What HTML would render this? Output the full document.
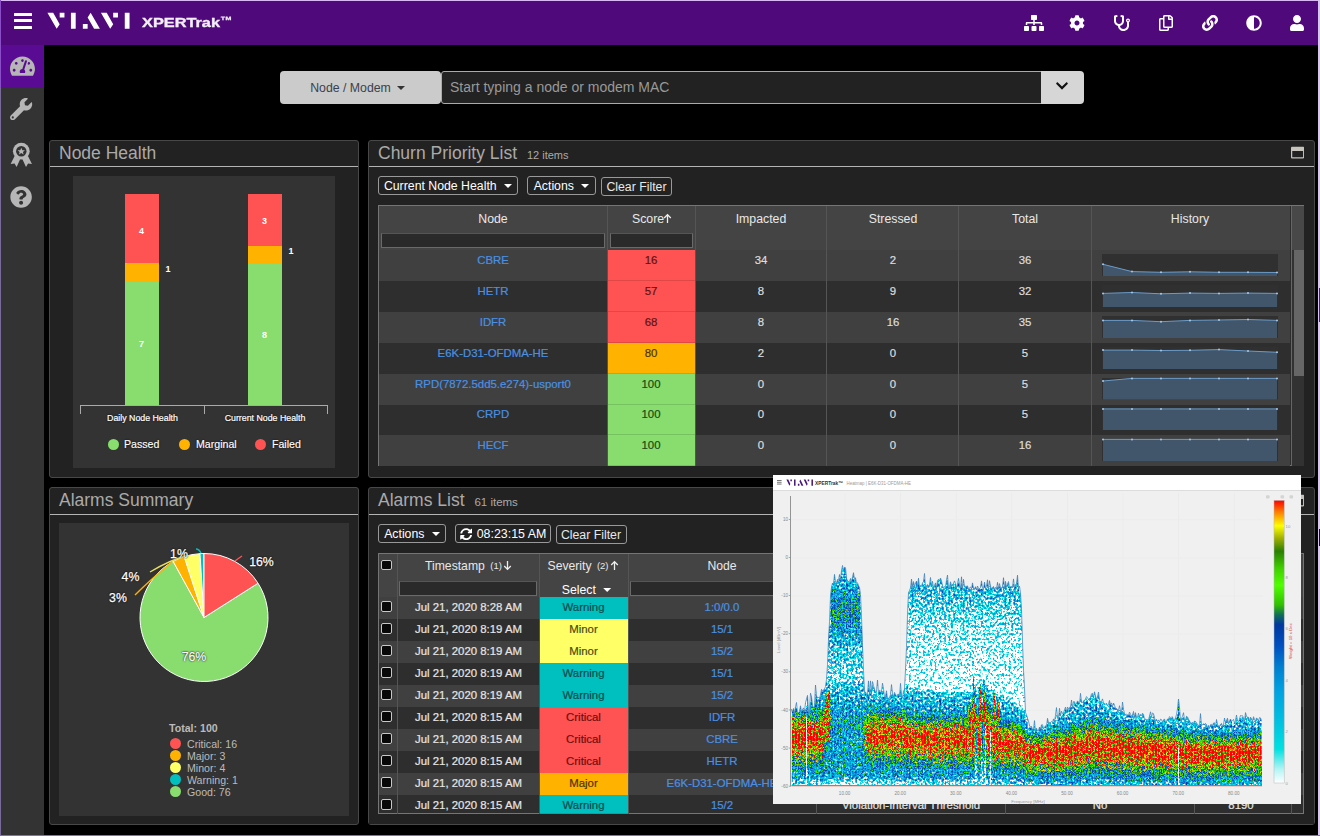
<!DOCTYPE html><html><head><meta charset="utf-8"><title>XPERTrak</title><style>
*{box-sizing:border-box;margin:0;padding:0}
html,body{width:1320px;height:836px;overflow:hidden;background:#000}
body{font-family:"Liberation Sans",sans-serif;position:relative;color:#ddd}
.abs{position:absolute}
#frame{position:absolute;left:0;top:0;width:1320px;height:836px;background:#000;overflow:hidden}
#hdr{position:absolute;left:0;top:0;width:1318px;height:45px;background:#50097b}
#side{position:absolute;left:0;top:45px;width:44px;height:791px;background:#333}
#sideact{position:absolute;left:0;top:45px;width:44px;height:43px;background:#5a0b94}
.panel{position:absolute;background:#222;border:1px solid #484848;border-radius:3px}
.ptitle{position:absolute;left:0;top:0;right:0;height:26.7px;border-bottom:1.2px solid #b4b4b4;color:#aaa;font-size:17.5px;line-height:25.2px;padding-left:9px;white-space:nowrap}
.ptitle small{font-size:12px;color:#aaa;margin-left:5px}
.btn{position:absolute;border:1px solid #999;border-radius:3px;color:#fff;font-size:12.5px;line-height:18.5px;text-align:center;white-space:nowrap;background:#222}
.caret{display:inline-block;width:0;height:0;border-left:4px solid transparent;border-right:4px solid transparent;border-top:4px solid #fff;vertical-align:middle;margin-left:4px;margin-top:-1px}
.t{position:absolute;white-space:nowrap}
.c{transform:translateX(-50%)}
</style></head><body><div id="frame">
<div id="hdr"></div><div id="side"></div><div id="sideact"></div>
<div class="abs" style="left:14px;top:13px;width:18px;height:3px;background:#fff;border-radius:.5px"></div>
<div class="abs" style="left:14px;top:19.3px;width:18px;height:3px;background:#fff;border-radius:.5px"></div>
<div class="abs" style="left:14px;top:25.6px;width:18px;height:3px;background:#fff;border-radius:.5px"></div>
<svg class="abs" style="left:44px;top:8px" width="90" height="26" viewBox="0 0 90 26"><path fill="#fff" d="M3.41 4.77 L9.20 4.77 L15.68 16.16 L12.68 20.79Z M15.68 4.77 L20.45 4.77 L20.45 9.54 L15.68 9.54Z M26.93 4.77 L31.70 4.77 L31.70 20.79 L26.93 20.79Z M55.90 20.79 L50.10 20.79 L43.63 9.41 L46.63 4.77Z M38.85 16.02 L43.63 16.02 L43.63 20.79 L38.85 20.79Z M56.92 4.77 L62.71 4.77 L69.19 16.16 L66.19 20.79Z M69.19 4.77 L73.96 4.77 L73.96 9.54 L69.19 9.54Z M80.78 4.77 L85.55 4.77 L85.55 20.79 L80.78 20.79Z"/></svg>
<div class="t" style="left:141.5px;top:11.1px;font-size:13.6px;font-weight:bold;color:#f3eff7;line-height:18px;-webkit-text-stroke:.35px #f3eff7;transform:scaleX(1.2);transform-origin:0 0">XPERTrak<span style="font-size:10.5px;vertical-align:2.6px;-webkit-text-stroke:.2px #f3eff7">&#8482;</span></div>
<svg class="abs" style="left:1023.5px;top:14.7px" width="20.00" height="16" viewBox="0 0 640 512"><path fill="#fff" d="M128 352H32c-17.67 0-32 14.33-32 32v96c0 17.67 14.33 32 32 32h96c17.67 0 32-14.33 32-32v-96c0-17.67-14.33-32-32-32zm-24-80h192v48h48v-48h192v48h48v-57.59c0-21.17-17.23-38.41-38.41-38.41H344v-64h40c17.67 0 32-14.33 32-32V32c0-17.67-14.33-32-32-32H256c-17.67 0-32 14.33-32 32v96c0 17.67 14.33 32 32 32h40v64H94.41C73.23 224 56 241.23 56 262.41V320h48v-48zm264 80h-96c-17.67 0-32 14.33-32 32v96c0 17.67 14.33 32 32 32h96c17.67 0 32-14.33 32-32v-96c0-17.67-14.33-32-32-32zm240 0h-96c-17.67 0-32 14.33-32 32v96c0 17.67 14.33 32 32 32h96c17.67 0 32-14.33 32-32v-96c0-17.67-14.33-32-32-32z"/></svg>
<svg class="abs" style="left:1069.4px;top:14.5px" width="16.00" height="16" viewBox="0 0 512 512"><path fill="#fff" d="M487.4 315.7l-42.6-24.6c4.3-23.2 4.3-47 0-70.200l42.600-24.600c4.900-2.800 7.100-8.600 5.500-14-11.100-35.600-30-67.800-54.700-94.600-3.800-4.100-10-5.100-14.800-2.300L380.800 110c-17.900-15.400-38.500-27.300-60.800-35.100V25.800c0-5.600-3.900-10.500-9.400-11.700-36.700-8.200-74.300-7.800-109.200 0-5.500 1.200-9.400 6.100-9.400 11.700V75c-22.200 7.900-42.800 19.800-60.800 35.100L88.700 85.500c-4.900-2.800-11-1.900-14.800 2.300-24.700 26.700-43.600 58.900-54.700 94.600-1.700 5.400.6 11.200 5.500 14L67.300 221c-4.300 23.200-4.300 47 0 70.200l-42.600 24.600c-4.900 2.800-7.100 8.600-5.500 14 11.100 35.600 30 67.800 54.700 94.600 3.800 4.100 10 5.100 14.800 2.300l42.600-24.600c17.900 15.400 38.500 27.300 60.800 35.100v49.200c0 5.600 3.900 10.500 9.400 11.700 36.700 8.200 74.300 7.800 109.200 0 5.500-1.200 9.400-6.100 9.400-11.700v-49.200c22.200-7.900 42.800-19.800 60.800-35.100l42.600 24.600c4.900 2.800 11 1.900 14.800-2.300 24.700-26.700 43.600-58.900 54.700-94.600 1.500-5.500-.7-11.300-5.600-14.100zM256 336c-44.100 0-80-35.900-80-80s35.900-80 80-80 80 35.900 80 80-35.900 80-80 80z"/></svg>
<svg class="abs" style="left:1113.6px;top:14.7px" width="16.00" height="16" viewBox="0 0 512 512"><path fill="#fff" d="M447.1 112c-34.2.5-62.3 28.400-63 62.600-.5 24.300 12.500 45.600 32 56.800V344c0 57.300-50.200 104-112 104-60 0-109.200-44.100-111.900-99.200C265 333.800 320 269.200 320 192V36.600c0-11.400-8.100-21.300-19.300-23.500L237.800.5c-13-2.600-25.600 5.800-28.200 18.800L206.400 35c-2.600 13 5.800 25.600 18.800 28.200l30.700 6.100v121.400c0 52.900-42.200 96.700-95.100 97.200-53.400.5-96.900-42.700-96.900-96V69.400l30.700-6.100c13-2.600 21.400-15.200 18.800-28.200l-3.100-15.700C107.700 6.400 95.100-2 82.100.6L19.300 13C8.100 15.300 0 25.100 0 36.600V192c0 77.300 55.100 142 128.100 156.800C130.700 439.200 208.600 512 304 512c97 0 176-75.400 176-168V231.400c19.100-11.100 32-31.700 32-55.400 0-35.700-29.200-64.500-64.900-64zm.9 88c-13.200 0-24-10.800-24-24s10.800-24 24-24 24 10.800 24 24-10.800 24-24 24z"/></svg>
<svg class="abs" style="left:1158.5px;top:14.7px" width="14.00" height="16" viewBox="0 0 448 512"><path fill="#fff" d="M433.941 65.941l-51.882-51.882A48 48 0 0 0 348.118 0H176c-26.510 0-48 21.490-48 48v48H48c-26.510 0-48 21.490-48 48v320c0 26.510 21.490 48 48 48h224c26.510 0 48-21.490 48-48v-48h80c26.510 0 48-21.490 48-48V99.882a48 48 0 0 0-14.059-33.941zM266 464H54a6 6 0 0 1-6-6V150a6 6 0 0 1 6-6h74v224c0 26.510 21.490 48 48 48h96v42a6 6 0 0 1-6 6zm128-96H182a6 6 0 0 1-6-6V54a6 6 0 0 1 6-6h106v88c0 13.255 10.745 24 24 24h88v202a6 6 0 0 1-6 6zm6-256h-64V48h9.632c1.591 0 3.117.632 4.243 1.757l48.368 48.368a6 6 0 0 1 1.757 4.243V112z"/></svg>
<svg class="abs" style="left:1201.5px;top:14.7px" width="16.00" height="16" viewBox="0 0 512 512"><path fill="#fff" d="M326.612 185.391c59.747 59.809 58.927 155.698.36 214.590-.11.12-.24.25-.36.37l-67.200 67.200c-59.270 59.270-155.699 59.262-214.960 0-59.270-59.260-59.270-155.700 0-214.960l37.106-37.106c9.840-9.840 26.786-3.300 27.294 10.606.648 17.722 3.826 35.527 9.690 52.721 1.986 5.822.567 12.262-3.783 16.612l-13.087 13.087c-28.026 28.026-28.905 73.660-1.155 101.960 28.024 28.579 74.086 28.749 102.325.510l67.200-67.190c28.191-28.191 28.073-73.757 0-101.830-3.701-3.694-7.429-6.564-10.341-8.569a16.037 16.037 0 0 1-6.947-12.606c-.396-10.567 3.348-21.456 11.698-29.806l21.054-21.055c5.521-5.521 14.182-6.199 20.584-1.731a152.482 152.482 0 0 1 20.522 17.197zM467.547 44.449c-59.261-59.262-155.690-59.270-214.960 0l-67.200 67.200c-.12.120-.25.250-.36.370-58.566 58.892-59.387 154.781.36 214.590a152.454 152.454 0 0 0 20.521 17.196c6.402 4.468 15.064 3.789 20.584-1.731l21.054-21.055c8.350-8.350 12.094-19.239 11.698-29.806a16.037 16.037 0 0 0-6.947-12.606c-2.912-2.005-6.640-4.875-10.341-8.569-28.073-28.073-28.191-73.639 0-101.830l67.200-67.190c28.239-28.239 74.300-28.069 102.325.510 27.750 28.300 26.872 73.934-1.155 101.960l-13.087 13.087c-4.350 4.350-5.769 10.790-3.783 16.612 5.864 17.194 9.042 34.999 9.690 52.721.509 13.906 17.454 20.446 27.294 10.606l37.106-37.106c59.271-59.259 59.271-155.699.001-214.959z"/></svg>
<svg class="abs" style="left:1245.5px;top:14.7px" width="16.00" height="16" viewBox="0 0 512 512"><path fill="#fff" d="M8 256c0 136.966 111.033 248 248 248s248-111.034 248-248S392.966 8 256 8 8 119.033 8 256zm248 184V72c101.705 0 184 82.311 184 184 0 101.705-82.311 184-184 184z"/></svg>
<svg class="abs" style="left:1290.2px;top:14.7px" width="14.00" height="16" viewBox="0 0 448 512"><path fill="#fff" d="M224 256c70.7 0 128-57.3 128-128S294.7 0 224 0 96 57.3 96 128s57.3 128 128 128zm89.6 32h-16.7c-22.2 10.2-46.9 16-72.900 16s-50.600-5.800-72.900-16h-16.700C60.200 288 0 348.200 0 422.400V464c0 26.500 21.500 48 48 48h352c26.500 0 48-21.500 48-48v-41.600c0-74.200-60.200-134.400-134.400-134.400z"/></svg>
<svg class="abs" style="left:9.8px;top:54.6px" width="24.97" height="22.2" viewBox="0 0 576 512"><path fill="#b6b6b6" d="M288 32C128.94 32 0 160.94 0 320c0 52.8 14.25 102.26 39.06 144.8 5.61 9.62 16.3 15.2 27.440 15.200h443c11.140 0 21.830-5.580 27.440-15.200C561.750 422.260 576 372.800 576 320c0-159.060-128.940-288-288-288zm0 64c14.710 0 26.580 10.130 30.320 23.650-1.110 2.260-2.640 4.230-3.450 6.670l-9.220 27.670c-5.130 3.490-10.970 6.010-17.640 6.010-17.670 0-32-14.330-32-32S270.330 96 288 96zM96 384c-17.670 0-32-14.330-32-32s14.330-32 32-32 32 14.330 32 32-14.330 32-32 32zm48-160c-17.670 0-32-14.330-32-32s14.330-32 32-32 32 14.330 32 32-14.330 32-32 32zm246.770-72.410l-61.330 184C343.130 347.330 352 364.540 352 384c0 11.720-3.380 22.550-8.880 32H232.880c-5.500-9.450-8.880-20.280-8.880-32 0-33.940 26.500-61.430 59.900-63.590l61.340-184.010c4.170-12.560 17.730-19.450 30.360-15.170 12.570 4.190 19.350 17.790 15.170 30.360zm14.660 57.200l15.520-46.550c3.470-1.290 7.130-2.230 11.050-2.230 17.670 0 32 14.330 32 32s-14.330 32-32 32c-11.380-.01-20.890-6.280-26.570-15.220zM480 384c-17.670 0-32-14.330-32-32s14.330-32 32-32 32 14.330 32 32-14.330 32-32 32z"/></svg>
<svg class="abs" style="left:10.4px;top:98.2px" width="22.20" height="22.2" viewBox="0 0 512 512"><path fill="#b6b6b6" d="M507.73 109.1c-2.24-9.03-13.54-12.09-20.120-5.510l-74.360 74.360-67.880-11.310-11.310-67.880 74.360-74.360c6.620-6.620 3.430-17.900-5.660-20.160-47.380-11.740-99.550.91-136.580 37.930-39.640 39.640-50.550 97.100-34.050 147.200L18.740 402.760c-24.990 24.990-24.990 65.510 0 90.500 24.990 24.990 65.510 24.990 90.500 0l213.210-213.210c50.120 16.710 107.470 5.680 147.370-34.220 37.070-37.070 49.700-89.320 37.910-136.730zM64 472c-13.250 0-24-10.750-24-24 0-13.260 10.750-24 24-24s24 10.740 24 24c0 13.250-10.750 24-24 24z"/></svg>
<svg class="abs" style="left:10.2px;top:185.9px" width="22.20" height="22.2" viewBox="0 0 512 512"><path fill="#b6b6b6" d="M504 256c0 136.997-111.043 248-248 248S8 392.997 8 256C8 119.083 119.043 8 256 8s248 111.083 248 248zM262.655 90c-54.497 0-89.255 22.957-116.549 63.758-3.536 5.286-2.353 12.415 2.715 16.258l34.699 26.310c5.205 3.947 12.621 3.008 16.665-2.122 17.864-22.658 30.113-35.797 57.303-35.797 20.429 0 45.698 13.148 45.698 32.958 0 14.976-12.363 22.667-32.534 33.976C247.128 238.528 216 254.941 216 296v4c0 6.627 5.373 12 12 12h56c6.627 0 12-5.373 12-12v-1.333c0-28.462 83.186-29.647 83.186-106.667 0-58.002-60.165-102-116.531-102zM256 338c-25.365 0-46 20.635-46 46 0 25.364 20.635 46 46 46s46-20.636 46-46c0-25.365-20.635-46-46-46z"/></svg>
<svg class="abs" style="left:9px;top:141.5px" width="24.6" height="25.6" viewBox="0 0 24 25"><path fill="#b6b6b6" d="M5.6 13.5 L1.6 21.6 L5.4 21 L7.4 24.4 L11 16.5Z M18.4 13.5 L22.4 21.6 L18.6 21 L16.6 24.4 L13 16.5Z"/><circle cx="12" cy="9" r="8.2" fill="#b6b6b6"/><circle cx="12" cy="9" r="5.1" fill="#333"/><path fill="#b6b6b6" d="M12 5.6 L13 8 L15.600 8.100 L13.600 9.700 L14.300 12.200 L12 10.800 L9.700 12.200 L10.400 9.700 L8.400 8.100 L11 8Z"/></svg>
<div class="abs" style="left:280px;top:71px;width:160.5px;height:33px;background:#cbcbcb;border-radius:4px;color:#3a4250;font-size:12.3px;line-height:34.5px;text-align:center;padding-right:5px">Node / Modem <span class="caret" style="border-top-color:#333;margin-left:3px"></span></div>
<div class="abs" style="left:441px;top:71px;width:601px;height:33px;background:#222;border:1px solid #aaa;border-radius:3px 0 0 3px;color:#999;font-size:14px;line-height:30px;padding-left:8px">Start typing a node or modem MAC</div>
<div class="abs" style="left:1041px;top:71px;width:43px;height:33px;background:#d6d6d6;border-radius:0 4px 4px 0"></div>
<svg class="abs" style="left:1056px;top:79.4px" width="11.99" height="13.7" viewBox="0 0 448 512"><path fill="#111" d="M207.029 381.476L12.686 187.132c-9.373-9.373-9.373-24.569 0-33.941l22.667-22.667c9.357-9.357 24.522-9.375 33.901-.04L224 284.505l154.745-154.021c9.379-9.335 24.544-9.317 33.901.04l22.667 22.667c9.373 9.373 9.373 24.569 0 33.941L240.971 381.476c-9.373 9.372-24.569 9.372-33.942 0z"/></svg>
<div class="panel" style="left:49px;top:139.6px;width:310px;height:338.4px"><div class="ptitle">Node Health</div></div>
<div class="abs" style="left:73px;top:176px;width:262px;height:292px;background:#333"></div>
<div class="abs" style="left:125px;top:193.5px;width:34px;height:69.5px;background:#ff5252"></div><div class="abs" style="left:125px;top:263px;width:34px;height:18.5px;background:#ffb300"></div><div class="abs" style="left:125px;top:281.5px;width:34px;height:123.0px;background:#88dd6e"></div>
<div class="abs" style="left:248px;top:193.5px;width:34px;height:52.5px;background:#ff5252"></div><div class="abs" style="left:248px;top:246px;width:34px;height:18px;background:#ffb300"></div><div class="abs" style="left:248px;top:264px;width:34px;height:140.5px;background:#88dd6e"></div>
<div class="abs" style="left:80px;top:405px;width:248px;height:9px;border:1px solid #aaa;border-bottom:none"></div><div class="abs" style="left:203.5px;top:405px;width:1px;height:9px;background:#aaa"></div>
<div class="t c" style="left:141.5px;top:225.5px;font-size:9px;line-height:11px;color:#fff;font-weight:bold;">4</div>
<div class="t c" style="left:168px;top:263.5px;font-size:9px;line-height:11px;color:#fff;font-weight:bold;">1</div>
<div class="t c" style="left:141.5px;top:339px;font-size:9px;line-height:11px;color:#fff;font-weight:bold;">7</div>
<div class="t c" style="left:264.5px;top:216px;font-size:9px;line-height:11px;color:#fff;font-weight:bold;">3</div>
<div class="t c" style="left:291px;top:246px;font-size:9px;line-height:11px;color:#fff;font-weight:bold;">1</div>
<div class="t c" style="left:264.5px;top:330px;font-size:9px;line-height:11px;color:#fff;font-weight:bold;">8</div>
<div class="t c" style="left:142.5px;top:413px;font-size:8.8px;line-height:10.8px;color:#fff;text-shadow:0 0 2px #000;-webkit-text-stroke:.2px #fff">Daily Node Health</div>
<div class="t c" style="left:265px;top:413px;font-size:8.8px;line-height:10.8px;color:#fff;text-shadow:0 0 2px #000;-webkit-text-stroke:.2px #fff">Current Node Health</div>
<div class="abs" style="left:107.5px;top:438.7px;width:11px;height:11px;border-radius:50%;background:#88dd6e"></div>
<div class="t" style="left:124px;top:437.3px;font-size:10.6px;line-height:14px;color:#fff;text-shadow:0 0 2px #000;-webkit-text-stroke:.15px #fff">Passed</div>
<div class="abs" style="left:178.5px;top:438.7px;width:11px;height:11px;border-radius:50%;background:#ffb300"></div>
<div class="t" style="left:196px;top:437.3px;font-size:10.6px;line-height:14px;color:#fff;text-shadow:0 0 2px #000;-webkit-text-stroke:.15px #fff">Marginal</div>
<div class="abs" style="left:255.0px;top:438.7px;width:11px;height:11px;border-radius:50%;background:#ff5252"></div>
<div class="t" style="left:272px;top:437.3px;font-size:10.6px;line-height:14px;color:#fff;text-shadow:0 0 2px #000;-webkit-text-stroke:.15px #fff">Failed</div>
<div class="panel" style="left:368px;top:139.6px;width:947px;height:338.4px"><div class="ptitle">Churn Priority List <small style="font-size:11px">12 items</small></div></div>
<svg class="abs" style="left:1291.1px;top:146px" width="13.30" height="13.3" viewBox="0 0 512 512"><path fill="#c6c2bc" d="M464 32H48C21.5 32 0 53.5 0 80v352c0 26.500 21.500 48 48 48h416c26.500 0 48-21.500 48-48V80c0-26.500-21.500-48-48-48zm0 394c0 3.300-2.700 6-6 6H54c-3.300 0-6-2.700-6-6V192h416v234z"/></svg>
<div class="btn" style="left:378px;top:176px;width:140px;height:19px;font-size:12.3px">Current Node Health <span class="caret"></span></div>
<div class="btn" style="left:527px;top:176px;width:69px;height:19px;font-size:12.3px">Actions <span class="caret"></span></div>
<div class="btn" style="left:601px;top:177px;width:71px;height:19px;font-size:12.3px;color:#e8e8e8">Clear Filter</div>
<div class="abs" style="left:378px;top:205px;width:926px;height:261px;background:#2d2d2d;border:1px solid #757575"></div>
<div class="abs" style="left:379px;top:206px;width:911px;height:44px;background:#444"></div>
<div class="abs" style="left:379px;top:250px;width:911px;height:31px;background:#404040"></div>
<div class="abs" style="left:608px;top:250px;width:87.5px;height:31px;background:#ff5252;border-bottom:1px solid rgba(0,0,0,.12)"></div>
<div class="abs" style="left:379px;top:281px;width:911px;height:31px;background:#2e2e2e"></div>
<div class="abs" style="left:608px;top:281px;width:87.5px;height:31px;background:#ff5252;border-bottom:1px solid rgba(0,0,0,.12)"></div>
<div class="abs" style="left:379px;top:312px;width:911px;height:31px;background:#404040"></div>
<div class="abs" style="left:608px;top:312px;width:87.5px;height:31px;background:#ff5252;border-bottom:1px solid rgba(0,0,0,.12)"></div>
<div class="abs" style="left:379px;top:343px;width:911px;height:31px;background:#2e2e2e"></div>
<div class="abs" style="left:608px;top:343px;width:87.5px;height:31px;background:#ffb300;border-bottom:1px solid rgba(0,0,0,.12)"></div>
<div class="abs" style="left:379px;top:374px;width:911px;height:30.5px;background:#404040"></div>
<div class="abs" style="left:608px;top:374px;width:87.5px;height:30.5px;background:#88dd6e;border-bottom:1px solid rgba(0,0,0,.12)"></div>
<div class="abs" style="left:379px;top:404.5px;width:911px;height:30.5px;background:#2e2e2e"></div>
<div class="abs" style="left:608px;top:404.5px;width:87.5px;height:30.5px;background:#88dd6e;border-bottom:1px solid rgba(0,0,0,.12)"></div>
<div class="abs" style="left:379px;top:435px;width:911px;height:31px;background:#404040"></div>
<div class="abs" style="left:608px;top:435px;width:87.5px;height:31px;background:#88dd6e;border-bottom:1px solid rgba(0,0,0,.12)"></div>
<div class="abs" style="left:607.0px;top:206px;width:1px;height:260px;background:#555"></div>
<div class="abs" style="left:695.0px;top:206px;width:1px;height:260px;background:#555"></div>
<div class="abs" style="left:826.0px;top:206px;width:1px;height:260px;background:#555"></div>
<div class="abs" style="left:958.0px;top:206px;width:1px;height:260px;background:#555"></div>
<div class="abs" style="left:1090.5px;top:206px;width:1px;height:260px;background:#555"></div>
<div class="t c" style="left:493px;top:212px;font-size:12.3px;line-height:14.3px;color:#e8e8e8;">Node</div>
<div class="t c" style="left:648px;top:212px;font-size:12.3px;line-height:14.3px;color:#e8e8e8;">Score</div>
<svg class="abs" style="left:663px;top:213px" width="9" height="11" viewBox="0 0 9 11"><path d="M4.5 10 V2 M1.2 5 L4.5 1.6 L7.8 5" fill="none" stroke="#eee" stroke-width="1.3"/></svg>
<div class="t c" style="left:761px;top:212px;font-size:12.3px;line-height:14.3px;color:#e8e8e8;">Impacted</div>
<div class="t c" style="left:893px;top:212px;font-size:12.3px;line-height:14.3px;color:#e8e8e8;">Stressed</div>
<div class="t c" style="left:1025px;top:212px;font-size:12.3px;line-height:14.3px;color:#e8e8e8;">Total</div>
<div class="t c" style="left:1190px;top:212px;font-size:12.3px;line-height:14.3px;color:#e8e8e8;">History</div>
<div class="abs" style="left:380.5px;top:232.5px;width:224px;height:15.5px;background:#2a2a2a;border:1.5px solid #6a6a6a;border-top-color:#555"></div>
<div class="abs" style="left:610px;top:232.5px;width:82.5px;height:15.5px;background:#2a2a2a;border:1.5px solid #6a6a6a;border-top-color:#555"></div>
<div class="t c" style="left:493px;top:253.5px;font-size:11.4px;line-height:13.4px;color:#4a90e2;-webkit-text-stroke:.2px #4a90e2">CBRE</div>
<div class="t c" style="left:651px;top:253.5px;font-size:11.4px;line-height:13.4px;color:#5e1414;-webkit-text-stroke:.2px">16</div>
<div class="t c" style="left:761px;top:253.5px;font-size:11.4px;line-height:13.4px;color:#ddd;-webkit-text-stroke:.2px #ddd">34</div>
<div class="t c" style="left:893px;top:253.5px;font-size:11.4px;line-height:13.4px;color:#ddd;-webkit-text-stroke:.2px #ddd">2</div>
<div class="t c" style="left:1025px;top:253.5px;font-size:11.4px;line-height:13.4px;color:#ddd;-webkit-text-stroke:.2px #ddd">36</div>
<div class="t c" style="left:493px;top:284.5px;font-size:11.4px;line-height:13.4px;color:#4a90e2;-webkit-text-stroke:.2px #4a90e2">HETR</div>
<div class="t c" style="left:651px;top:284.5px;font-size:11.4px;line-height:13.4px;color:#5e1414;-webkit-text-stroke:.2px">57</div>
<div class="t c" style="left:761px;top:284.5px;font-size:11.4px;line-height:13.4px;color:#ddd;-webkit-text-stroke:.2px #ddd">8</div>
<div class="t c" style="left:893px;top:284.5px;font-size:11.4px;line-height:13.4px;color:#ddd;-webkit-text-stroke:.2px #ddd">9</div>
<div class="t c" style="left:1025px;top:284.5px;font-size:11.4px;line-height:13.4px;color:#ddd;-webkit-text-stroke:.2px #ddd">32</div>
<div class="t c" style="left:493px;top:315.5px;font-size:11.4px;line-height:13.4px;color:#4a90e2;-webkit-text-stroke:.2px #4a90e2">IDFR</div>
<div class="t c" style="left:651px;top:315.5px;font-size:11.4px;line-height:13.4px;color:#5e1414;-webkit-text-stroke:.2px">68</div>
<div class="t c" style="left:761px;top:315.5px;font-size:11.4px;line-height:13.4px;color:#ddd;-webkit-text-stroke:.2px #ddd">8</div>
<div class="t c" style="left:893px;top:315.5px;font-size:11.4px;line-height:13.4px;color:#ddd;-webkit-text-stroke:.2px #ddd">16</div>
<div class="t c" style="left:1025px;top:315.5px;font-size:11.4px;line-height:13.4px;color:#ddd;-webkit-text-stroke:.2px #ddd">35</div>
<div class="t c" style="left:493px;top:346.5px;font-size:11.4px;line-height:13.4px;color:#4a90e2;-webkit-text-stroke:.2px #4a90e2">E6K-D31-OFDMA-HE</div>
<div class="t c" style="left:651px;top:346.5px;font-size:11.4px;line-height:13.4px;color:#4e3200;-webkit-text-stroke:.2px">80</div>
<div class="t c" style="left:761px;top:346.5px;font-size:11.4px;line-height:13.4px;color:#ddd;-webkit-text-stroke:.2px #ddd">2</div>
<div class="t c" style="left:893px;top:346.5px;font-size:11.4px;line-height:13.4px;color:#ddd;-webkit-text-stroke:.2px #ddd">0</div>
<div class="t c" style="left:1025px;top:346.5px;font-size:11.4px;line-height:13.4px;color:#ddd;-webkit-text-stroke:.2px #ddd">5</div>
<div class="t c" style="left:493px;top:377.5px;font-size:11.4px;line-height:13.4px;color:#4a90e2;-webkit-text-stroke:.2px #4a90e2">RPD(7872.5dd5.e274)-usport0</div>
<div class="t c" style="left:651px;top:377.5px;font-size:11.4px;line-height:13.4px;color:#1d4a14;-webkit-text-stroke:.2px">100</div>
<div class="t c" style="left:761px;top:377.5px;font-size:11.4px;line-height:13.4px;color:#ddd;-webkit-text-stroke:.2px #ddd">0</div>
<div class="t c" style="left:893px;top:377.5px;font-size:11.4px;line-height:13.4px;color:#ddd;-webkit-text-stroke:.2px #ddd">0</div>
<div class="t c" style="left:1025px;top:377.5px;font-size:11.4px;line-height:13.4px;color:#ddd;-webkit-text-stroke:.2px #ddd">5</div>
<div class="t c" style="left:493px;top:408.0px;font-size:11.4px;line-height:13.4px;color:#4a90e2;-webkit-text-stroke:.2px #4a90e2">CRPD</div>
<div class="t c" style="left:651px;top:408.0px;font-size:11.4px;line-height:13.4px;color:#1d4a14;-webkit-text-stroke:.2px">100</div>
<div class="t c" style="left:761px;top:408.0px;font-size:11.4px;line-height:13.4px;color:#ddd;-webkit-text-stroke:.2px #ddd">0</div>
<div class="t c" style="left:893px;top:408.0px;font-size:11.4px;line-height:13.4px;color:#ddd;-webkit-text-stroke:.2px #ddd">0</div>
<div class="t c" style="left:1025px;top:408.0px;font-size:11.4px;line-height:13.4px;color:#ddd;-webkit-text-stroke:.2px #ddd">5</div>
<div class="t c" style="left:493px;top:438.5px;font-size:11.4px;line-height:13.4px;color:#4a90e2;-webkit-text-stroke:.2px #4a90e2">HECF</div>
<div class="t c" style="left:651px;top:438.5px;font-size:11.4px;line-height:13.4px;color:#1d4a14;-webkit-text-stroke:.2px">100</div>
<div class="t c" style="left:761px;top:438.5px;font-size:11.4px;line-height:13.4px;color:#ddd;-webkit-text-stroke:.2px #ddd">0</div>
<div class="t c" style="left:893px;top:438.5px;font-size:11.4px;line-height:13.4px;color:#ddd;-webkit-text-stroke:.2px #ddd">0</div>
<div class="t c" style="left:1025px;top:438.5px;font-size:11.4px;line-height:13.4px;color:#ddd;-webkit-text-stroke:.2px #ddd">16</div>
<svg class="abs" style="left:0;top:0" width="1320" height="836" viewBox="0 0 1320 836"><rect x="1102" y="254" width="176" height="22" fill="#303030"/><polygon points="1103,276 1103.0,264.3 1132.0,271.6 1161.0,272.3 1190.0,271.8 1219.0,272.3 1248.0,272.3 1277.0,272.5 1277,276" fill="#41566b"/><polyline points="1103.0,264.3 1132.0,271.6 1161.0,272.3 1190.0,271.8 1219.0,272.3 1248.0,272.3 1277.0,272.5" fill="none" stroke="#6b9bc7" stroke-width="1"/><circle cx="1103.0" cy="264.3" r="1" fill="#a8c8e8"/><circle cx="1132.0" cy="271.6" r="1" fill="#a8c8e8"/><circle cx="1161.0" cy="272.3" r="1" fill="#a8c8e8"/><circle cx="1190.0" cy="271.8" r="1" fill="#a8c8e8"/><circle cx="1219.0" cy="272.3" r="1" fill="#a8c8e8"/><circle cx="1248.0" cy="272.3" r="1" fill="#a8c8e8"/><circle cx="1277.0" cy="272.5" r="1" fill="#a8c8e8"/><rect x="1102" y="285" width="176" height="22" fill="#303030"/><polygon points="1103,307 1103.0,293.4 1132.0,292.5 1161.0,293.8 1190.0,293.1 1219.0,293.4 1248.0,293.1 1277.0,293.4 1277,307" fill="#41566b"/><polyline points="1103.0,293.4 1132.0,292.5 1161.0,293.8 1190.0,293.1 1219.0,293.4 1248.0,293.1 1277.0,293.4" fill="none" stroke="#6b9bc7" stroke-width="1"/><circle cx="1103.0" cy="293.4" r="1" fill="#a8c8e8"/><circle cx="1132.0" cy="292.5" r="1" fill="#a8c8e8"/><circle cx="1161.0" cy="293.8" r="1" fill="#a8c8e8"/><circle cx="1190.0" cy="293.1" r="1" fill="#a8c8e8"/><circle cx="1219.0" cy="293.4" r="1" fill="#a8c8e8"/><circle cx="1248.0" cy="293.1" r="1" fill="#a8c8e8"/><circle cx="1277.0" cy="293.4" r="1" fill="#a8c8e8"/><rect x="1102" y="316" width="176" height="22" fill="#303030"/><polygon points="1103,338 1103.0,320.4 1132.0,320.4 1161.0,321.7 1190.0,320.4 1219.0,320.0 1248.0,319.5 1277.0,320.4 1277,338" fill="#41566b"/><polyline points="1103.0,320.4 1132.0,320.4 1161.0,321.7 1190.0,320.4 1219.0,320.0 1248.0,319.5 1277.0,320.4" fill="none" stroke="#6b9bc7" stroke-width="1"/><circle cx="1103.0" cy="320.4" r="1" fill="#a8c8e8"/><circle cx="1132.0" cy="320.4" r="1" fill="#a8c8e8"/><circle cx="1161.0" cy="321.7" r="1" fill="#a8c8e8"/><circle cx="1190.0" cy="320.4" r="1" fill="#a8c8e8"/><circle cx="1219.0" cy="320.0" r="1" fill="#a8c8e8"/><circle cx="1248.0" cy="319.5" r="1" fill="#a8c8e8"/><circle cx="1277.0" cy="320.4" r="1" fill="#a8c8e8"/><rect x="1102" y="347" width="176" height="22" fill="#303030"/><polygon points="1103,369 1103.0,350.1 1132.0,350.1 1161.0,350.5 1190.0,350.3 1219.0,349.6 1248.0,351.0 1277.0,352.3 1277,369" fill="#41566b"/><polyline points="1103.0,350.1 1132.0,350.1 1161.0,350.5 1190.0,350.3 1219.0,349.6 1248.0,351.0 1277.0,352.3" fill="none" stroke="#6b9bc7" stroke-width="1"/><circle cx="1103.0" cy="350.1" r="1" fill="#a8c8e8"/><circle cx="1132.0" cy="350.1" r="1" fill="#a8c8e8"/><circle cx="1161.0" cy="350.5" r="1" fill="#a8c8e8"/><circle cx="1190.0" cy="350.3" r="1" fill="#a8c8e8"/><circle cx="1219.0" cy="349.6" r="1" fill="#a8c8e8"/><circle cx="1248.0" cy="351.0" r="1" fill="#a8c8e8"/><circle cx="1277.0" cy="352.3" r="1" fill="#a8c8e8"/><rect x="1102" y="378" width="176" height="21.5" fill="#303030"/><polygon points="1103,399.5 1103.0,381.0 1132.0,378.4 1161.0,378.4 1190.0,378.4 1219.0,378.4 1248.0,378.4 1277.0,378.4 1277,399.5" fill="#41566b"/><polyline points="1103.0,381.0 1132.0,378.4 1161.0,378.4 1190.0,378.4 1219.0,378.4 1248.0,378.4 1277.0,378.4" fill="none" stroke="#6b9bc7" stroke-width="1"/><circle cx="1103.0" cy="381.0" r="1" fill="#a8c8e8"/><circle cx="1132.0" cy="378.4" r="1" fill="#a8c8e8"/><circle cx="1161.0" cy="378.4" r="1" fill="#a8c8e8"/><circle cx="1190.0" cy="378.4" r="1" fill="#a8c8e8"/><circle cx="1219.0" cy="378.4" r="1" fill="#a8c8e8"/><circle cx="1248.0" cy="378.4" r="1" fill="#a8c8e8"/><circle cx="1277.0" cy="378.4" r="1" fill="#a8c8e8"/><rect x="1102" y="408.5" width="176" height="21.5" fill="#303030"/><polygon points="1103,430 1103.0,408.9 1132.0,408.9 1161.0,408.9 1190.0,408.9 1219.0,408.9 1248.0,408.9 1277.0,408.9 1277,430" fill="#41566b"/><polyline points="1103.0,408.9 1132.0,408.9 1161.0,408.9 1190.0,408.9 1219.0,408.9 1248.0,408.9 1277.0,408.9" fill="none" stroke="#6b9bc7" stroke-width="1"/><circle cx="1103.0" cy="408.9" r="1" fill="#a8c8e8"/><circle cx="1132.0" cy="408.9" r="1" fill="#a8c8e8"/><circle cx="1161.0" cy="408.9" r="1" fill="#a8c8e8"/><circle cx="1190.0" cy="408.9" r="1" fill="#a8c8e8"/><circle cx="1219.0" cy="408.9" r="1" fill="#a8c8e8"/><circle cx="1248.0" cy="408.9" r="1" fill="#a8c8e8"/><circle cx="1277.0" cy="408.9" r="1" fill="#a8c8e8"/><rect x="1102" y="439" width="176" height="22" fill="#303030"/><polygon points="1103,461 1103.0,439.4 1132.0,439.4 1161.0,439.4 1190.0,439.4 1219.0,439.4 1248.0,439.4 1277.0,439.4 1277,461" fill="#41566b"/><polyline points="1103.0,439.4 1132.0,439.4 1161.0,439.4 1190.0,439.4 1219.0,439.4 1248.0,439.4 1277.0,439.4" fill="none" stroke="#6b9bc7" stroke-width="1"/><circle cx="1103.0" cy="439.4" r="1" fill="#a8c8e8"/><circle cx="1132.0" cy="439.4" r="1" fill="#a8c8e8"/><circle cx="1161.0" cy="439.4" r="1" fill="#a8c8e8"/><circle cx="1190.0" cy="439.4" r="1" fill="#a8c8e8"/><circle cx="1219.0" cy="439.4" r="1" fill="#a8c8e8"/><circle cx="1248.0" cy="439.4" r="1" fill="#a8c8e8"/><circle cx="1277.0" cy="439.4" r="1" fill="#a8c8e8"/></svg>
<div class="abs" style="left:1290.5px;top:206px;width:13px;height:260px;background:linear-gradient(#484848 0,#484848 44px,#323232 44px);border-left:1px solid #666"></div>
<div class="abs" style="left:1294px;top:250px;width:9.5px;height:126px;background:#666"></div>
<div class="panel" style="left:49px;top:487px;width:310px;height:338px"><div class="ptitle">Alarms Summary</div></div>
<div class="abs" style="left:59px;top:522.5px;width:290px;height:293px;background:#333"></div>
<svg class="abs" style="left:0;top:0" width="1320" height="836" viewBox="0 0 1320 836"><path d="M204 617.5 L258.04 583.21 A64 64 0 1 1 173.17 561.42Z" fill="#88dd6e" stroke="#fff" stroke-width="1" stroke-linejoin="round"/><path d="M204 617.5 L173.17 561.42 A64 64 0 0 1 184.22 556.63Z" fill="#ffb300" stroke="#fff" stroke-width="1" stroke-linejoin="round"/><path d="M204 617.5 L184.22 556.63 A64 64 0 0 1 199.98 553.63Z" fill="#ffff66" stroke="#fff" stroke-width="1" stroke-linejoin="round"/><path d="M204 617.5 L199.98 553.63 A64 64 0 0 1 204.00 553.50Z" fill="#00bfbf" stroke="#fff" stroke-width="1" stroke-linejoin="round"/><path d="M204 617.5 L204.00 553.50 A64 64 0 0 1 258.04 583.21Z" fill="#ff5252" stroke="#fff" stroke-width="1" stroke-linejoin="round"/><path d="M235 561 Q239 558 242 556" stroke="#ff5252" fill="none" stroke-width="1.4"/><path d="M201 553 Q199 549 196 549" stroke="#00bfbf" fill="none" stroke-width="1.4"/><path d="M186 556 Q170 560 150 572" stroke="#e8e060" fill="none" stroke-width="1.4"/><path d="M172 562 Q150 580 135 595" stroke="#ffb300" fill="none" stroke-width="1.4"/></svg>
<div class="t c" style="left:261.5px;top:555.2px;font-size:12.3px;line-height:14.3px;color:#fff;text-shadow:0 0 2px #000,0 0 1px #000;-webkit-text-stroke:.25px #fff">16%</div>
<div class="t c" style="left:179px;top:546.7px;font-size:12.3px;line-height:14.3px;color:#fff;text-shadow:0 0 2px #000,0 0 1px #000;-webkit-text-stroke:.25px #fff">1%</div>
<div class="t c" style="left:130.5px;top:569.7px;font-size:12.3px;line-height:14.3px;color:#fff;text-shadow:0 0 2px #000,0 0 1px #000;-webkit-text-stroke:.25px #fff">4%</div>
<div class="t c" style="left:118px;top:591.2px;font-size:12.3px;line-height:14.3px;color:#fff;text-shadow:0 0 2px #000,0 0 1px #000;-webkit-text-stroke:.25px #fff">3%</div>
<div class="t c" style="left:194px;top:650.2px;font-size:12.3px;line-height:14.3px;color:#fff;text-shadow:0 0 2px #000,0 0 1px #000;-webkit-text-stroke:.25px #fff">76%</div>
<div class="t" style="left:169px;top:721px;font-size:10.6px;line-height:14px;font-weight:bold;color:#bbb">Total: 100</div>
<div class="abs" style="left:170px;top:738.0px;width:11px;height:11px;border-radius:50%;background:#ff5252"></div>
<div class="t" style="left:187px;top:736.5px;font-size:10.6px;line-height:14px;color:#bbb">Critical: 16</div>
<div class="abs" style="left:170px;top:750.1px;width:11px;height:11px;border-radius:50%;background:#ffb300"></div>
<div class="t" style="left:187px;top:748.6px;font-size:10.6px;line-height:14px;color:#bbb">Major: 3</div>
<div class="abs" style="left:170px;top:762.2px;width:11px;height:11px;border-radius:50%;background:#ffff66"></div>
<div class="t" style="left:187px;top:760.7px;font-size:10.6px;line-height:14px;color:#bbb">Minor: 4</div>
<div class="abs" style="left:170px;top:774.3px;width:11px;height:11px;border-radius:50%;background:#00bfbf"></div>
<div class="t" style="left:187px;top:772.8px;font-size:10.6px;line-height:14px;color:#bbb">Warning: 1</div>
<div class="abs" style="left:170px;top:786.4px;width:11px;height:11px;border-radius:50%;background:#88dd6e"></div>
<div class="t" style="left:187px;top:784.9px;font-size:10.6px;line-height:14px;color:#bbb">Good: 76</div>
<div class="panel" style="left:368px;top:487px;width:947px;height:338px"><div class="ptitle">Alarms List <small style="font-size:11.5px">61 items</small></div></div>
<svg class="abs" style="left:1291.1px;top:494px" width="13.30" height="13.3" viewBox="0 0 512 512"><path fill="#c6c2bc" d="M464 32H48C21.5 32 0 53.5 0 80v352c0 26.500 21.500 48 48 48h416c26.500 0 48-21.500 48-48V80c0-26.500-21.500-48-48-48zm0 394c0 3.300-2.700 6-6 6H54c-3.300 0-6-2.700-6-6V192h416v234z"/></svg>
<div class="btn" style="left:378px;top:523.5px;width:68px;height:19px;font-size:12.3px">Actions <span class="caret"></span></div>
<div class="btn" style="left:455px;top:523.5px;width:96px;height:19px;font-size:12.4px;padding-left:17px">08:23:15 AM</div>
<svg class="abs" style="left:460.1px;top:527.6px" width="12.30" height="12.3" viewBox="0 0 512 512"><path fill="#fff" d="M370.72 133.28C339.458 104.008 298.888 87.962 255.848 88c-77.458.068-144.328 53.178-162.791 126.850-1.344 5.363-6.122 9.150-11.651 9.150H24.103c-7.498 0-13.194-6.807-11.807-14.176C33.933 94.924 134.813 8 256 8c66.448 0 126.791 26.136 171.315 68.685L463.030 40.970C478.149 25.851 504 36.559 504 57.941V192c0 13.255-10.745 24-24 24H345.941c-21.382 0-32.090-25.851-16.971-40.971l41.750-41.749zM32 296h134.059c21.382 0 32.090 25.851 16.971 40.971l-41.750 41.750c31.262 29.273 71.835 45.319 114.876 45.280 77.418-.07 144.315-53.144 162.787-126.849 1.344-5.363 6.122-9.150 11.651-9.150h57.304c7.498 0 13.194 6.807 11.807 14.176C478.067 417.076 377.187 504 256 504c-66.448 0-126.791-26.136-171.315-68.685L48.970 471.030C33.851 486.149 8 475.441 8 454.059V320c0-13.255 10.745-24 24-24z"/></svg>
<div class="btn" style="left:555.5px;top:524.5px;width:71px;height:19px;font-size:12.3px;color:#e8e8e8">Clear Filter</div>
<div class="abs" style="left:378px;top:552.5px;width:926px;height:261.5px;background:#2b2b2b;border:1px solid #757575"></div>
<div class="abs" style="left:379px;top:553.5px;width:924px;height:43.5px;background:#444"></div>
<div class="abs" style="left:379px;top:597px;width:924px;height:22px;background:#404040"></div>
<div class="abs" style="left:539.5px;top:597px;width:88.5px;height:22px;background:#00bfbf"></div>
<div class="abs" style="left:379px;top:619px;width:924px;height:22px;background:#2e2e2e"></div>
<div class="abs" style="left:539.5px;top:619px;width:88.5px;height:22px;background:#ffff66"></div>
<div class="abs" style="left:379px;top:641px;width:924px;height:22px;background:#404040"></div>
<div class="abs" style="left:539.5px;top:641px;width:88.5px;height:22px;background:#ffff66"></div>
<div class="abs" style="left:379px;top:663px;width:924px;height:22px;background:#2e2e2e"></div>
<div class="abs" style="left:539.5px;top:663px;width:88.5px;height:22px;background:#00bfbf"></div>
<div class="abs" style="left:379px;top:685px;width:924px;height:22px;background:#404040"></div>
<div class="abs" style="left:539.5px;top:685px;width:88.5px;height:22px;background:#00bfbf"></div>
<div class="abs" style="left:379px;top:707px;width:924px;height:22px;background:#2e2e2e"></div>
<div class="abs" style="left:539.5px;top:707px;width:88.5px;height:22px;background:#ff5252"></div>
<div class="abs" style="left:379px;top:729px;width:924px;height:22px;background:#404040"></div>
<div class="abs" style="left:539.5px;top:729px;width:88.5px;height:22px;background:#ff5252"></div>
<div class="abs" style="left:379px;top:751px;width:924px;height:22px;background:#2e2e2e"></div>
<div class="abs" style="left:539.5px;top:751px;width:88.5px;height:22px;background:#ff5252"></div>
<div class="abs" style="left:379px;top:773px;width:924px;height:22px;background:#404040"></div>
<div class="abs" style="left:539.5px;top:773px;width:88.5px;height:22px;background:#ffb300"></div>
<div class="abs" style="left:379px;top:795px;width:924px;height:18px;background:#2e2e2e"></div>
<div class="abs" style="left:539.5px;top:795px;width:88.5px;height:18px;background:#00bfbf"></div>
<div class="abs" style="left:396.5px;top:553.5px;width:1px;height:260px;background:#555"></div>
<div class="abs" style="left:539.0px;top:553.5px;width:1px;height:260px;background:#555"></div>
<div class="abs" style="left:627.5px;top:553.5px;width:1px;height:260px;background:#555"></div>
<div class="abs" style="left:816.0px;top:553.5px;width:1px;height:260px;background:#555"></div>
<div class="abs" style="left:1004.5px;top:553.5px;width:1px;height:260px;background:#555"></div>
<div class="abs" style="left:1193.5px;top:553.5px;width:1px;height:260px;background:#555"></div>
<div class="abs" style="left:1290.5px;top:553.5px;width:1px;height:260px;background:#555"></div>
<div class="abs" style="left:380.8px;top:559.6px;width:11.2px;height:10.8px;background:#080808;border:1.3px solid #c8c8c8;border-radius:2px"></div>
<div class="t" style="left:425px;top:558px;font-size:12.2px;line-height:15px;color:#e8e8e8">Timestamp <span style="font-size:9.5px;vertical-align:1px;margin-left:2px">(1)</span></div>
<svg class="abs" style="left:502.5px;top:560px" width="9" height="11" viewBox="0 0 9 11"><path d="M4.5 1 V9 M1.2 6 L4.5 9.4 L7.8 6" fill="none" stroke="#eee" stroke-width="1.3"/></svg>
<div class="t" style="left:547.5px;top:558px;font-size:12.2px;line-height:15px;color:#e8e8e8">Severity <span style="font-size:9.5px;vertical-align:1px;margin-left:2px">(2)</span></div>
<svg class="abs" style="left:609.5px;top:560px" width="9" height="11" viewBox="0 0 9 11"><path d="M4.5 10 V2 M1.2 5 L4.5 1.6 L7.8 5" fill="none" stroke="#eee" stroke-width="1.3"/></svg>
<div class="t c" style="left:722px;top:559px;font-size:12.2px;line-height:14.2px;color:#e8e8e8;">Node</div>
<div class="abs" style="left:399px;top:580.5px;width:138px;height:15px;background:#2a2a2a;border:1.5px solid #6a6a6a;border-top-color:#555"></div>
<div class="abs" style="left:630px;top:580.5px;width:184px;height:15px;background:#2a2a2a;border:1.5px solid #6a6a6a;border-top-color:#555"></div>
<div class="t c" style="left:586.5px;top:582.5px;font-size:12.3px;line-height:15px;color:#fff">Select <span class="caret"></span></div>
<div class="abs" style="left:380.8px;top:601.2px;width:11.2px;height:10.8px;background:#080808;border:1.3px solid #c8c8c8;border-radius:2px"></div>
<div class="t c" style="left:468.5px;top:600.5px;font-size:11.4px;line-height:13.4px;color:#e6e6e6;-webkit-text-stroke:.2px #e6e6e6">Jul 21, 2020 8:28 AM</div>
<div class="t c" style="left:583.5px;top:600.5px;font-size:11.4px;line-height:13.4px;color:#0a4a4a;-webkit-text-stroke:.2px">Warning</div>
<div class="t c" style="left:722px;top:600.5px;font-size:11.4px;line-height:13.4px;color:#4a90e2;-webkit-text-stroke:.2px #4a90e2">1:0/0.0</div>
<div class="abs" style="left:380.8px;top:623.2px;width:11.2px;height:10.8px;background:#080808;border:1.3px solid #c8c8c8;border-radius:2px"></div>
<div class="t c" style="left:468.5px;top:622.5px;font-size:11.4px;line-height:13.4px;color:#e6e6e6;-webkit-text-stroke:.2px #e6e6e6">Jul 21, 2020 8:19 AM</div>
<div class="t c" style="left:583.5px;top:622.5px;font-size:11.4px;line-height:13.4px;color:#4a4a10;-webkit-text-stroke:.2px">Minor</div>
<div class="t c" style="left:722px;top:622.5px;font-size:11.4px;line-height:13.4px;color:#4a90e2;-webkit-text-stroke:.2px #4a90e2">15/1</div>
<div class="abs" style="left:380.8px;top:645.2px;width:11.2px;height:10.8px;background:#080808;border:1.3px solid #c8c8c8;border-radius:2px"></div>
<div class="t c" style="left:468.5px;top:644.5px;font-size:11.4px;line-height:13.4px;color:#e6e6e6;-webkit-text-stroke:.2px #e6e6e6">Jul 21, 2020 8:19 AM</div>
<div class="t c" style="left:583.5px;top:644.5px;font-size:11.4px;line-height:13.4px;color:#4a4a10;-webkit-text-stroke:.2px">Minor</div>
<div class="t c" style="left:722px;top:644.5px;font-size:11.4px;line-height:13.4px;color:#4a90e2;-webkit-text-stroke:.2px #4a90e2">15/2</div>
<div class="abs" style="left:380.8px;top:667.2px;width:11.2px;height:10.8px;background:#080808;border:1.3px solid #c8c8c8;border-radius:2px"></div>
<div class="t c" style="left:468.5px;top:666.5px;font-size:11.4px;line-height:13.4px;color:#e6e6e6;-webkit-text-stroke:.2px #e6e6e6">Jul 21, 2020 8:19 AM</div>
<div class="t c" style="left:583.5px;top:666.5px;font-size:11.4px;line-height:13.4px;color:#0a4a4a;-webkit-text-stroke:.2px">Warning</div>
<div class="t c" style="left:722px;top:666.5px;font-size:11.4px;line-height:13.4px;color:#4a90e2;-webkit-text-stroke:.2px #4a90e2">15/1</div>
<div class="abs" style="left:380.8px;top:689.2px;width:11.2px;height:10.8px;background:#080808;border:1.3px solid #c8c8c8;border-radius:2px"></div>
<div class="t c" style="left:468.5px;top:688.5px;font-size:11.4px;line-height:13.4px;color:#e6e6e6;-webkit-text-stroke:.2px #e6e6e6">Jul 21, 2020 8:19 AM</div>
<div class="t c" style="left:583.5px;top:688.5px;font-size:11.4px;line-height:13.4px;color:#0a4a4a;-webkit-text-stroke:.2px">Warning</div>
<div class="t c" style="left:722px;top:688.5px;font-size:11.4px;line-height:13.4px;color:#4a90e2;-webkit-text-stroke:.2px #4a90e2">15/2</div>
<div class="abs" style="left:380.8px;top:711.2px;width:11.2px;height:10.8px;background:#080808;border:1.3px solid #c8c8c8;border-radius:2px"></div>
<div class="t c" style="left:468.5px;top:710.5px;font-size:11.4px;line-height:13.4px;color:#e6e6e6;-webkit-text-stroke:.2px #e6e6e6">Jul 21, 2020 8:15 AM</div>
<div class="t c" style="left:583.5px;top:710.5px;font-size:11.4px;line-height:13.4px;color:#6a1010;-webkit-text-stroke:.2px">Critical</div>
<div class="t c" style="left:722px;top:710.5px;font-size:11.4px;line-height:13.4px;color:#4a90e2;-webkit-text-stroke:.2px #4a90e2">IDFR</div>
<div class="abs" style="left:380.8px;top:733.2px;width:11.2px;height:10.8px;background:#080808;border:1.3px solid #c8c8c8;border-radius:2px"></div>
<div class="t c" style="left:468.5px;top:732.5px;font-size:11.4px;line-height:13.4px;color:#e6e6e6;-webkit-text-stroke:.2px #e6e6e6">Jul 21, 2020 8:15 AM</div>
<div class="t c" style="left:583.5px;top:732.5px;font-size:11.4px;line-height:13.4px;color:#6a1010;-webkit-text-stroke:.2px">Critical</div>
<div class="t c" style="left:722px;top:732.5px;font-size:11.4px;line-height:13.4px;color:#4a90e2;-webkit-text-stroke:.2px #4a90e2">CBRE</div>
<div class="abs" style="left:380.8px;top:755.2px;width:11.2px;height:10.8px;background:#080808;border:1.3px solid #c8c8c8;border-radius:2px"></div>
<div class="t c" style="left:468.5px;top:754.5px;font-size:11.4px;line-height:13.4px;color:#e6e6e6;-webkit-text-stroke:.2px #e6e6e6">Jul 21, 2020 8:15 AM</div>
<div class="t c" style="left:583.5px;top:754.5px;font-size:11.4px;line-height:13.4px;color:#6a1010;-webkit-text-stroke:.2px">Critical</div>
<div class="t c" style="left:722px;top:754.5px;font-size:11.4px;line-height:13.4px;color:#4a90e2;-webkit-text-stroke:.2px #4a90e2">HETR</div>
<div class="abs" style="left:380.8px;top:777.2px;width:11.2px;height:10.8px;background:#080808;border:1.3px solid #c8c8c8;border-radius:2px"></div>
<div class="t c" style="left:468.5px;top:776.5px;font-size:11.4px;line-height:13.4px;color:#e6e6e6;-webkit-text-stroke:.2px #e6e6e6">Jul 21, 2020 8:15 AM</div>
<div class="t c" style="left:583.5px;top:776.5px;font-size:11.4px;line-height:13.4px;color:#4e3200;-webkit-text-stroke:.2px">Major</div>
<div class="t c" style="left:722px;top:776.5px;font-size:11.4px;line-height:13.4px;color:#4a90e2;-webkit-text-stroke:.2px #4a90e2">E6K-D31-OFDMA-HE</div>
<div class="abs" style="left:380.8px;top:799.2px;width:11.2px;height:10.8px;background:#080808;border:1.3px solid #c8c8c8;border-radius:2px"></div>
<div class="t c" style="left:468.5px;top:798.5px;font-size:11.4px;line-height:13.4px;color:#e6e6e6;-webkit-text-stroke:.2px #e6e6e6">Jul 21, 2020 8:15 AM</div>
<div class="t c" style="left:583.5px;top:798.5px;font-size:11.4px;line-height:13.4px;color:#0a4a4a;-webkit-text-stroke:.2px">Warning</div>
<div class="t c" style="left:722px;top:798.5px;font-size:11.4px;line-height:13.4px;color:#4a90e2;-webkit-text-stroke:.2px #4a90e2">15/2</div>
<div class="t c" style="left:911px;top:798.5px;font-size:11.4px;line-height:13.4px;color:#e6e6e6;-webkit-text-stroke:.2px #e6e6e6">Violation-Interval Threshold</div>
<div class="t c" style="left:1100px;top:798.5px;font-size:11.4px;line-height:13.4px;color:#e6e6e6;-webkit-text-stroke:.2px #e6e6e6">No</div>
<div class="t c" style="left:1241px;top:798.5px;font-size:11.4px;line-height:13.4px;color:#e6e6e6;-webkit-text-stroke:.2px #e6e6e6">8190</div>
<div class="abs" style="left:369px;top:814px;width:945px;height:10px;background:#222"></div>
<div class="abs" style="left:773.3px;top:474.8px;width:527.5px;height:329.2px;background:#f0f0f0"></div>
<div class="abs" style="left:773.3px;top:474.8px;width:527.5px;height:16.2px;background:#fff;border-bottom:1.5px solid #dcdcdc"></div>
<svg class="abs" style="left:0;top:0" width="1320" height="836" viewBox="0 0 1320 836"><rect x="777" y="480" width="4.6" height="0.9" fill="#666"/><rect x="777" y="481.8" width="4.6" height="0.9" fill="#666"/><rect x="777" y="483.6" width="4.6" height="0.9" fill="#666"/><g transform="translate(785.3 477.6) scale(0.3235 0.39)"><path fill="#4a1a78" d="M3.41 4.77 L9.20 4.77 L15.68 16.16 L12.68 20.79Z M15.68 4.77 L20.45 4.77 L20.45 9.54 L15.68 9.54Z M26.93 4.77 L31.70 4.77 L31.70 20.79 L26.93 20.79Z M55.90 20.79 L50.10 20.79 L43.63 9.41 L46.63 4.77Z M38.85 16.02 L43.63 16.02 L43.63 20.79 L38.85 20.79Z M56.92 4.77 L62.71 4.77 L69.19 16.16 L66.19 20.79Z M69.19 4.77 L73.96 4.77 L73.96 9.54 L69.19 9.54Z M80.78 4.77 L85.55 4.77 L85.55 20.79 L80.78 20.79Z"/></g><text x="815" y="485" font-family="Liberation Sans, sans-serif" font-size="5.3" font-weight="bold" fill="#333" textLength="28" lengthAdjust="spacingAndGlyphs">XPERTrak™</text><text x="846.5" y="485.2" font-family="Liberation Sans, sans-serif" font-size="5.6" fill="#9a9a9a" textLength="64.5" lengthAdjust="spacingAndGlyphs">Heatmap | E6K-D31-OFDMA-HE</text><rect x="844.6" y="493" width="0.8" height="293" fill="#eaeaea"/><rect x="900.2" y="493" width="0.8" height="293" fill="#eaeaea"/><rect x="955.8" y="493" width="0.8" height="293" fill="#eaeaea"/><rect x="1011.4" y="493" width="0.8" height="293" fill="#eaeaea"/><rect x="1067.0" y="493" width="0.8" height="293" fill="#eaeaea"/><rect x="1122.6" y="493" width="0.8" height="293" fill="#eaeaea"/><rect x="1178.2" y="493" width="0.8" height="293" fill="#eaeaea"/><rect x="1233.8" y="493" width="0.8" height="293" fill="#eaeaea"/><rect x="790.6" y="519.4" width="472" height="0.8" fill="#ebebeb"/><rect x="790.6" y="557.5" width="472" height="0.8" fill="#ebebeb"/><rect x="790.6" y="595.6" width="472" height="0.8" fill="#ebebeb"/><rect x="790.6" y="633.7" width="472" height="0.8" fill="#ebebeb"/><rect x="790.6" y="671.8" width="472" height="0.8" fill="#ebebeb"/><rect x="790.6" y="709.9" width="472" height="0.8" fill="#ebebeb"/><rect x="790.6" y="748.0" width="472" height="0.8" fill="#ebebeb"/><rect x="790.6" y="786.1" width="472" height="0.8" fill="#ebebeb"/><rect x="790.1" y="496" width="0.9" height="290.5" fill="#8a8a8a"/><defs><linearGradient id="h0" gradientUnits="userSpaceOnUse" x1="0" y1="555.0" x2="0" y2="785.7"><stop offset="0.000" stop-color="#000000"/><stop offset="0.642" stop-color="#000000"/><stop offset="0.650" stop-color="#0d0d0d"/><stop offset="0.659" stop-color="#0d0d0d"/><stop offset="0.668" stop-color="#737373"/><stop offset="0.720" stop-color="#c6c6c6"/><stop offset="0.746" stop-color="#e8e8e8"/><stop offset="0.772" stop-color="#fcfcfc"/><stop offset="0.789" stop-color="#ffffff"/><stop offset="0.815" stop-color="#f8f8f8"/><stop offset="0.850" stop-color="#dcdcdc"/><stop offset="0.936" stop-color="#6f6f6f"/><stop offset="0.962" stop-color="#6b6b6b"/><stop offset="0.980" stop-color="#404040"/><stop offset="0.997" stop-color="#313131"/></linearGradient><linearGradient id="h1" gradientUnits="userSpaceOnUse" x1="0" y1="555.0" x2="0" y2="785.7"><stop offset="0.000" stop-color="#000000"/><stop offset="0.642" stop-color="#000000"/><stop offset="0.650" stop-color="#0d0d0d"/><stop offset="0.659" stop-color="#0d0d0d"/><stop offset="0.668" stop-color="#747474"/><stop offset="0.720" stop-color="#c6c6c6"/><stop offset="0.746" stop-color="#e8e8e8"/><stop offset="0.772" stop-color="#fcfcfc"/><stop offset="0.789" stop-color="#ffffff"/><stop offset="0.815" stop-color="#f7f7f7"/><stop offset="0.850" stop-color="#dcdcdc"/><stop offset="0.936" stop-color="#6e6e6e"/><stop offset="0.962" stop-color="#6b6b6b"/><stop offset="0.980" stop-color="#3f3f3f"/><stop offset="0.997" stop-color="#313131"/></linearGradient><linearGradient id="h2" gradientUnits="userSpaceOnUse" x1="0" y1="555.0" x2="0" y2="785.7"><stop offset="0.000" stop-color="#000000"/><stop offset="0.642" stop-color="#000000"/><stop offset="0.650" stop-color="#0d0d0d"/><stop offset="0.659" stop-color="#0d0d0d"/><stop offset="0.668" stop-color="#747474"/><stop offset="0.737" stop-color="#dfdfdf"/><stop offset="0.763" stop-color="#f8f8f8"/><stop offset="0.780" stop-color="#ffffff"/><stop offset="0.806" stop-color="#fbfbfb"/><stop offset="0.841" stop-color="#e4e4e4"/><stop offset="0.936" stop-color="#6e6e6e"/><stop offset="0.962" stop-color="#6b6b6b"/><stop offset="0.980" stop-color="#3f3f3f"/><stop offset="0.997" stop-color="#303030"/></linearGradient><linearGradient id="h3" gradientUnits="userSpaceOnUse" x1="0" y1="555.0" x2="0" y2="785.7"><stop offset="0.000" stop-color="#000000"/><stop offset="0.642" stop-color="#000000"/><stop offset="0.650" stop-color="#0d0d0d"/><stop offset="0.659" stop-color="#0d0d0d"/><stop offset="0.668" stop-color="#757575"/><stop offset="0.737" stop-color="#e0e0e0"/><stop offset="0.763" stop-color="#f8f8f8"/><stop offset="0.780" stop-color="#ffffff"/><stop offset="0.806" stop-color="#fbfbfb"/><stop offset="0.841" stop-color="#e3e3e3"/><stop offset="0.936" stop-color="#6d6d6d"/><stop offset="0.962" stop-color="#6b6b6b"/><stop offset="0.980" stop-color="#3e3e3e"/><stop offset="0.997" stop-color="#303030"/></linearGradient><linearGradient id="h4" gradientUnits="userSpaceOnUse" x1="0" y1="555.0" x2="0" y2="785.7"><stop offset="0.000" stop-color="#000000"/><stop offset="0.642" stop-color="#000000"/><stop offset="0.650" stop-color="#0d0d0d"/><stop offset="0.668" stop-color="#0d0d0d"/><stop offset="0.676" stop-color="#848484"/><stop offset="0.737" stop-color="#e0e0e0"/><stop offset="0.763" stop-color="#f8f8f8"/><stop offset="0.780" stop-color="#ffffff"/><stop offset="0.806" stop-color="#fbfbfb"/><stop offset="0.841" stop-color="#e3e3e3"/><stop offset="0.936" stop-color="#6c6c6c"/><stop offset="0.962" stop-color="#6b6b6b"/><stop offset="0.980" stop-color="#3e3e3e"/><stop offset="0.997" stop-color="#2f2f2f"/></linearGradient><linearGradient id="h5" gradientUnits="userSpaceOnUse" x1="0" y1="555.0" x2="0" y2="785.7"><stop offset="0.000" stop-color="#000000"/><stop offset="0.633" stop-color="#000000"/><stop offset="0.642" stop-color="#0d0d0d"/><stop offset="0.650" stop-color="#0d0d0d"/><stop offset="0.659" stop-color="#6a6a6a"/><stop offset="0.737" stop-color="#e1e1e1"/><stop offset="0.763" stop-color="#f9f9f9"/><stop offset="0.780" stop-color="#ffffff"/><stop offset="0.806" stop-color="#fafafa"/><stop offset="0.841" stop-color="#e2e2e2"/><stop offset="0.936" stop-color="#6c6c6c"/><stop offset="0.962" stop-color="#6b6b6b"/><stop offset="0.980" stop-color="#3d3d3d"/><stop offset="0.997" stop-color="#2f2f2f"/></linearGradient><linearGradient id="h6" gradientUnits="userSpaceOnUse" x1="0" y1="555.0" x2="0" y2="785.7"><stop offset="0.000" stop-color="#000000"/><stop offset="0.572" stop-color="#000000"/><stop offset="0.581" stop-color="#0d0d0d"/><stop offset="0.642" stop-color="#0d0d0d"/><stop offset="0.650" stop-color="#5e5e5e"/><stop offset="0.737" stop-color="#e2e2e2"/><stop offset="0.763" stop-color="#f9f9f9"/><stop offset="0.780" stop-color="#ffffff"/><stop offset="0.806" stop-color="#fafafa"/><stop offset="0.841" stop-color="#e2e2e2"/><stop offset="0.936" stop-color="#6b6b6b"/><stop offset="0.962" stop-color="#6b6b6b"/><stop offset="0.980" stop-color="#3d3d3d"/><stop offset="0.997" stop-color="#2f2f2f"/></linearGradient><linearGradient id="h7" gradientUnits="userSpaceOnUse" x1="0" y1="555.0" x2="0" y2="785.7"><stop offset="0.000" stop-color="#000000"/><stop offset="0.616" stop-color="#000000"/><stop offset="0.624" stop-color="#0d0d0d"/><stop offset="0.633" stop-color="#484848"/><stop offset="0.737" stop-color="#e2e2e2"/><stop offset="0.763" stop-color="#f9f9f9"/><stop offset="0.780" stop-color="#ffffff"/><stop offset="0.806" stop-color="#fafafa"/><stop offset="0.841" stop-color="#e1e1e1"/><stop offset="0.936" stop-color="#6b6b6b"/><stop offset="0.962" stop-color="#6b6b6b"/><stop offset="0.980" stop-color="#3c3c3c"/><stop offset="0.997" stop-color="#2e2e2e"/></linearGradient><linearGradient id="h8" gradientUnits="userSpaceOnUse" x1="0" y1="555.0" x2="0" y2="785.7"><stop offset="0.000" stop-color="#000000"/><stop offset="0.590" stop-color="#000000"/><stop offset="0.598" stop-color="#0d0d0d"/><stop offset="0.607" stop-color="#0d0d0d"/><stop offset="0.616" stop-color="#424242"/><stop offset="0.633" stop-color="#494949"/><stop offset="0.642" stop-color="#545454"/><stop offset="0.737" stop-color="#e3e3e3"/><stop offset="0.763" stop-color="#f9f9f9"/><stop offset="0.780" stop-color="#ffffff"/><stop offset="0.806" stop-color="#fafafa"/><stop offset="0.841" stop-color="#e1e1e1"/><stop offset="0.936" stop-color="#6b6b6b"/><stop offset="0.962" stop-color="#6b6b6b"/><stop offset="0.980" stop-color="#3c3c3c"/><stop offset="0.997" stop-color="#2e2e2e"/></linearGradient><linearGradient id="h9" gradientUnits="userSpaceOnUse" x1="0" y1="555.0" x2="0" y2="785.7"><stop offset="0.000" stop-color="#000000"/><stop offset="0.572" stop-color="#000000"/><stop offset="0.581" stop-color="#0d0d0d"/><stop offset="0.590" stop-color="#0d0d0d"/><stop offset="0.598" stop-color="#424242"/><stop offset="0.642" stop-color="#545454"/><stop offset="0.737" stop-color="#e3e3e3"/><stop offset="0.763" stop-color="#fafafa"/><stop offset="0.780" stop-color="#ffffff"/><stop offset="0.806" stop-color="#fafafa"/><stop offset="0.841" stop-color="#e0e0e0"/><stop offset="0.936" stop-color="#6b6b6b"/><stop offset="0.962" stop-color="#6b6b6b"/><stop offset="0.980" stop-color="#3c3c3c"/><stop offset="0.997" stop-color="#2d2d2d"/></linearGradient><linearGradient id="h10" gradientUnits="userSpaceOnUse" x1="0" y1="555.0" x2="0" y2="785.7"><stop offset="0.000" stop-color="#000000"/><stop offset="0.555" stop-color="#000000"/><stop offset="0.564" stop-color="#0d0d0d"/><stop offset="0.572" stop-color="#0d0d0d"/><stop offset="0.581" stop-color="#424242"/><stop offset="0.642" stop-color="#555555"/><stop offset="0.728" stop-color="#d9d9d9"/><stop offset="0.754" stop-color="#f4f4f4"/><stop offset="0.780" stop-color="#ffffff"/><stop offset="0.806" stop-color="#f9f9f9"/><stop offset="0.841" stop-color="#dfdfdf"/><stop offset="0.936" stop-color="#6b6b6b"/><stop offset="0.962" stop-color="#6b6b6b"/><stop offset="0.980" stop-color="#3c3c3c"/><stop offset="0.997" stop-color="#2d2d2d"/></linearGradient><linearGradient id="h11" gradientUnits="userSpaceOnUse" x1="0" y1="555.0" x2="0" y2="785.7"><stop offset="0.000" stop-color="#000000"/><stop offset="0.520" stop-color="#000000"/><stop offset="0.529" stop-color="#0a0a0a"/><stop offset="0.546" stop-color="#0d0d0d"/><stop offset="0.555" stop-color="#424242"/><stop offset="0.668" stop-color="#626262"/><stop offset="0.720" stop-color="#8c8c8c"/><stop offset="0.763" stop-color="#9c9c9c"/><stop offset="0.815" stop-color="#909090"/><stop offset="0.876" stop-color="#6b6b6b"/><stop offset="0.962" stop-color="#676767"/><stop offset="0.988" stop-color="#202020"/><stop offset="0.997" stop-color="#1b1b1b"/></linearGradient><linearGradient id="h12" gradientUnits="userSpaceOnUse" x1="0" y1="555.0" x2="0" y2="785.7"><stop offset="0.000" stop-color="#000000"/><stop offset="0.303" stop-color="#000000"/><stop offset="0.312" stop-color="#747474"/><stop offset="0.407" stop-color="#434343"/><stop offset="0.546" stop-color="#2a2a2a"/><stop offset="0.555" stop-color="#424242"/><stop offset="0.754" stop-color="#7e7e7e"/><stop offset="0.763" stop-color="#6b6b6b"/><stop offset="0.954" stop-color="#6b6b6b"/><stop offset="0.962" stop-color="#646464"/><stop offset="0.988" stop-color="#1f1f1f"/><stop offset="0.997" stop-color="#121212"/></linearGradient><linearGradient id="h13" gradientUnits="userSpaceOnUse" x1="0" y1="555.0" x2="0" y2="785.7"><stop offset="0.000" stop-color="#000000"/><stop offset="0.078" stop-color="#000000"/><stop offset="0.087" stop-color="#494949"/><stop offset="0.130" stop-color="#565656"/><stop offset="0.208" stop-color="#868686"/><stop offset="0.243" stop-color="#919191"/><stop offset="0.277" stop-color="#8a8a8a"/><stop offset="0.347" stop-color="#5e5e5e"/><stop offset="0.399" stop-color="#464646"/><stop offset="0.546" stop-color="#2a2a2a"/><stop offset="0.555" stop-color="#424242"/><stop offset="0.754" stop-color="#7e7e7e"/><stop offset="0.763" stop-color="#6b6b6b"/><stop offset="0.954" stop-color="#6b6b6b"/><stop offset="0.962" stop-color="#646464"/><stop offset="0.988" stop-color="#1f1f1f"/><stop offset="0.997" stop-color="#121212"/></linearGradient><linearGradient id="h14" gradientUnits="userSpaceOnUse" x1="0" y1="555.0" x2="0" y2="785.7"><stop offset="0.000" stop-color="#000000"/><stop offset="0.069" stop-color="#000000"/><stop offset="0.078" stop-color="#484848"/><stop offset="0.130" stop-color="#565656"/><stop offset="0.208" stop-color="#868686"/><stop offset="0.243" stop-color="#919191"/><stop offset="0.277" stop-color="#8a8a8a"/><stop offset="0.347" stop-color="#5e5e5e"/><stop offset="0.399" stop-color="#464646"/><stop offset="0.546" stop-color="#2a2a2a"/><stop offset="0.555" stop-color="#424242"/><stop offset="0.754" stop-color="#7e7e7e"/><stop offset="0.763" stop-color="#6b6b6b"/><stop offset="0.954" stop-color="#6b6b6b"/><stop offset="0.962" stop-color="#646464"/><stop offset="0.988" stop-color="#1f1f1f"/><stop offset="0.997" stop-color="#121212"/></linearGradient><linearGradient id="h15" gradientUnits="userSpaceOnUse" x1="0" y1="555.0" x2="0" y2="785.7"><stop offset="0.000" stop-color="#000000"/><stop offset="0.069" stop-color="#000000"/><stop offset="0.078" stop-color="#484848"/><stop offset="0.130" stop-color="#565656"/><stop offset="0.208" stop-color="#868686"/><stop offset="0.243" stop-color="#919191"/><stop offset="0.277" stop-color="#8a8a8a"/><stop offset="0.347" stop-color="#5e5e5e"/><stop offset="0.399" stop-color="#464646"/><stop offset="0.546" stop-color="#2a2a2a"/><stop offset="0.555" stop-color="#424242"/><stop offset="0.754" stop-color="#7e7e7e"/><stop offset="0.763" stop-color="#6b6b6b"/><stop offset="0.954" stop-color="#6b6b6b"/><stop offset="0.962" stop-color="#646464"/><stop offset="0.988" stop-color="#1f1f1f"/><stop offset="0.997" stop-color="#121212"/></linearGradient><linearGradient id="h16" gradientUnits="userSpaceOnUse" x1="0" y1="555.0" x2="0" y2="785.7"><stop offset="0.000" stop-color="#000000"/><stop offset="0.052" stop-color="#000000"/><stop offset="0.061" stop-color="#474747"/><stop offset="0.130" stop-color="#565656"/><stop offset="0.208" stop-color="#868686"/><stop offset="0.243" stop-color="#919191"/><stop offset="0.277" stop-color="#8a8a8a"/><stop offset="0.347" stop-color="#5e5e5e"/><stop offset="0.399" stop-color="#464646"/><stop offset="0.546" stop-color="#2a2a2a"/><stop offset="0.555" stop-color="#424242"/><stop offset="0.754" stop-color="#7e7e7e"/><stop offset="0.763" stop-color="#6b6b6b"/><stop offset="0.954" stop-color="#6b6b6b"/><stop offset="0.962" stop-color="#646464"/><stop offset="0.988" stop-color="#1f1f1f"/><stop offset="0.997" stop-color="#121212"/></linearGradient><linearGradient id="h17" gradientUnits="userSpaceOnUse" x1="0" y1="555.0" x2="0" y2="785.7"><stop offset="0.000" stop-color="#000000"/><stop offset="0.026" stop-color="#000000"/><stop offset="0.035" stop-color="#333333"/><stop offset="0.043" stop-color="#464646"/><stop offset="0.121" stop-color="#535353"/><stop offset="0.208" stop-color="#868686"/><stop offset="0.243" stop-color="#919191"/><stop offset="0.277" stop-color="#8a8a8a"/><stop offset="0.347" stop-color="#5e5e5e"/><stop offset="0.399" stop-color="#464646"/><stop offset="0.546" stop-color="#2a2a2a"/><stop offset="0.555" stop-color="#424242"/><stop offset="0.754" stop-color="#7e7e7e"/><stop offset="0.763" stop-color="#6b6b6b"/><stop offset="0.954" stop-color="#6b6b6b"/><stop offset="0.962" stop-color="#646464"/><stop offset="0.988" stop-color="#1f1f1f"/><stop offset="0.997" stop-color="#121212"/></linearGradient><linearGradient id="h18" gradientUnits="userSpaceOnUse" x1="0" y1="555.0" x2="0" y2="785.7"><stop offset="0.000" stop-color="#000000"/><stop offset="0.061" stop-color="#000000"/><stop offset="0.069" stop-color="#474747"/><stop offset="0.130" stop-color="#565656"/><stop offset="0.208" stop-color="#868686"/><stop offset="0.243" stop-color="#919191"/><stop offset="0.277" stop-color="#8a8a8a"/><stop offset="0.347" stop-color="#5e5e5e"/><stop offset="0.399" stop-color="#464646"/><stop offset="0.546" stop-color="#2a2a2a"/><stop offset="0.555" stop-color="#424242"/><stop offset="0.754" stop-color="#7e7e7e"/><stop offset="0.763" stop-color="#6b6b6b"/><stop offset="0.954" stop-color="#6b6b6b"/><stop offset="0.962" stop-color="#646464"/><stop offset="0.988" stop-color="#1f1f1f"/><stop offset="0.997" stop-color="#121212"/></linearGradient><linearGradient id="h19" gradientUnits="userSpaceOnUse" x1="0" y1="555.0" x2="0" y2="785.7"><stop offset="0.000" stop-color="#000000"/><stop offset="0.061" stop-color="#000000"/><stop offset="0.069" stop-color="#474747"/><stop offset="0.130" stop-color="#565656"/><stop offset="0.208" stop-color="#868686"/><stop offset="0.243" stop-color="#919191"/><stop offset="0.277" stop-color="#8a8a8a"/><stop offset="0.347" stop-color="#5e5e5e"/><stop offset="0.399" stop-color="#464646"/><stop offset="0.546" stop-color="#2a2a2a"/><stop offset="0.555" stop-color="#424242"/><stop offset="0.754" stop-color="#7e7e7e"/><stop offset="0.763" stop-color="#6b6b6b"/><stop offset="0.954" stop-color="#6b6b6b"/><stop offset="0.962" stop-color="#646464"/><stop offset="0.988" stop-color="#1f1f1f"/><stop offset="0.997" stop-color="#121212"/></linearGradient><linearGradient id="h20" gradientUnits="userSpaceOnUse" x1="0" y1="555.0" x2="0" y2="785.7"><stop offset="0.000" stop-color="#000000"/><stop offset="0.069" stop-color="#000000"/><stop offset="0.078" stop-color="#484848"/><stop offset="0.130" stop-color="#565656"/><stop offset="0.208" stop-color="#868686"/><stop offset="0.243" stop-color="#919191"/><stop offset="0.277" stop-color="#8a8a8a"/><stop offset="0.347" stop-color="#5e5e5e"/><stop offset="0.399" stop-color="#464646"/><stop offset="0.546" stop-color="#2a2a2a"/><stop offset="0.555" stop-color="#424242"/><stop offset="0.754" stop-color="#7e7e7e"/><stop offset="0.763" stop-color="#6b6b6b"/><stop offset="0.954" stop-color="#6b6b6b"/><stop offset="0.962" stop-color="#646464"/><stop offset="0.988" stop-color="#1f1f1f"/><stop offset="0.997" stop-color="#121212"/></linearGradient><linearGradient id="h21" gradientUnits="userSpaceOnUse" x1="0" y1="555.0" x2="0" y2="785.7"><stop offset="0.000" stop-color="#000000"/><stop offset="0.078" stop-color="#000000"/><stop offset="0.087" stop-color="#494949"/><stop offset="0.130" stop-color="#565656"/><stop offset="0.208" stop-color="#868686"/><stop offset="0.243" stop-color="#919191"/><stop offset="0.277" stop-color="#8a8a8a"/><stop offset="0.347" stop-color="#5e5e5e"/><stop offset="0.399" stop-color="#464646"/><stop offset="0.546" stop-color="#2a2a2a"/><stop offset="0.555" stop-color="#424242"/><stop offset="0.754" stop-color="#7e7e7e"/><stop offset="0.763" stop-color="#6b6b6b"/><stop offset="0.954" stop-color="#6b6b6b"/><stop offset="0.962" stop-color="#646464"/><stop offset="0.988" stop-color="#1f1f1f"/><stop offset="0.997" stop-color="#121212"/></linearGradient><linearGradient id="h22" gradientUnits="userSpaceOnUse" x1="0" y1="555.0" x2="0" y2="785.7"><stop offset="0.000" stop-color="#000000"/><stop offset="0.087" stop-color="#000000"/><stop offset="0.095" stop-color="#4b4b4b"/><stop offset="0.139" stop-color="#5a5a5a"/><stop offset="0.208" stop-color="#868686"/><stop offset="0.243" stop-color="#919191"/><stop offset="0.277" stop-color="#8a8a8a"/><stop offset="0.347" stop-color="#5e5e5e"/><stop offset="0.399" stop-color="#464646"/><stop offset="0.546" stop-color="#2a2a2a"/><stop offset="0.555" stop-color="#424242"/><stop offset="0.754" stop-color="#7e7e7e"/><stop offset="0.763" stop-color="#6b6b6b"/><stop offset="0.954" stop-color="#6b6b6b"/><stop offset="0.962" stop-color="#646464"/><stop offset="0.988" stop-color="#1f1f1f"/><stop offset="0.997" stop-color="#121212"/></linearGradient><linearGradient id="h23" gradientUnits="userSpaceOnUse" x1="0" y1="555.0" x2="0" y2="785.7"><stop offset="0.000" stop-color="#000000"/><stop offset="0.303" stop-color="#000000"/><stop offset="0.312" stop-color="#747474"/><stop offset="0.407" stop-color="#434343"/><stop offset="0.546" stop-color="#2a2a2a"/><stop offset="0.555" stop-color="#424242"/><stop offset="0.754" stop-color="#7e7e7e"/><stop offset="0.763" stop-color="#6b6b6b"/><stop offset="0.954" stop-color="#6b6b6b"/><stop offset="0.962" stop-color="#646464"/><stop offset="0.988" stop-color="#1f1f1f"/><stop offset="0.997" stop-color="#121212"/></linearGradient><linearGradient id="h24" gradientUnits="userSpaceOnUse" x1="0" y1="555.0" x2="0" y2="785.7"><stop offset="0.000" stop-color="#000000"/><stop offset="0.538" stop-color="#000000"/><stop offset="0.546" stop-color="#0d0d0d"/><stop offset="0.555" stop-color="#0d0d0d"/><stop offset="0.564" stop-color="#424242"/><stop offset="0.650" stop-color="#5c5c5c"/><stop offset="0.728" stop-color="#a9a9a9"/><stop offset="0.772" stop-color="#b8b8b8"/><stop offset="0.824" stop-color="#a5a5a5"/><stop offset="0.893" stop-color="#6b6b6b"/><stop offset="0.962" stop-color="#696969"/><stop offset="0.988" stop-color="#212121"/><stop offset="0.997" stop-color="#1d1d1d"/></linearGradient><linearGradient id="h25" gradientUnits="userSpaceOnUse" x1="0" y1="555.0" x2="0" y2="785.7"><stop offset="0.000" stop-color="#000000"/><stop offset="0.546" stop-color="#000000"/><stop offset="0.555" stop-color="#0c0c0c"/><stop offset="0.564" stop-color="#0d0d0d"/><stop offset="0.572" stop-color="#424242"/><stop offset="0.650" stop-color="#5d5d5d"/><stop offset="0.737" stop-color="#e2e2e2"/><stop offset="0.763" stop-color="#f7f7f7"/><stop offset="0.780" stop-color="#fafafa"/><stop offset="0.806" stop-color="#f2f2f2"/><stop offset="0.832" stop-color="#dddddd"/><stop offset="0.919" stop-color="#6f6f6f"/><stop offset="0.962" stop-color="#6b6b6b"/><stop offset="0.980" stop-color="#3b3b3b"/><stop offset="0.988" stop-color="#292929"/><stop offset="0.997" stop-color="#242424"/></linearGradient><linearGradient id="h26" gradientUnits="userSpaceOnUse" x1="0" y1="555.0" x2="0" y2="785.7"><stop offset="0.000" stop-color="#000000"/><stop offset="0.555" stop-color="#000000"/><stop offset="0.564" stop-color="#0d0d0d"/><stop offset="0.572" stop-color="#0d0d0d"/><stop offset="0.581" stop-color="#424242"/><stop offset="0.650" stop-color="#5c5c5c"/><stop offset="0.737" stop-color="#e1e1e1"/><stop offset="0.763" stop-color="#f6f6f6"/><stop offset="0.780" stop-color="#fafafa"/><stop offset="0.806" stop-color="#f2f2f2"/><stop offset="0.832" stop-color="#dedede"/><stop offset="0.919" stop-color="#707070"/><stop offset="0.962" stop-color="#6b6b6b"/><stop offset="0.980" stop-color="#3b3b3b"/><stop offset="0.988" stop-color="#2a2a2a"/><stop offset="0.997" stop-color="#242424"/></linearGradient><linearGradient id="h27" gradientUnits="userSpaceOnUse" x1="0" y1="555.0" x2="0" y2="785.7"><stop offset="0.000" stop-color="#000000"/><stop offset="0.555" stop-color="#000000"/><stop offset="0.564" stop-color="#0d0d0d"/><stop offset="0.572" stop-color="#0d0d0d"/><stop offset="0.581" stop-color="#424242"/><stop offset="0.642" stop-color="#545454"/><stop offset="0.737" stop-color="#e1e1e1"/><stop offset="0.763" stop-color="#f6f6f6"/><stop offset="0.780" stop-color="#f9f9f9"/><stop offset="0.806" stop-color="#f2f2f2"/><stop offset="0.832" stop-color="#dedede"/><stop offset="0.919" stop-color="#707070"/><stop offset="0.962" stop-color="#6b6b6b"/><stop offset="0.980" stop-color="#3b3b3b"/><stop offset="0.988" stop-color="#2a2a2a"/><stop offset="0.997" stop-color="#242424"/></linearGradient><linearGradient id="h28" gradientUnits="userSpaceOnUse" x1="0" y1="555.0" x2="0" y2="785.7"><stop offset="0.000" stop-color="#000000"/><stop offset="0.564" stop-color="#000000"/><stop offset="0.572" stop-color="#0d0d0d"/><stop offset="0.581" stop-color="#0d0d0d"/><stop offset="0.590" stop-color="#424242"/><stop offset="0.642" stop-color="#525252"/><stop offset="0.737" stop-color="#e0e0e0"/><stop offset="0.763" stop-color="#f5f5f5"/><stop offset="0.780" stop-color="#f9f9f9"/><stop offset="0.806" stop-color="#f2f2f2"/><stop offset="0.832" stop-color="#dedede"/><stop offset="0.919" stop-color="#707070"/><stop offset="0.962" stop-color="#6b6b6b"/><stop offset="0.980" stop-color="#3b3b3b"/><stop offset="0.988" stop-color="#2a2a2a"/><stop offset="0.997" stop-color="#242424"/></linearGradient><linearGradient id="h29" gradientUnits="userSpaceOnUse" x1="0" y1="555.0" x2="0" y2="785.7"><stop offset="0.000" stop-color="#000000"/><stop offset="0.564" stop-color="#000000"/><stop offset="0.572" stop-color="#0d0d0d"/><stop offset="0.581" stop-color="#0d0d0d"/><stop offset="0.590" stop-color="#424242"/><stop offset="0.642" stop-color="#525252"/><stop offset="0.737" stop-color="#e0e0e0"/><stop offset="0.763" stop-color="#f5f5f5"/><stop offset="0.780" stop-color="#f9f9f9"/><stop offset="0.806" stop-color="#f2f2f2"/><stop offset="0.832" stop-color="#dedede"/><stop offset="0.919" stop-color="#717171"/><stop offset="0.962" stop-color="#6b6b6b"/><stop offset="0.980" stop-color="#3b3b3b"/><stop offset="0.988" stop-color="#2a2a2a"/><stop offset="0.997" stop-color="#242424"/></linearGradient><linearGradient id="h30" gradientUnits="userSpaceOnUse" x1="0" y1="555.0" x2="0" y2="785.7"><stop offset="0.000" stop-color="#000000"/><stop offset="0.564" stop-color="#000000"/><stop offset="0.572" stop-color="#0d0d0d"/><stop offset="0.581" stop-color="#0d0d0d"/><stop offset="0.590" stop-color="#424242"/><stop offset="0.650" stop-color="#5a5a5a"/><stop offset="0.737" stop-color="#dfdfdf"/><stop offset="0.763" stop-color="#f5f5f5"/><stop offset="0.780" stop-color="#f9f9f9"/><stop offset="0.806" stop-color="#f2f2f2"/><stop offset="0.832" stop-color="#dedede"/><stop offset="0.919" stop-color="#717171"/><stop offset="0.928" stop-color="#6b6b6b"/><stop offset="0.962" stop-color="#6b6b6b"/><stop offset="0.980" stop-color="#3b3b3b"/><stop offset="0.988" stop-color="#2a2a2a"/><stop offset="0.997" stop-color="#242424"/></linearGradient><linearGradient id="h31" gradientUnits="userSpaceOnUse" x1="0" y1="555.0" x2="0" y2="785.7"><stop offset="0.000" stop-color="#000000"/><stop offset="0.564" stop-color="#000000"/><stop offset="0.572" stop-color="#0d0d0d"/><stop offset="0.581" stop-color="#0d0d0d"/><stop offset="0.590" stop-color="#424242"/><stop offset="0.650" stop-color="#5a5a5a"/><stop offset="0.737" stop-color="#dfdfdf"/><stop offset="0.763" stop-color="#f4f4f4"/><stop offset="0.780" stop-color="#f9f9f9"/><stop offset="0.806" stop-color="#f2f2f2"/><stop offset="0.832" stop-color="#dedede"/><stop offset="0.919" stop-color="#717171"/><stop offset="0.928" stop-color="#6b6b6b"/><stop offset="0.962" stop-color="#6b6b6b"/><stop offset="0.980" stop-color="#3b3b3b"/><stop offset="0.988" stop-color="#2b2b2b"/><stop offset="0.997" stop-color="#252525"/></linearGradient><linearGradient id="h32" gradientUnits="userSpaceOnUse" x1="0" y1="555.0" x2="0" y2="785.7"><stop offset="0.000" stop-color="#000000"/><stop offset="0.564" stop-color="#000000"/><stop offset="0.572" stop-color="#0d0d0d"/><stop offset="0.581" stop-color="#0d0d0d"/><stop offset="0.590" stop-color="#424242"/><stop offset="0.650" stop-color="#595959"/><stop offset="0.737" stop-color="#dedede"/><stop offset="0.763" stop-color="#f4f4f4"/><stop offset="0.780" stop-color="#f8f8f8"/><stop offset="0.806" stop-color="#f2f2f2"/><stop offset="0.832" stop-color="#dedede"/><stop offset="0.919" stop-color="#717171"/><stop offset="0.928" stop-color="#6b6b6b"/><stop offset="0.962" stop-color="#6b6b6b"/><stop offset="0.980" stop-color="#3b3b3b"/><stop offset="0.988" stop-color="#2b2b2b"/><stop offset="0.997" stop-color="#252525"/></linearGradient><linearGradient id="h33" gradientUnits="userSpaceOnUse" x1="0" y1="555.0" x2="0" y2="785.7"><stop offset="0.000" stop-color="#000000"/><stop offset="0.564" stop-color="#000000"/><stop offset="0.572" stop-color="#0d0d0d"/><stop offset="0.581" stop-color="#0d0d0d"/><stop offset="0.590" stop-color="#424242"/><stop offset="0.650" stop-color="#595959"/><stop offset="0.737" stop-color="#dddddd"/><stop offset="0.763" stop-color="#f4f4f4"/><stop offset="0.780" stop-color="#f8f8f8"/><stop offset="0.806" stop-color="#f2f2f2"/><stop offset="0.832" stop-color="#dedede"/><stop offset="0.919" stop-color="#727272"/><stop offset="0.928" stop-color="#6b6b6b"/><stop offset="0.962" stop-color="#6b6b6b"/><stop offset="0.980" stop-color="#3b3b3b"/><stop offset="0.988" stop-color="#2b2b2b"/><stop offset="0.997" stop-color="#252525"/></linearGradient><linearGradient id="h34" gradientUnits="userSpaceOnUse" x1="0" y1="555.0" x2="0" y2="785.7"><stop offset="0.000" stop-color="#000000"/><stop offset="0.564" stop-color="#000000"/><stop offset="0.572" stop-color="#0d0d0d"/><stop offset="0.581" stop-color="#0d0d0d"/><stop offset="0.590" stop-color="#424242"/><stop offset="0.650" stop-color="#585858"/><stop offset="0.737" stop-color="#dddddd"/><stop offset="0.763" stop-color="#f3f3f3"/><stop offset="0.780" stop-color="#f8f8f8"/><stop offset="0.806" stop-color="#f1f1f1"/><stop offset="0.832" stop-color="#dfdfdf"/><stop offset="0.928" stop-color="#6b6b6b"/><stop offset="0.962" stop-color="#6b6b6b"/><stop offset="0.980" stop-color="#3b3b3b"/><stop offset="0.988" stop-color="#2b2b2b"/><stop offset="0.997" stop-color="#252525"/></linearGradient><linearGradient id="h35" gradientUnits="userSpaceOnUse" x1="0" y1="555.0" x2="0" y2="785.7"><stop offset="0.000" stop-color="#000000"/><stop offset="0.572" stop-color="#000000"/><stop offset="0.581" stop-color="#0d0d0d"/><stop offset="0.590" stop-color="#0d0d0d"/><stop offset="0.598" stop-color="#424242"/><stop offset="0.650" stop-color="#585858"/><stop offset="0.737" stop-color="#dcdcdc"/><stop offset="0.763" stop-color="#f3f3f3"/><stop offset="0.780" stop-color="#f8f8f8"/><stop offset="0.806" stop-color="#f1f1f1"/><stop offset="0.832" stop-color="#dfdfdf"/><stop offset="0.928" stop-color="#6b6b6b"/><stop offset="0.962" stop-color="#6b6b6b"/><stop offset="0.980" stop-color="#3c3c3c"/><stop offset="0.988" stop-color="#2b2b2b"/><stop offset="0.997" stop-color="#252525"/></linearGradient><linearGradient id="h36" gradientUnits="userSpaceOnUse" x1="0" y1="555.0" x2="0" y2="785.7"><stop offset="0.000" stop-color="#000000"/><stop offset="0.572" stop-color="#000000"/><stop offset="0.581" stop-color="#0d0d0d"/><stop offset="0.590" stop-color="#0d0d0d"/><stop offset="0.598" stop-color="#424242"/><stop offset="0.650" stop-color="#575757"/><stop offset="0.737" stop-color="#dcdcdc"/><stop offset="0.763" stop-color="#f3f3f3"/><stop offset="0.780" stop-color="#f8f8f8"/><stop offset="0.806" stop-color="#f1f1f1"/><stop offset="0.832" stop-color="#dfdfdf"/><stop offset="0.928" stop-color="#6b6b6b"/><stop offset="0.962" stop-color="#6b6b6b"/><stop offset="0.980" stop-color="#3c3c3c"/><stop offset="0.988" stop-color="#2c2c2c"/><stop offset="0.997" stop-color="#252525"/></linearGradient><linearGradient id="h37" gradientUnits="userSpaceOnUse" x1="0" y1="555.0" x2="0" y2="785.7"><stop offset="0.000" stop-color="#000000"/><stop offset="0.555" stop-color="#000000"/><stop offset="0.564" stop-color="#0d0d0d"/><stop offset="0.572" stop-color="#0d0d0d"/><stop offset="0.581" stop-color="#424242"/><stop offset="0.650" stop-color="#575757"/><stop offset="0.737" stop-color="#dbdbdb"/><stop offset="0.763" stop-color="#f2f2f2"/><stop offset="0.780" stop-color="#f7f7f7"/><stop offset="0.806" stop-color="#f1f1f1"/><stop offset="0.832" stop-color="#dfdfdf"/><stop offset="0.928" stop-color="#6b6b6b"/><stop offset="0.962" stop-color="#6b6b6b"/><stop offset="0.980" stop-color="#3c3c3c"/><stop offset="0.988" stop-color="#2c2c2c"/><stop offset="0.997" stop-color="#262626"/></linearGradient><linearGradient id="h38" gradientUnits="userSpaceOnUse" x1="0" y1="555.0" x2="0" y2="785.7"><stop offset="0.000" stop-color="#000000"/><stop offset="0.295" stop-color="#000000"/><stop offset="0.303" stop-color="#272727"/><stop offset="0.564" stop-color="#0f0f0f"/><stop offset="0.572" stop-color="#424242"/><stop offset="0.659" stop-color="#5a5a5a"/><stop offset="0.746" stop-color="#dedede"/><stop offset="0.772" stop-color="#f4f4f4"/><stop offset="0.789" stop-color="#f7f7f7"/><stop offset="0.815" stop-color="#f0f0f0"/><stop offset="0.841" stop-color="#dbdbdb"/><stop offset="0.928" stop-color="#6d6d6d"/><stop offset="0.962" stop-color="#6b6b6b"/><stop offset="0.980" stop-color="#3d3d3d"/><stop offset="0.988" stop-color="#2e2e2e"/><stop offset="0.997" stop-color="#272727"/></linearGradient><linearGradient id="h39" gradientUnits="userSpaceOnUse" x1="0" y1="555.0" x2="0" y2="785.7"><stop offset="0.000" stop-color="#000000"/><stop offset="0.104" stop-color="#000000"/><stop offset="0.113" stop-color="#555555"/><stop offset="0.312" stop-color="#252525"/><stop offset="0.572" stop-color="#0f0f0f"/><stop offset="0.581" stop-color="#424242"/><stop offset="0.676" stop-color="#626262"/><stop offset="0.754" stop-color="#dedede"/><stop offset="0.780" stop-color="#f4f4f4"/><stop offset="0.798" stop-color="#f7f7f7"/><stop offset="0.824" stop-color="#efefef"/><stop offset="0.850" stop-color="#d9d9d9"/><stop offset="0.936" stop-color="#6b6b6b"/><stop offset="0.962" stop-color="#6b6b6b"/><stop offset="0.971" stop-color="#5b5b5b"/><stop offset="0.980" stop-color="#404040"/><stop offset="0.997" stop-color="#2a2a2a"/></linearGradient><linearGradient id="h40" gradientUnits="userSpaceOnUse" x1="0" y1="555.0" x2="0" y2="785.7"><stop offset="0.000" stop-color="#000000"/><stop offset="0.095" stop-color="#000000"/><stop offset="0.104" stop-color="#555555"/><stop offset="0.321" stop-color="#242424"/><stop offset="0.572" stop-color="#0f0f0f"/><stop offset="0.581" stop-color="#424242"/><stop offset="0.676" stop-color="#5e5e5e"/><stop offset="0.754" stop-color="#dbdbdb"/><stop offset="0.780" stop-color="#f3f3f3"/><stop offset="0.798" stop-color="#f7f7f7"/><stop offset="0.824" stop-color="#f0f0f0"/><stop offset="0.850" stop-color="#dbdbdb"/><stop offset="0.936" stop-color="#6b6b6b"/><stop offset="0.962" stop-color="#6b6b6b"/><stop offset="0.971" stop-color="#5c5c5c"/><stop offset="0.980" stop-color="#404040"/><stop offset="0.997" stop-color="#2a2a2a"/></linearGradient><linearGradient id="h41" gradientUnits="userSpaceOnUse" x1="0" y1="555.0" x2="0" y2="785.7"><stop offset="0.000" stop-color="#000000"/><stop offset="0.095" stop-color="#000000"/><stop offset="0.104" stop-color="#555555"/><stop offset="0.321" stop-color="#242424"/><stop offset="0.572" stop-color="#0f0f0f"/><stop offset="0.581" stop-color="#424242"/><stop offset="0.676" stop-color="#5e5e5e"/><stop offset="0.754" stop-color="#dbdbdb"/><stop offset="0.780" stop-color="#f3f3f3"/><stop offset="0.798" stop-color="#f7f7f7"/><stop offset="0.824" stop-color="#f0f0f0"/><stop offset="0.850" stop-color="#dbdbdb"/><stop offset="0.936" stop-color="#6b6b6b"/><stop offset="0.962" stop-color="#6b6b6b"/><stop offset="0.971" stop-color="#5c5c5c"/><stop offset="0.980" stop-color="#404040"/><stop offset="0.997" stop-color="#2a2a2a"/></linearGradient><linearGradient id="h42" gradientUnits="userSpaceOnUse" x1="0" y1="555.0" x2="0" y2="785.7"><stop offset="0.000" stop-color="#000000"/><stop offset="0.095" stop-color="#000000"/><stop offset="0.104" stop-color="#555555"/><stop offset="0.321" stop-color="#242424"/><stop offset="0.572" stop-color="#0f0f0f"/><stop offset="0.581" stop-color="#424242"/><stop offset="0.676" stop-color="#5e5e5e"/><stop offset="0.754" stop-color="#dbdbdb"/><stop offset="0.780" stop-color="#f3f3f3"/><stop offset="0.798" stop-color="#f7f7f7"/><stop offset="0.824" stop-color="#f0f0f0"/><stop offset="0.850" stop-color="#dbdbdb"/><stop offset="0.936" stop-color="#6b6b6b"/><stop offset="0.962" stop-color="#6b6b6b"/><stop offset="0.971" stop-color="#5c5c5c"/><stop offset="0.980" stop-color="#404040"/><stop offset="0.997" stop-color="#2a2a2a"/></linearGradient><linearGradient id="h43" gradientUnits="userSpaceOnUse" x1="0" y1="555.0" x2="0" y2="785.7"><stop offset="0.000" stop-color="#000000"/><stop offset="0.095" stop-color="#000000"/><stop offset="0.104" stop-color="#555555"/><stop offset="0.321" stop-color="#242424"/><stop offset="0.581" stop-color="#0e0e0e"/><stop offset="0.590" stop-color="#424242"/><stop offset="0.676" stop-color="#5e5e5e"/><stop offset="0.754" stop-color="#dbdbdb"/><stop offset="0.780" stop-color="#f3f3f3"/><stop offset="0.798" stop-color="#f7f7f7"/><stop offset="0.824" stop-color="#f0f0f0"/><stop offset="0.850" stop-color="#dbdbdb"/><stop offset="0.936" stop-color="#6b6b6b"/><stop offset="0.962" stop-color="#6b6b6b"/><stop offset="0.971" stop-color="#5c5c5c"/><stop offset="0.980" stop-color="#404040"/><stop offset="0.997" stop-color="#2a2a2a"/></linearGradient><linearGradient id="h44" gradientUnits="userSpaceOnUse" x1="0" y1="555.0" x2="0" y2="785.7"><stop offset="0.000" stop-color="#000000"/><stop offset="0.095" stop-color="#000000"/><stop offset="0.104" stop-color="#555555"/><stop offset="0.321" stop-color="#242424"/><stop offset="0.581" stop-color="#0e0e0e"/><stop offset="0.590" stop-color="#424242"/><stop offset="0.676" stop-color="#5e5e5e"/><stop offset="0.754" stop-color="#dbdbdb"/><stop offset="0.780" stop-color="#f3f3f3"/><stop offset="0.798" stop-color="#f7f7f7"/><stop offset="0.824" stop-color="#f0f0f0"/><stop offset="0.850" stop-color="#dbdbdb"/><stop offset="0.936" stop-color="#6b6b6b"/><stop offset="0.962" stop-color="#6b6b6b"/><stop offset="0.971" stop-color="#5c5c5c"/><stop offset="0.980" stop-color="#404040"/><stop offset="0.997" stop-color="#2a2a2a"/></linearGradient><linearGradient id="h45" gradientUnits="userSpaceOnUse" x1="0" y1="555.0" x2="0" y2="785.7"><stop offset="0.000" stop-color="#000000"/><stop offset="0.095" stop-color="#000000"/><stop offset="0.104" stop-color="#555555"/><stop offset="0.321" stop-color="#242424"/><stop offset="0.581" stop-color="#0e0e0e"/><stop offset="0.590" stop-color="#424242"/><stop offset="0.676" stop-color="#5e5e5e"/><stop offset="0.754" stop-color="#dbdbdb"/><stop offset="0.780" stop-color="#f3f3f3"/><stop offset="0.798" stop-color="#f7f7f7"/><stop offset="0.824" stop-color="#f0f0f0"/><stop offset="0.850" stop-color="#dbdbdb"/><stop offset="0.936" stop-color="#6b6b6b"/><stop offset="0.962" stop-color="#6b6b6b"/><stop offset="0.971" stop-color="#5c5c5c"/><stop offset="0.980" stop-color="#404040"/><stop offset="0.997" stop-color="#2a2a2a"/></linearGradient><linearGradient id="h46" gradientUnits="userSpaceOnUse" x1="0" y1="555.0" x2="0" y2="785.7"><stop offset="0.000" stop-color="#000000"/><stop offset="0.095" stop-color="#000000"/><stop offset="0.104" stop-color="#555555"/><stop offset="0.321" stop-color="#242424"/><stop offset="0.581" stop-color="#0e0e0e"/><stop offset="0.590" stop-color="#424242"/><stop offset="0.676" stop-color="#5e5e5e"/><stop offset="0.754" stop-color="#dbdbdb"/><stop offset="0.780" stop-color="#f3f3f3"/><stop offset="0.798" stop-color="#f7f7f7"/><stop offset="0.824" stop-color="#f0f0f0"/><stop offset="0.850" stop-color="#dbdbdb"/><stop offset="0.936" stop-color="#6b6b6b"/><stop offset="0.962" stop-color="#6b6b6b"/><stop offset="0.971" stop-color="#5c5c5c"/><stop offset="0.980" stop-color="#404040"/><stop offset="0.997" stop-color="#2a2a2a"/></linearGradient><linearGradient id="h47" gradientUnits="userSpaceOnUse" x1="0" y1="555.0" x2="0" y2="785.7"><stop offset="0.000" stop-color="#000000"/><stop offset="0.095" stop-color="#000000"/><stop offset="0.104" stop-color="#555555"/><stop offset="0.321" stop-color="#242424"/><stop offset="0.590" stop-color="#0e0e0e"/><stop offset="0.598" stop-color="#424242"/><stop offset="0.676" stop-color="#5e5e5e"/><stop offset="0.754" stop-color="#dbdbdb"/><stop offset="0.780" stop-color="#f3f3f3"/><stop offset="0.798" stop-color="#f7f7f7"/><stop offset="0.824" stop-color="#f0f0f0"/><stop offset="0.850" stop-color="#dbdbdb"/><stop offset="0.936" stop-color="#6b6b6b"/><stop offset="0.962" stop-color="#6b6b6b"/><stop offset="0.971" stop-color="#5c5c5c"/><stop offset="0.980" stop-color="#404040"/><stop offset="0.997" stop-color="#2a2a2a"/></linearGradient><linearGradient id="h48" gradientUnits="userSpaceOnUse" x1="0" y1="555.0" x2="0" y2="785.7"><stop offset="0.000" stop-color="#000000"/><stop offset="0.095" stop-color="#000000"/><stop offset="0.104" stop-color="#555555"/><stop offset="0.321" stop-color="#242424"/><stop offset="0.590" stop-color="#0e0e0e"/><stop offset="0.598" stop-color="#424242"/><stop offset="0.676" stop-color="#5e5e5e"/><stop offset="0.754" stop-color="#dbdbdb"/><stop offset="0.780" stop-color="#f3f3f3"/><stop offset="0.798" stop-color="#f7f7f7"/><stop offset="0.824" stop-color="#f0f0f0"/><stop offset="0.850" stop-color="#dbdbdb"/><stop offset="0.936" stop-color="#6b6b6b"/><stop offset="0.962" stop-color="#6b6b6b"/><stop offset="0.971" stop-color="#5c5c5c"/><stop offset="0.980" stop-color="#404040"/><stop offset="0.997" stop-color="#2a2a2a"/></linearGradient><linearGradient id="h49" gradientUnits="userSpaceOnUse" x1="0" y1="555.0" x2="0" y2="785.7"><stop offset="0.000" stop-color="#000000"/><stop offset="0.095" stop-color="#000000"/><stop offset="0.104" stop-color="#555555"/><stop offset="0.321" stop-color="#242424"/><stop offset="0.590" stop-color="#0e0e0e"/><stop offset="0.598" stop-color="#424242"/><stop offset="0.676" stop-color="#5e5e5e"/><stop offset="0.754" stop-color="#dbdbdb"/><stop offset="0.780" stop-color="#f3f3f3"/><stop offset="0.798" stop-color="#f7f7f7"/><stop offset="0.824" stop-color="#f0f0f0"/><stop offset="0.850" stop-color="#dbdbdb"/><stop offset="0.936" stop-color="#6b6b6b"/><stop offset="0.962" stop-color="#6b6b6b"/><stop offset="0.971" stop-color="#5c5c5c"/><stop offset="0.980" stop-color="#404040"/><stop offset="0.997" stop-color="#2a2a2a"/></linearGradient><linearGradient id="h50" gradientUnits="userSpaceOnUse" x1="0" y1="555.0" x2="0" y2="785.7"><stop offset="0.000" stop-color="#000000"/><stop offset="0.095" stop-color="#000000"/><stop offset="0.104" stop-color="#555555"/><stop offset="0.321" stop-color="#242424"/><stop offset="0.590" stop-color="#0e0e0e"/><stop offset="0.598" stop-color="#424242"/><stop offset="0.676" stop-color="#5e5e5e"/><stop offset="0.754" stop-color="#dbdbdb"/><stop offset="0.780" stop-color="#f3f3f3"/><stop offset="0.798" stop-color="#f7f7f7"/><stop offset="0.824" stop-color="#f0f0f0"/><stop offset="0.850" stop-color="#dbdbdb"/><stop offset="0.936" stop-color="#6b6b6b"/><stop offset="0.962" stop-color="#6b6b6b"/><stop offset="0.971" stop-color="#5c5c5c"/><stop offset="0.980" stop-color="#404040"/><stop offset="0.997" stop-color="#2a2a2a"/></linearGradient><linearGradient id="h51" gradientUnits="userSpaceOnUse" x1="0" y1="555.0" x2="0" y2="785.7"><stop offset="0.000" stop-color="#000000"/><stop offset="0.095" stop-color="#000000"/><stop offset="0.104" stop-color="#555555"/><stop offset="0.321" stop-color="#242424"/><stop offset="0.590" stop-color="#0e0e0e"/><stop offset="0.598" stop-color="#424242"/><stop offset="0.676" stop-color="#5e5e5e"/><stop offset="0.754" stop-color="#dbdbdb"/><stop offset="0.780" stop-color="#f3f3f3"/><stop offset="0.798" stop-color="#f7f7f7"/><stop offset="0.824" stop-color="#f0f0f0"/><stop offset="0.850" stop-color="#dbdbdb"/><stop offset="0.936" stop-color="#6b6b6b"/><stop offset="0.962" stop-color="#6b6b6b"/><stop offset="0.971" stop-color="#5c5c5c"/><stop offset="0.980" stop-color="#404040"/><stop offset="0.997" stop-color="#2a2a2a"/></linearGradient><linearGradient id="h52" gradientUnits="userSpaceOnUse" x1="0" y1="555.0" x2="0" y2="785.7"><stop offset="0.000" stop-color="#000000"/><stop offset="0.095" stop-color="#000000"/><stop offset="0.104" stop-color="#555555"/><stop offset="0.321" stop-color="#242424"/><stop offset="0.590" stop-color="#0e0e0e"/><stop offset="0.598" stop-color="#424242"/><stop offset="0.676" stop-color="#5e5e5e"/><stop offset="0.754" stop-color="#dbdbdb"/><stop offset="0.780" stop-color="#f3f3f3"/><stop offset="0.798" stop-color="#f7f7f7"/><stop offset="0.824" stop-color="#f0f0f0"/><stop offset="0.850" stop-color="#dbdbdb"/><stop offset="0.936" stop-color="#6b6b6b"/><stop offset="0.962" stop-color="#6b6b6b"/><stop offset="0.971" stop-color="#5c5c5c"/><stop offset="0.980" stop-color="#404040"/><stop offset="0.997" stop-color="#2a2a2a"/></linearGradient><linearGradient id="h53" gradientUnits="userSpaceOnUse" x1="0" y1="555.0" x2="0" y2="785.7"><stop offset="0.000" stop-color="#000000"/><stop offset="0.095" stop-color="#000000"/><stop offset="0.104" stop-color="#555555"/><stop offset="0.321" stop-color="#242424"/><stop offset="0.590" stop-color="#0e0e0e"/><stop offset="0.598" stop-color="#424242"/><stop offset="0.676" stop-color="#5e5e5e"/><stop offset="0.754" stop-color="#dbdbdb"/><stop offset="0.780" stop-color="#f3f3f3"/><stop offset="0.798" stop-color="#f7f7f7"/><stop offset="0.824" stop-color="#f0f0f0"/><stop offset="0.850" stop-color="#dbdbdb"/><stop offset="0.936" stop-color="#6b6b6b"/><stop offset="0.962" stop-color="#6b6b6b"/><stop offset="0.971" stop-color="#5c5c5c"/><stop offset="0.980" stop-color="#404040"/><stop offset="0.997" stop-color="#2a2a2a"/></linearGradient><linearGradient id="h54" gradientUnits="userSpaceOnUse" x1="0" y1="555.0" x2="0" y2="785.7"><stop offset="0.000" stop-color="#000000"/><stop offset="0.095" stop-color="#000000"/><stop offset="0.104" stop-color="#555555"/><stop offset="0.321" stop-color="#242424"/><stop offset="0.590" stop-color="#0e0e0e"/><stop offset="0.598" stop-color="#424242"/><stop offset="0.676" stop-color="#5e5e5e"/><stop offset="0.754" stop-color="#dbdbdb"/><stop offset="0.780" stop-color="#f3f3f3"/><stop offset="0.798" stop-color="#f7f7f7"/><stop offset="0.824" stop-color="#f0f0f0"/><stop offset="0.850" stop-color="#dbdbdb"/><stop offset="0.936" stop-color="#6b6b6b"/><stop offset="0.962" stop-color="#6b6b6b"/><stop offset="0.971" stop-color="#5c5c5c"/><stop offset="0.980" stop-color="#404040"/><stop offset="0.997" stop-color="#2a2a2a"/></linearGradient><linearGradient id="h55" gradientUnits="userSpaceOnUse" x1="0" y1="555.0" x2="0" y2="785.7"><stop offset="0.000" stop-color="#000000"/><stop offset="0.095" stop-color="#000000"/><stop offset="0.104" stop-color="#555555"/><stop offset="0.321" stop-color="#242424"/><stop offset="0.590" stop-color="#0e0e0e"/><stop offset="0.598" stop-color="#424242"/><stop offset="0.676" stop-color="#5e5e5e"/><stop offset="0.754" stop-color="#dbdbdb"/><stop offset="0.780" stop-color="#f3f3f3"/><stop offset="0.798" stop-color="#f7f7f7"/><stop offset="0.824" stop-color="#f0f0f0"/><stop offset="0.850" stop-color="#dbdbdb"/><stop offset="0.936" stop-color="#6b6b6b"/><stop offset="0.962" stop-color="#6b6b6b"/><stop offset="0.971" stop-color="#5c5c5c"/><stop offset="0.980" stop-color="#404040"/><stop offset="0.997" stop-color="#2a2a2a"/></linearGradient><linearGradient id="h56" gradientUnits="userSpaceOnUse" x1="0" y1="555.0" x2="0" y2="785.7"><stop offset="0.000" stop-color="#000000"/><stop offset="0.095" stop-color="#000000"/><stop offset="0.104" stop-color="#555555"/><stop offset="0.321" stop-color="#242424"/><stop offset="0.590" stop-color="#0e0e0e"/><stop offset="0.598" stop-color="#424242"/><stop offset="0.676" stop-color="#5e5e5e"/><stop offset="0.754" stop-color="#dbdbdb"/><stop offset="0.780" stop-color="#f3f3f3"/><stop offset="0.798" stop-color="#f7f7f7"/><stop offset="0.824" stop-color="#f0f0f0"/><stop offset="0.850" stop-color="#dbdbdb"/><stop offset="0.936" stop-color="#6b6b6b"/><stop offset="0.962" stop-color="#6b6b6b"/><stop offset="0.971" stop-color="#5c5c5c"/><stop offset="0.980" stop-color="#404040"/><stop offset="0.997" stop-color="#2a2a2a"/></linearGradient><linearGradient id="h57" gradientUnits="userSpaceOnUse" x1="0" y1="555.0" x2="0" y2="785.7"><stop offset="0.000" stop-color="#000000"/><stop offset="0.104" stop-color="#000000"/><stop offset="0.113" stop-color="#555555"/><stop offset="0.321" stop-color="#242424"/><stop offset="0.590" stop-color="#0e0e0e"/><stop offset="0.598" stop-color="#424242"/><stop offset="0.676" stop-color="#5e5e5e"/><stop offset="0.754" stop-color="#dbdbdb"/><stop offset="0.780" stop-color="#f3f3f3"/><stop offset="0.798" stop-color="#f7f7f7"/><stop offset="0.824" stop-color="#f0f0f0"/><stop offset="0.850" stop-color="#dbdbdb"/><stop offset="0.936" stop-color="#6b6b6b"/><stop offset="0.962" stop-color="#6b6b6b"/><stop offset="0.971" stop-color="#5c5c5c"/><stop offset="0.980" stop-color="#404040"/><stop offset="0.997" stop-color="#2a2a2a"/></linearGradient><linearGradient id="h58" gradientUnits="userSpaceOnUse" x1="0" y1="555.0" x2="0" y2="785.7"><stop offset="0.000" stop-color="#000000"/><stop offset="0.104" stop-color="#000000"/><stop offset="0.113" stop-color="#555555"/><stop offset="0.321" stop-color="#242424"/><stop offset="0.590" stop-color="#0e0e0e"/><stop offset="0.598" stop-color="#424242"/><stop offset="0.676" stop-color="#5e5e5e"/><stop offset="0.754" stop-color="#dbdbdb"/><stop offset="0.780" stop-color="#f3f3f3"/><stop offset="0.798" stop-color="#f7f7f7"/><stop offset="0.824" stop-color="#f0f0f0"/><stop offset="0.850" stop-color="#dbdbdb"/><stop offset="0.936" stop-color="#6b6b6b"/><stop offset="0.962" stop-color="#6b6b6b"/><stop offset="0.971" stop-color="#5c5c5c"/><stop offset="0.980" stop-color="#404040"/><stop offset="0.997" stop-color="#2a2a2a"/></linearGradient><linearGradient id="h59" gradientUnits="userSpaceOnUse" x1="0" y1="555.0" x2="0" y2="785.7"><stop offset="0.000" stop-color="#000000"/><stop offset="0.104" stop-color="#000000"/><stop offset="0.113" stop-color="#555555"/><stop offset="0.321" stop-color="#242424"/><stop offset="0.590" stop-color="#0e0e0e"/><stop offset="0.598" stop-color="#424242"/><stop offset="0.659" stop-color="#545454"/><stop offset="0.746" stop-color="#d8d8d8"/><stop offset="0.772" stop-color="#f1f1f1"/><stop offset="0.789" stop-color="#f8f8f8"/><stop offset="0.815" stop-color="#f4f4f4"/><stop offset="0.850" stop-color="#dbdbdb"/><stop offset="0.936" stop-color="#6d6d6d"/><stop offset="0.962" stop-color="#6b6b6b"/><stop offset="0.971" stop-color="#5a5a5a"/><stop offset="0.980" stop-color="#3f3f3f"/><stop offset="0.997" stop-color="#2f2f2f"/></linearGradient><linearGradient id="h60" gradientUnits="userSpaceOnUse" x1="0" y1="555.0" x2="0" y2="785.7"><stop offset="0.000" stop-color="#000000"/><stop offset="0.104" stop-color="#000000"/><stop offset="0.113" stop-color="#555555"/><stop offset="0.321" stop-color="#242424"/><stop offset="0.590" stop-color="#0e0e0e"/><stop offset="0.598" stop-color="#424242"/><stop offset="0.642" stop-color="#535353"/><stop offset="0.737" stop-color="#dbdbdb"/><stop offset="0.763" stop-color="#f2f2f2"/><stop offset="0.789" stop-color="#fafafa"/><stop offset="0.815" stop-color="#f3f3f3"/><stop offset="0.850" stop-color="#dbdbdb"/><stop offset="0.945" stop-color="#6b6b6b"/><stop offset="0.962" stop-color="#6b6b6b"/><stop offset="0.980" stop-color="#464646"/><stop offset="0.997" stop-color="#373737"/></linearGradient><linearGradient id="h61" gradientUnits="userSpaceOnUse" x1="0" y1="555.0" x2="0" y2="785.7"><stop offset="0.000" stop-color="#000000"/><stop offset="0.104" stop-color="#000000"/><stop offset="0.113" stop-color="#555555"/><stop offset="0.312" stop-color="#252525"/><stop offset="0.581" stop-color="#0e0e0e"/><stop offset="0.590" stop-color="#424242"/><stop offset="0.642" stop-color="#535353"/><stop offset="0.737" stop-color="#dbdbdb"/><stop offset="0.763" stop-color="#f2f2f2"/><stop offset="0.789" stop-color="#fafafa"/><stop offset="0.815" stop-color="#f3f3f3"/><stop offset="0.850" stop-color="#dbdbdb"/><stop offset="0.945" stop-color="#6b6b6b"/><stop offset="0.962" stop-color="#6b6b6b"/><stop offset="0.980" stop-color="#464646"/><stop offset="0.997" stop-color="#373737"/></linearGradient><linearGradient id="h62" gradientUnits="userSpaceOnUse" x1="0" y1="555.0" x2="0" y2="785.7"><stop offset="0.000" stop-color="#000000"/><stop offset="0.104" stop-color="#000000"/><stop offset="0.113" stop-color="#555555"/><stop offset="0.312" stop-color="#252525"/><stop offset="0.572" stop-color="#0f0f0f"/><stop offset="0.581" stop-color="#424242"/><stop offset="0.642" stop-color="#535353"/><stop offset="0.737" stop-color="#dbdbdb"/><stop offset="0.763" stop-color="#f2f2f2"/><stop offset="0.789" stop-color="#fafafa"/><stop offset="0.815" stop-color="#f3f3f3"/><stop offset="0.850" stop-color="#dbdbdb"/><stop offset="0.945" stop-color="#6b6b6b"/><stop offset="0.962" stop-color="#6b6b6b"/><stop offset="0.980" stop-color="#464646"/><stop offset="0.997" stop-color="#373737"/></linearGradient><linearGradient id="h63" gradientUnits="userSpaceOnUse" x1="0" y1="555.0" x2="0" y2="785.7"><stop offset="0.000" stop-color="#000000"/><stop offset="0.104" stop-color="#000000"/><stop offset="0.113" stop-color="#555555"/><stop offset="0.312" stop-color="#252525"/><stop offset="0.564" stop-color="#0f0f0f"/><stop offset="0.572" stop-color="#424242"/><stop offset="0.642" stop-color="#555555"/><stop offset="0.737" stop-color="#dbdbdb"/><stop offset="0.763" stop-color="#f2f2f2"/><stop offset="0.789" stop-color="#fafafa"/><stop offset="0.815" stop-color="#f3f3f3"/><stop offset="0.850" stop-color="#dbdbdb"/><stop offset="0.945" stop-color="#6b6b6b"/><stop offset="0.962" stop-color="#6b6b6b"/><stop offset="0.980" stop-color="#464646"/><stop offset="0.997" stop-color="#373737"/></linearGradient><linearGradient id="h64" gradientUnits="userSpaceOnUse" x1="0" y1="555.0" x2="0" y2="785.7"><stop offset="0.000" stop-color="#000000"/><stop offset="0.104" stop-color="#000000"/><stop offset="0.113" stop-color="#555555"/><stop offset="0.312" stop-color="#252525"/><stop offset="0.564" stop-color="#0f0f0f"/><stop offset="0.572" stop-color="#424242"/><stop offset="0.642" stop-color="#565656"/><stop offset="0.737" stop-color="#dbdbdb"/><stop offset="0.763" stop-color="#f2f2f2"/><stop offset="0.789" stop-color="#fafafa"/><stop offset="0.815" stop-color="#f3f3f3"/><stop offset="0.850" stop-color="#dbdbdb"/><stop offset="0.945" stop-color="#6b6b6b"/><stop offset="0.962" stop-color="#6b6b6b"/><stop offset="0.980" stop-color="#464646"/><stop offset="0.997" stop-color="#373737"/></linearGradient><linearGradient id="h65" gradientUnits="userSpaceOnUse" x1="0" y1="555.0" x2="0" y2="785.7"><stop offset="0.000" stop-color="#000000"/><stop offset="0.104" stop-color="#000000"/><stop offset="0.113" stop-color="#555555"/><stop offset="0.312" stop-color="#252525"/><stop offset="0.572" stop-color="#0f0f0f"/><stop offset="0.581" stop-color="#424242"/><stop offset="0.642" stop-color="#545454"/><stop offset="0.737" stop-color="#dbdbdb"/><stop offset="0.763" stop-color="#f2f2f2"/><stop offset="0.789" stop-color="#fafafa"/><stop offset="0.815" stop-color="#f3f3f3"/><stop offset="0.850" stop-color="#dbdbdb"/><stop offset="0.945" stop-color="#6b6b6b"/><stop offset="0.962" stop-color="#6b6b6b"/><stop offset="0.980" stop-color="#464646"/><stop offset="0.997" stop-color="#373737"/></linearGradient><linearGradient id="h66" gradientUnits="userSpaceOnUse" x1="0" y1="555.0" x2="0" y2="785.7"><stop offset="0.000" stop-color="#000000"/><stop offset="0.104" stop-color="#000000"/><stop offset="0.113" stop-color="#555555"/><stop offset="0.312" stop-color="#252525"/><stop offset="0.581" stop-color="#0e0e0e"/><stop offset="0.590" stop-color="#424242"/><stop offset="0.642" stop-color="#535353"/><stop offset="0.737" stop-color="#dbdbdb"/><stop offset="0.763" stop-color="#f2f2f2"/><stop offset="0.789" stop-color="#fafafa"/><stop offset="0.815" stop-color="#f3f3f3"/><stop offset="0.850" stop-color="#dbdbdb"/><stop offset="0.945" stop-color="#6b6b6b"/><stop offset="0.962" stop-color="#6b6b6b"/><stop offset="0.980" stop-color="#464646"/><stop offset="0.997" stop-color="#373737"/></linearGradient><linearGradient id="h67" gradientUnits="userSpaceOnUse" x1="0" y1="555.0" x2="0" y2="785.7"><stop offset="0.000" stop-color="#000000"/><stop offset="0.095" stop-color="#000000"/><stop offset="0.104" stop-color="#555555"/><stop offset="0.321" stop-color="#242424"/><stop offset="0.590" stop-color="#0e0e0e"/><stop offset="0.598" stop-color="#424242"/><stop offset="0.642" stop-color="#535353"/><stop offset="0.737" stop-color="#dbdbdb"/><stop offset="0.763" stop-color="#f2f2f2"/><stop offset="0.789" stop-color="#fafafa"/><stop offset="0.815" stop-color="#f3f3f3"/><stop offset="0.850" stop-color="#dbdbdb"/><stop offset="0.945" stop-color="#6b6b6b"/><stop offset="0.962" stop-color="#6b6b6b"/><stop offset="0.980" stop-color="#464646"/><stop offset="0.997" stop-color="#373737"/></linearGradient><linearGradient id="h68" gradientUnits="userSpaceOnUse" x1="0" y1="555.0" x2="0" y2="785.7"><stop offset="0.000" stop-color="#000000"/><stop offset="0.095" stop-color="#000000"/><stop offset="0.104" stop-color="#555555"/><stop offset="0.321" stop-color="#242424"/><stop offset="0.598" stop-color="#0e0e0e"/><stop offset="0.607" stop-color="#424242"/><stop offset="0.659" stop-color="#535353"/><stop offset="0.746" stop-color="#d6d6d6"/><stop offset="0.772" stop-color="#f0f0f0"/><stop offset="0.798" stop-color="#f9f9f9"/><stop offset="0.824" stop-color="#f2f2f2"/><stop offset="0.858" stop-color="#d7d7d7"/><stop offset="0.945" stop-color="#6b6b6b"/><stop offset="0.962" stop-color="#6b6b6b"/><stop offset="0.980" stop-color="#444444"/><stop offset="0.997" stop-color="#353535"/></linearGradient><linearGradient id="h69" gradientUnits="userSpaceOnUse" x1="0" y1="555.0" x2="0" y2="785.7"><stop offset="0.000" stop-color="#000000"/><stop offset="0.095" stop-color="#000000"/><stop offset="0.104" stop-color="#555555"/><stop offset="0.329" stop-color="#232323"/><stop offset="0.607" stop-color="#0d0d0d"/><stop offset="0.616" stop-color="#424242"/><stop offset="0.694" stop-color="#5a5a5a"/><stop offset="0.772" stop-color="#dadada"/><stop offset="0.798" stop-color="#f3f3f3"/><stop offset="0.815" stop-color="#f7f7f7"/><stop offset="0.841" stop-color="#efefef"/><stop offset="0.867" stop-color="#d7d7d7"/><stop offset="0.945" stop-color="#6b6b6b"/><stop offset="0.962" stop-color="#6b6b6b"/><stop offset="0.971" stop-color="#646464"/><stop offset="0.980" stop-color="#464646"/><stop offset="0.997" stop-color="#303030"/></linearGradient><linearGradient id="h70" gradientUnits="userSpaceOnUse" x1="0" y1="555.0" x2="0" y2="785.7"><stop offset="0.000" stop-color="#000000"/><stop offset="0.095" stop-color="#000000"/><stop offset="0.104" stop-color="#555555"/><stop offset="0.329" stop-color="#232323"/><stop offset="0.607" stop-color="#0d0d0d"/><stop offset="0.616" stop-color="#424242"/><stop offset="0.694" stop-color="#595959"/><stop offset="0.702" stop-color="#626262"/><stop offset="0.772" stop-color="#d9d9d9"/><stop offset="0.798" stop-color="#f3f3f3"/><stop offset="0.815" stop-color="#f8f8f8"/><stop offset="0.841" stop-color="#efefef"/><stop offset="0.867" stop-color="#d8d8d8"/><stop offset="0.945" stop-color="#6b6b6b"/><stop offset="0.971" stop-color="#646464"/><stop offset="0.980" stop-color="#464646"/><stop offset="0.997" stop-color="#303030"/></linearGradient><linearGradient id="h71" gradientUnits="userSpaceOnUse" x1="0" y1="555.0" x2="0" y2="785.7"><stop offset="0.000" stop-color="#000000"/><stop offset="0.095" stop-color="#000000"/><stop offset="0.104" stop-color="#555555"/><stop offset="0.329" stop-color="#232323"/><stop offset="0.616" stop-color="#0d0d0d"/><stop offset="0.624" stop-color="#424242"/><stop offset="0.694" stop-color="#575757"/><stop offset="0.702" stop-color="#606060"/><stop offset="0.772" stop-color="#d7d7d7"/><stop offset="0.798" stop-color="#f2f2f2"/><stop offset="0.815" stop-color="#f8f8f8"/><stop offset="0.841" stop-color="#f0f0f0"/><stop offset="0.867" stop-color="#d9d9d9"/><stop offset="0.945" stop-color="#6c6c6c"/><stop offset="0.971" stop-color="#656565"/><stop offset="0.980" stop-color="#474747"/><stop offset="0.997" stop-color="#303030"/></linearGradient><linearGradient id="h72" gradientUnits="userSpaceOnUse" x1="0" y1="555.0" x2="0" y2="785.7"><stop offset="0.000" stop-color="#000000"/><stop offset="0.095" stop-color="#000000"/><stop offset="0.104" stop-color="#555555"/><stop offset="0.329" stop-color="#232323"/><stop offset="0.624" stop-color="#0d0d0d"/><stop offset="0.633" stop-color="#424242"/><stop offset="0.694" stop-color="#555555"/><stop offset="0.702" stop-color="#5d5d5d"/><stop offset="0.772" stop-color="#d6d6d6"/><stop offset="0.798" stop-color="#f2f2f2"/><stop offset="0.815" stop-color="#f8f8f8"/><stop offset="0.841" stop-color="#f1f1f1"/><stop offset="0.867" stop-color="#dadada"/><stop offset="0.945" stop-color="#6c6c6c"/><stop offset="0.971" stop-color="#656565"/><stop offset="0.980" stop-color="#474747"/><stop offset="0.997" stop-color="#303030"/></linearGradient><linearGradient id="h73" gradientUnits="userSpaceOnUse" x1="0" y1="555.0" x2="0" y2="785.7"><stop offset="0.000" stop-color="#000000"/><stop offset="0.095" stop-color="#000000"/><stop offset="0.104" stop-color="#555555"/><stop offset="0.338" stop-color="#212121"/><stop offset="0.633" stop-color="#0d0d0d"/><stop offset="0.642" stop-color="#424242"/><stop offset="0.702" stop-color="#5b5b5b"/><stop offset="0.772" stop-color="#d4d4d4"/><stop offset="0.798" stop-color="#f2f2f2"/><stop offset="0.815" stop-color="#f9f9f9"/><stop offset="0.841" stop-color="#f2f2f2"/><stop offset="0.867" stop-color="#dbdbdb"/><stop offset="0.945" stop-color="#6d6d6d"/><stop offset="0.971" stop-color="#666666"/><stop offset="0.980" stop-color="#474747"/><stop offset="0.997" stop-color="#303030"/></linearGradient><linearGradient id="h74" gradientUnits="userSpaceOnUse" x1="0" y1="555.0" x2="0" y2="785.7"><stop offset="0.000" stop-color="#000000"/><stop offset="0.095" stop-color="#000000"/><stop offset="0.104" stop-color="#555555"/><stop offset="0.338" stop-color="#212121"/><stop offset="0.642" stop-color="#0d0d0d"/><stop offset="0.650" stop-color="#424242"/><stop offset="0.702" stop-color="#585858"/><stop offset="0.772" stop-color="#d3d3d3"/><stop offset="0.798" stop-color="#f1f1f1"/><stop offset="0.815" stop-color="#f9f9f9"/><stop offset="0.841" stop-color="#f3f3f3"/><stop offset="0.867" stop-color="#dcdcdc"/><stop offset="0.945" stop-color="#6d6d6d"/><stop offset="0.971" stop-color="#666666"/><stop offset="0.980" stop-color="#484848"/><stop offset="0.997" stop-color="#303030"/></linearGradient><linearGradient id="h75" gradientUnits="userSpaceOnUse" x1="0" y1="555.0" x2="0" y2="785.7"><stop offset="0.000" stop-color="#000000"/><stop offset="0.095" stop-color="#000000"/><stop offset="0.104" stop-color="#555555"/><stop offset="0.338" stop-color="#212121"/><stop offset="0.650" stop-color="#0d0d0d"/><stop offset="0.659" stop-color="#424242"/><stop offset="0.702" stop-color="#565656"/><stop offset="0.780" stop-color="#dedede"/><stop offset="0.798" stop-color="#f1f1f1"/><stop offset="0.815" stop-color="#f9f9f9"/><stop offset="0.841" stop-color="#f3f3f3"/><stop offset="0.867" stop-color="#dedede"/><stop offset="0.945" stop-color="#6d6d6d"/><stop offset="0.971" stop-color="#676767"/><stop offset="0.980" stop-color="#484848"/><stop offset="0.997" stop-color="#303030"/></linearGradient><linearGradient id="h76" gradientUnits="userSpaceOnUse" x1="0" y1="555.0" x2="0" y2="785.7"><stop offset="0.000" stop-color="#000000"/><stop offset="0.156" stop-color="#000000"/><stop offset="0.165" stop-color="#474747"/><stop offset="0.260" stop-color="#2e2e2e"/><stop offset="0.364" stop-color="#1e1e1e"/><stop offset="0.659" stop-color="#0d0d0d"/><stop offset="0.668" stop-color="#424242"/><stop offset="0.702" stop-color="#535353"/><stop offset="0.780" stop-color="#dcdcdc"/><stop offset="0.798" stop-color="#f0f0f0"/><stop offset="0.815" stop-color="#f9f9f9"/><stop offset="0.841" stop-color="#f4f4f4"/><stop offset="0.867" stop-color="#dfdfdf"/><stop offset="0.945" stop-color="#6e6e6e"/><stop offset="0.971" stop-color="#686868"/><stop offset="0.980" stop-color="#494949"/><stop offset="0.997" stop-color="#303030"/></linearGradient><linearGradient id="h77" gradientUnits="userSpaceOnUse" x1="0" y1="555.0" x2="0" y2="785.7"><stop offset="0.000" stop-color="#000000"/><stop offset="0.503" stop-color="#000000"/><stop offset="0.512" stop-color="#121212"/><stop offset="0.668" stop-color="#0d0d0d"/><stop offset="0.676" stop-color="#424242"/><stop offset="0.728" stop-color="#565656"/><stop offset="0.798" stop-color="#d8d8d8"/><stop offset="0.815" stop-color="#eeeeee"/><stop offset="0.832" stop-color="#f8f8f8"/><stop offset="0.858" stop-color="#f2f2f2"/><stop offset="0.884" stop-color="#dadada"/><stop offset="0.954" stop-color="#6e6e6e"/><stop offset="0.971" stop-color="#6b6b6b"/><stop offset="0.980" stop-color="#505050"/><stop offset="0.997" stop-color="#363636"/></linearGradient><linearGradient id="h78" gradientUnits="userSpaceOnUse" x1="0" y1="555.0" x2="0" y2="785.7"><stop offset="0.000" stop-color="#000000"/><stop offset="0.668" stop-color="#000000"/><stop offset="0.685" stop-color="#090909"/><stop offset="0.694" stop-color="#424242"/><stop offset="0.763" stop-color="#5a5a5a"/><stop offset="0.824" stop-color="#d7d7d7"/><stop offset="0.841" stop-color="#eeeeee"/><stop offset="0.858" stop-color="#f8f8f8"/><stop offset="0.876" stop-color="#f3f3f3"/><stop offset="0.902" stop-color="#dadada"/><stop offset="0.997" stop-color="#404040"/></linearGradient><linearGradient id="h79" gradientUnits="userSpaceOnUse" x1="0" y1="555.0" x2="0" y2="785.7"><stop offset="0.000" stop-color="#000000"/><stop offset="0.711" stop-color="#000000"/><stop offset="0.720" stop-color="#0d0d0d"/><stop offset="0.728" stop-color="#0d0d0d"/><stop offset="0.737" stop-color="#424242"/><stop offset="0.754" stop-color="#4b4b4b"/><stop offset="0.824" stop-color="#d8d8d8"/><stop offset="0.841" stop-color="#efefef"/><stop offset="0.858" stop-color="#f9f9f9"/><stop offset="0.876" stop-color="#f4f4f4"/><stop offset="0.902" stop-color="#dbdbdb"/><stop offset="0.997" stop-color="#404040"/></linearGradient><linearGradient id="h80" gradientUnits="userSpaceOnUse" x1="0" y1="555.0" x2="0" y2="785.7"><stop offset="0.000" stop-color="#000000"/><stop offset="0.720" stop-color="#000000"/><stop offset="0.728" stop-color="#0d0d0d"/><stop offset="0.737" stop-color="#0d0d0d"/><stop offset="0.746" stop-color="#424242"/><stop offset="0.763" stop-color="#5b5b5b"/><stop offset="0.824" stop-color="#d9d9d9"/><stop offset="0.841" stop-color="#f0f0f0"/><stop offset="0.858" stop-color="#fafafa"/><stop offset="0.876" stop-color="#f5f5f5"/><stop offset="0.902" stop-color="#dcdcdc"/><stop offset="0.997" stop-color="#404040"/></linearGradient><linearGradient id="h81" gradientUnits="userSpaceOnUse" x1="0" y1="555.0" x2="0" y2="785.7"><stop offset="0.000" stop-color="#000000"/><stop offset="0.720" stop-color="#000000"/><stop offset="0.728" stop-color="#0d0d0d"/><stop offset="0.737" stop-color="#0d0d0d"/><stop offset="0.746" stop-color="#424242"/><stop offset="0.763" stop-color="#5b5b5b"/><stop offset="0.824" stop-color="#dadada"/><stop offset="0.841" stop-color="#f1f1f1"/><stop offset="0.858" stop-color="#fbfbfb"/><stop offset="0.876" stop-color="#f6f6f6"/><stop offset="0.902" stop-color="#dddddd"/><stop offset="0.997" stop-color="#404040"/></linearGradient><linearGradient id="h82" gradientUnits="userSpaceOnUse" x1="0" y1="555.0" x2="0" y2="785.7"><stop offset="0.000" stop-color="#000000"/><stop offset="0.720" stop-color="#000000"/><stop offset="0.728" stop-color="#0d0d0d"/><stop offset="0.737" stop-color="#0d0d0d"/><stop offset="0.746" stop-color="#424242"/><stop offset="0.763" stop-color="#5c5c5c"/><stop offset="0.824" stop-color="#dbdbdb"/><stop offset="0.841" stop-color="#f2f2f2"/><stop offset="0.858" stop-color="#fcfcfc"/><stop offset="0.876" stop-color="#f7f7f7"/><stop offset="0.902" stop-color="#dedede"/><stop offset="0.997" stop-color="#414141"/></linearGradient><linearGradient id="h83" gradientUnits="userSpaceOnUse" x1="0" y1="555.0" x2="0" y2="785.7"><stop offset="0.000" stop-color="#000000"/><stop offset="0.711" stop-color="#000000"/><stop offset="0.720" stop-color="#0d0d0d"/><stop offset="0.728" stop-color="#0d0d0d"/><stop offset="0.737" stop-color="#424242"/><stop offset="0.754" stop-color="#4e4e4e"/><stop offset="0.824" stop-color="#dddddd"/><stop offset="0.841" stop-color="#f4f4f4"/><stop offset="0.858" stop-color="#fdfdfd"/><stop offset="0.876" stop-color="#f8f8f8"/><stop offset="0.902" stop-color="#dedede"/><stop offset="0.997" stop-color="#414141"/></linearGradient><linearGradient id="h84" gradientUnits="userSpaceOnUse" x1="0" y1="555.0" x2="0" y2="785.7"><stop offset="0.000" stop-color="#000000"/><stop offset="0.702" stop-color="#000000"/><stop offset="0.711" stop-color="#0d0d0d"/><stop offset="0.720" stop-color="#0d0d0d"/><stop offset="0.728" stop-color="#424242"/><stop offset="0.746" stop-color="#484848"/><stop offset="0.754" stop-color="#555555"/><stop offset="0.824" stop-color="#e1e1e1"/><stop offset="0.841" stop-color="#f6f6f6"/><stop offset="0.858" stop-color="#fdfdfd"/><stop offset="0.876" stop-color="#f7f7f7"/><stop offset="0.902" stop-color="#dddddd"/><stop offset="0.997" stop-color="#434343"/></linearGradient><linearGradient id="h85" gradientUnits="userSpaceOnUse" x1="0" y1="555.0" x2="0" y2="785.7"><stop offset="0.000" stop-color="#000000"/><stop offset="0.694" stop-color="#000000"/><stop offset="0.702" stop-color="#0d0d0d"/><stop offset="0.711" stop-color="#0d0d0d"/><stop offset="0.720" stop-color="#424242"/><stop offset="0.746" stop-color="#4c4c4c"/><stop offset="0.824" stop-color="#e5e5e5"/><stop offset="0.841" stop-color="#f8f8f8"/><stop offset="0.858" stop-color="#fdfdfd"/><stop offset="0.876" stop-color="#f7f7f7"/><stop offset="0.902" stop-color="#dcdcdc"/><stop offset="0.997" stop-color="#444444"/></linearGradient><linearGradient id="h86" gradientUnits="userSpaceOnUse" x1="0" y1="555.0" x2="0" y2="785.7"><stop offset="0.000" stop-color="#000000"/><stop offset="0.685" stop-color="#000000"/><stop offset="0.694" stop-color="#0d0d0d"/><stop offset="0.702" stop-color="#0d0d0d"/><stop offset="0.711" stop-color="#424242"/><stop offset="0.746" stop-color="#535353"/><stop offset="0.815" stop-color="#dbdbdb"/><stop offset="0.832" stop-color="#f2f2f2"/><stop offset="0.850" stop-color="#fdfdfd"/><stop offset="0.876" stop-color="#f6f6f6"/><stop offset="0.902" stop-color="#dcdcdc"/><stop offset="0.997" stop-color="#464646"/></linearGradient><linearGradient id="h87" gradientUnits="userSpaceOnUse" x1="0" y1="555.0" x2="0" y2="785.7"><stop offset="0.000" stop-color="#000000"/><stop offset="0.676" stop-color="#000000"/><stop offset="0.685" stop-color="#0d0d0d"/><stop offset="0.694" stop-color="#0d0d0d"/><stop offset="0.702" stop-color="#424242"/><stop offset="0.737" stop-color="#4e4e4e"/><stop offset="0.754" stop-color="#696969"/><stop offset="0.815" stop-color="#dfdfdf"/><stop offset="0.832" stop-color="#f4f4f4"/><stop offset="0.850" stop-color="#fefefe"/><stop offset="0.876" stop-color="#f6f6f6"/><stop offset="0.902" stop-color="#dbdbdb"/><stop offset="0.997" stop-color="#474747"/></linearGradient><linearGradient id="h88" gradientUnits="userSpaceOnUse" x1="0" y1="555.0" x2="0" y2="785.7"><stop offset="0.000" stop-color="#000000"/><stop offset="0.668" stop-color="#000000"/><stop offset="0.676" stop-color="#0d0d0d"/><stop offset="0.685" stop-color="#0d0d0d"/><stop offset="0.694" stop-color="#424242"/><stop offset="0.737" stop-color="#515151"/><stop offset="0.815" stop-color="#e3e3e3"/><stop offset="0.832" stop-color="#f6f6f6"/><stop offset="0.850" stop-color="#fefefe"/><stop offset="0.876" stop-color="#f5f5f5"/><stop offset="0.902" stop-color="#dadada"/><stop offset="0.997" stop-color="#484848"/></linearGradient><linearGradient id="h89" gradientUnits="userSpaceOnUse" x1="0" y1="555.0" x2="0" y2="785.7"><stop offset="0.000" stop-color="#000000"/><stop offset="0.659" stop-color="#000000"/><stop offset="0.668" stop-color="#0d0d0d"/><stop offset="0.676" stop-color="#0d0d0d"/><stop offset="0.685" stop-color="#424242"/><stop offset="0.737" stop-color="#575757"/><stop offset="0.806" stop-color="#d9d9d9"/><stop offset="0.832" stop-color="#f8f8f8"/><stop offset="0.850" stop-color="#fefefe"/><stop offset="0.876" stop-color="#f4f4f4"/><stop offset="0.902" stop-color="#dadada"/><stop offset="0.997" stop-color="#4a4a4a"/></linearGradient><linearGradient id="h90" gradientUnits="userSpaceOnUse" x1="0" y1="555.0" x2="0" y2="785.7"><stop offset="0.000" stop-color="#000000"/><stop offset="0.650" stop-color="#000000"/><stop offset="0.659" stop-color="#0d0d0d"/><stop offset="0.668" stop-color="#0d0d0d"/><stop offset="0.676" stop-color="#424242"/><stop offset="0.728" stop-color="#545454"/><stop offset="0.737" stop-color="#5d5d5d"/><stop offset="0.806" stop-color="#dddddd"/><stop offset="0.832" stop-color="#fafafa"/><stop offset="0.850" stop-color="#ffffff"/><stop offset="0.876" stop-color="#f4f4f4"/><stop offset="0.902" stop-color="#d9d9d9"/><stop offset="0.997" stop-color="#4b4b4b"/></linearGradient><linearGradient id="h91" gradientUnits="userSpaceOnUse" x1="0" y1="555.0" x2="0" y2="785.7"><stop offset="0.000" stop-color="#000000"/><stop offset="0.642" stop-color="#000000"/><stop offset="0.650" stop-color="#0c0c0c"/><stop offset="0.659" stop-color="#0d0d0d"/><stop offset="0.668" stop-color="#424242"/><stop offset="0.728" stop-color="#575757"/><stop offset="0.806" stop-color="#e1e1e1"/><stop offset="0.824" stop-color="#f5f5f5"/><stop offset="0.841" stop-color="#ffffff"/><stop offset="0.867" stop-color="#f9f9f9"/><stop offset="0.893" stop-color="#e3e3e3"/><stop offset="0.997" stop-color="#4c4c4c"/></linearGradient><linearGradient id="h92" gradientUnits="userSpaceOnUse" x1="0" y1="555.0" x2="0" y2="785.7"><stop offset="0.000" stop-color="#000000"/><stop offset="0.633" stop-color="#000000"/><stop offset="0.650" stop-color="#0d0d0d"/><stop offset="0.659" stop-color="#424242"/><stop offset="0.728" stop-color="#5c5c5c"/><stop offset="0.798" stop-color="#d9d9d9"/><stop offset="0.824" stop-color="#f8f8f8"/><stop offset="0.841" stop-color="#ffffff"/><stop offset="0.867" stop-color="#f8f8f8"/><stop offset="0.893" stop-color="#e0e0e0"/><stop offset="0.997" stop-color="#4b4b4b"/></linearGradient><linearGradient id="h93" gradientUnits="userSpaceOnUse" x1="0" y1="555.0" x2="0" y2="785.7"><stop offset="0.000" stop-color="#000000"/><stop offset="0.624" stop-color="#000000"/><stop offset="0.642" stop-color="#0d0d0d"/><stop offset="0.650" stop-color="#424242"/><stop offset="0.720" stop-color="#595959"/><stop offset="0.728" stop-color="#626262"/><stop offset="0.798" stop-color="#dedede"/><stop offset="0.824" stop-color="#fafafa"/><stop offset="0.841" stop-color="#ffffff"/><stop offset="0.867" stop-color="#f6f6f6"/><stop offset="0.893" stop-color="#dddddd"/><stop offset="0.997" stop-color="#494949"/></linearGradient><linearGradient id="h94" gradientUnits="userSpaceOnUse" x1="0" y1="555.0" x2="0" y2="785.7"><stop offset="0.000" stop-color="#000000"/><stop offset="0.607" stop-color="#000000"/><stop offset="0.624" stop-color="#090909"/><stop offset="0.633" stop-color="#424242"/><stop offset="0.720" stop-color="#5b5b5b"/><stop offset="0.789" stop-color="#d6d6d6"/><stop offset="0.815" stop-color="#f6f6f6"/><stop offset="0.832" stop-color="#ffffff"/><stop offset="0.858" stop-color="#fafafa"/><stop offset="0.884" stop-color="#e5e5e5"/><stop offset="0.997" stop-color="#484848"/></linearGradient><linearGradient id="h95" gradientUnits="userSpaceOnUse" x1="0" y1="555.0" x2="0" y2="785.7"><stop offset="0.000" stop-color="#000000"/><stop offset="0.607" stop-color="#000000"/><stop offset="0.624" stop-color="#0a0a0a"/><stop offset="0.633" stop-color="#424242"/><stop offset="0.720" stop-color="#616161"/><stop offset="0.789" stop-color="#dbdbdb"/><stop offset="0.815" stop-color="#f8f8f8"/><stop offset="0.832" stop-color="#ffffff"/><stop offset="0.858" stop-color="#f8f8f8"/><stop offset="0.884" stop-color="#e2e2e2"/><stop offset="0.997" stop-color="#474747"/></linearGradient><linearGradient id="h96" gradientUnits="userSpaceOnUse" x1="0" y1="555.0" x2="0" y2="785.7"><stop offset="0.000" stop-color="#000000"/><stop offset="0.598" stop-color="#000000"/><stop offset="0.616" stop-color="#090909"/><stop offset="0.624" stop-color="#424242"/><stop offset="0.711" stop-color="#5b5b5b"/><stop offset="0.789" stop-color="#e0e0e0"/><stop offset="0.815" stop-color="#fafafa"/><stop offset="0.832" stop-color="#ffffff"/><stop offset="0.858" stop-color="#f7f7f7"/><stop offset="0.884" stop-color="#e0e0e0"/><stop offset="0.997" stop-color="#454545"/></linearGradient><linearGradient id="h97" gradientUnits="userSpaceOnUse" x1="0" y1="555.0" x2="0" y2="785.7"><stop offset="0.000" stop-color="#000000"/><stop offset="0.590" stop-color="#000000"/><stop offset="0.607" stop-color="#080808"/><stop offset="0.616" stop-color="#424242"/><stop offset="0.711" stop-color="#606060"/><stop offset="0.780" stop-color="#d8d8d8"/><stop offset="0.806" stop-color="#f6f6f6"/><stop offset="0.824" stop-color="#fefefe"/><stop offset="0.850" stop-color="#fafafa"/><stop offset="0.876" stop-color="#e6e6e6"/><stop offset="0.997" stop-color="#444444"/></linearGradient><linearGradient id="h98" gradientUnits="userSpaceOnUse" x1="0" y1="555.0" x2="0" y2="785.7"><stop offset="0.000" stop-color="#000000"/><stop offset="0.581" stop-color="#000000"/><stop offset="0.598" stop-color="#070707"/><stop offset="0.607" stop-color="#424242"/><stop offset="0.702" stop-color="#5c5c5c"/><stop offset="0.780" stop-color="#dddddd"/><stop offset="0.806" stop-color="#f8f8f8"/><stop offset="0.824" stop-color="#ffffff"/><stop offset="0.850" stop-color="#f9f9f9"/><stop offset="0.876" stop-color="#e4e4e4"/><stop offset="0.962" stop-color="#6d6d6d"/><stop offset="0.971" stop-color="#6b6b6b"/><stop offset="0.980" stop-color="#575757"/><stop offset="0.997" stop-color="#434343"/></linearGradient><linearGradient id="h99" gradientUnits="userSpaceOnUse" x1="0" y1="555.0" x2="0" y2="785.7"><stop offset="0.000" stop-color="#000000"/><stop offset="0.581" stop-color="#000000"/><stop offset="0.598" stop-color="#080808"/><stop offset="0.607" stop-color="#424242"/><stop offset="0.702" stop-color="#5f5f5f"/><stop offset="0.780" stop-color="#e1e1e1"/><stop offset="0.806" stop-color="#fafafa"/><stop offset="0.824" stop-color="#ffffff"/><stop offset="0.850" stop-color="#f7f7f7"/><stop offset="0.876" stop-color="#e1e1e1"/><stop offset="0.962" stop-color="#6b6b6b"/><stop offset="0.971" stop-color="#696969"/><stop offset="0.980" stop-color="#555555"/><stop offset="0.997" stop-color="#424242"/></linearGradient><linearGradient id="h100" gradientUnits="userSpaceOnUse" x1="0" y1="555.0" x2="0" y2="785.7"><stop offset="0.000" stop-color="#000000"/><stop offset="0.572" stop-color="#000000"/><stop offset="0.590" stop-color="#070707"/><stop offset="0.598" stop-color="#424242"/><stop offset="0.694" stop-color="#5c5c5c"/><stop offset="0.702" stop-color="#656565"/><stop offset="0.772" stop-color="#d9d9d9"/><stop offset="0.798" stop-color="#f6f6f6"/><stop offset="0.815" stop-color="#fefefe"/><stop offset="0.841" stop-color="#fafafa"/><stop offset="0.876" stop-color="#dfdfdf"/><stop offset="0.954" stop-color="#757575"/><stop offset="0.971" stop-color="#686868"/><stop offset="0.980" stop-color="#545454"/><stop offset="0.997" stop-color="#414141"/></linearGradient><linearGradient id="h101" gradientUnits="userSpaceOnUse" x1="0" y1="555.0" x2="0" y2="785.7"><stop offset="0.000" stop-color="#000000"/><stop offset="0.581" stop-color="#000000"/><stop offset="0.598" stop-color="#090909"/><stop offset="0.607" stop-color="#424242"/><stop offset="0.702" stop-color="#616161"/><stop offset="0.780" stop-color="#e2e2e2"/><stop offset="0.806" stop-color="#fbfbfb"/><stop offset="0.824" stop-color="#ffffff"/><stop offset="0.850" stop-color="#f7f7f7"/><stop offset="0.876" stop-color="#e1e1e1"/><stop offset="0.962" stop-color="#6b6b6b"/><stop offset="0.971" stop-color="#696969"/><stop offset="0.980" stop-color="#555555"/><stop offset="0.997" stop-color="#424242"/></linearGradient><linearGradient id="h102" gradientUnits="userSpaceOnUse" x1="0" y1="555.0" x2="0" y2="785.7"><stop offset="0.000" stop-color="#000000"/><stop offset="0.590" stop-color="#000000"/><stop offset="0.607" stop-color="#0b0b0b"/><stop offset="0.616" stop-color="#424242"/><stop offset="0.702" stop-color="#5e5e5e"/><stop offset="0.780" stop-color="#e0e0e0"/><stop offset="0.806" stop-color="#fafafa"/><stop offset="0.824" stop-color="#ffffff"/><stop offset="0.850" stop-color="#f8f8f8"/><stop offset="0.876" stop-color="#e2e2e2"/><stop offset="0.962" stop-color="#6c6c6c"/><stop offset="0.971" stop-color="#6a6a6a"/><stop offset="0.980" stop-color="#565656"/><stop offset="0.997" stop-color="#424242"/></linearGradient><linearGradient id="h103" gradientUnits="userSpaceOnUse" x1="0" y1="555.0" x2="0" y2="785.7"><stop offset="0.000" stop-color="#000000"/><stop offset="0.598" stop-color="#000000"/><stop offset="0.616" stop-color="#0d0d0d"/><stop offset="0.624" stop-color="#424242"/><stop offset="0.702" stop-color="#5a5a5a"/><stop offset="0.780" stop-color="#dddddd"/><stop offset="0.806" stop-color="#f8f8f8"/><stop offset="0.824" stop-color="#ffffff"/><stop offset="0.850" stop-color="#f9f9f9"/><stop offset="0.876" stop-color="#e4e4e4"/><stop offset="0.962" stop-color="#6d6d6d"/><stop offset="0.971" stop-color="#6b6b6b"/><stop offset="0.980" stop-color="#575757"/><stop offset="0.997" stop-color="#434343"/></linearGradient><linearGradient id="h104" gradientUnits="userSpaceOnUse" x1="0" y1="555.0" x2="0" y2="785.7"><stop offset="0.000" stop-color="#000000"/><stop offset="0.607" stop-color="#000000"/><stop offset="0.616" stop-color="#0c0c0c"/><stop offset="0.624" stop-color="#0d0d0d"/><stop offset="0.633" stop-color="#424242"/><stop offset="0.702" stop-color="#585858"/><stop offset="0.780" stop-color="#dbdbdb"/><stop offset="0.806" stop-color="#f7f7f7"/><stop offset="0.824" stop-color="#ffffff"/><stop offset="0.850" stop-color="#f9f9f9"/><stop offset="0.876" stop-color="#e5e5e5"/><stop offset="0.997" stop-color="#444444"/></linearGradient><linearGradient id="h105" gradientUnits="userSpaceOnUse" x1="0" y1="555.0" x2="0" y2="785.7"><stop offset="0.000" stop-color="#000000"/><stop offset="0.616" stop-color="#000000"/><stop offset="0.624" stop-color="#0d0d0d"/><stop offset="0.633" stop-color="#0d0d0d"/><stop offset="0.642" stop-color="#424242"/><stop offset="0.702" stop-color="#565656"/><stop offset="0.780" stop-color="#d8d8d8"/><stop offset="0.806" stop-color="#f6f6f6"/><stop offset="0.824" stop-color="#fefefe"/><stop offset="0.850" stop-color="#fafafa"/><stop offset="0.884" stop-color="#dedede"/><stop offset="0.997" stop-color="#454545"/></linearGradient><linearGradient id="h106" gradientUnits="userSpaceOnUse" x1="0" y1="555.0" x2="0" y2="785.7"><stop offset="0.000" stop-color="#000000"/><stop offset="0.624" stop-color="#000000"/><stop offset="0.633" stop-color="#0d0d0d"/><stop offset="0.642" stop-color="#0d0d0d"/><stop offset="0.650" stop-color="#424242"/><stop offset="0.702" stop-color="#545454"/><stop offset="0.711" stop-color="#5d5d5d"/><stop offset="0.789" stop-color="#e1e1e1"/><stop offset="0.815" stop-color="#fafafa"/><stop offset="0.832" stop-color="#ffffff"/><stop offset="0.858" stop-color="#f6f6f6"/><stop offset="0.884" stop-color="#dfdfdf"/><stop offset="0.997" stop-color="#464646"/></linearGradient><linearGradient id="h107" gradientUnits="userSpaceOnUse" x1="0" y1="555.0" x2="0" y2="785.7"><stop offset="0.000" stop-color="#000000"/><stop offset="0.624" stop-color="#000000"/><stop offset="0.633" stop-color="#0d0d0d"/><stop offset="0.642" stop-color="#0d0d0d"/><stop offset="0.650" stop-color="#424242"/><stop offset="0.711" stop-color="#595959"/><stop offset="0.789" stop-color="#dedede"/><stop offset="0.815" stop-color="#f9f9f9"/><stop offset="0.832" stop-color="#ffffff"/><stop offset="0.858" stop-color="#f7f7f7"/><stop offset="0.884" stop-color="#e1e1e1"/><stop offset="0.997" stop-color="#474747"/></linearGradient><linearGradient id="h108" gradientUnits="userSpaceOnUse" x1="0" y1="555.0" x2="0" y2="785.7"><stop offset="0.000" stop-color="#000000"/><stop offset="0.633" stop-color="#000000"/><stop offset="0.642" stop-color="#0d0d0d"/><stop offset="0.650" stop-color="#0d0d0d"/><stop offset="0.659" stop-color="#424242"/><stop offset="0.711" stop-color="#555555"/><stop offset="0.789" stop-color="#dcdcdc"/><stop offset="0.815" stop-color="#f8f8f8"/><stop offset="0.832" stop-color="#ffffff"/><stop offset="0.858" stop-color="#f8f8f8"/><stop offset="0.884" stop-color="#e3e3e3"/><stop offset="0.997" stop-color="#484848"/></linearGradient><linearGradient id="h109" gradientUnits="userSpaceOnUse" x1="0" y1="555.0" x2="0" y2="785.7"><stop offset="0.000" stop-color="#000000"/><stop offset="0.642" stop-color="#000000"/><stop offset="0.650" stop-color="#0d0d0d"/><stop offset="0.659" stop-color="#0d0d0d"/><stop offset="0.668" stop-color="#424242"/><stop offset="0.711" stop-color="#525252"/><stop offset="0.789" stop-color="#d9d9d9"/><stop offset="0.815" stop-color="#f7f7f7"/><stop offset="0.832" stop-color="#ffffff"/><stop offset="0.858" stop-color="#f9f9f9"/><stop offset="0.884" stop-color="#e4e4e4"/><stop offset="0.997" stop-color="#494949"/></linearGradient><linearGradient id="h110" gradientUnits="userSpaceOnUse" x1="0" y1="555.0" x2="0" y2="785.7"><stop offset="0.000" stop-color="#000000"/><stop offset="0.642" stop-color="#000000"/><stop offset="0.650" stop-color="#0d0d0d"/><stop offset="0.659" stop-color="#0d0d0d"/><stop offset="0.668" stop-color="#424242"/><stop offset="0.711" stop-color="#505050"/><stop offset="0.789" stop-color="#d7d7d7"/><stop offset="0.815" stop-color="#f6f6f6"/><stop offset="0.832" stop-color="#ffffff"/><stop offset="0.858" stop-color="#fafafa"/><stop offset="0.884" stop-color="#e5e5e5"/><stop offset="0.997" stop-color="#494949"/></linearGradient><linearGradient id="h111" gradientUnits="userSpaceOnUse" x1="0" y1="555.0" x2="0" y2="785.7"><stop offset="0.000" stop-color="#000000"/><stop offset="0.650" stop-color="#000000"/><stop offset="0.659" stop-color="#0d0d0d"/><stop offset="0.668" stop-color="#0d0d0d"/><stop offset="0.676" stop-color="#424242"/><stop offset="0.711" stop-color="#4f4f4f"/><stop offset="0.798" stop-color="#e2e2e2"/><stop offset="0.815" stop-color="#f5f5f5"/><stop offset="0.832" stop-color="#fefefe"/><stop offset="0.858" stop-color="#fafafa"/><stop offset="0.884" stop-color="#e6e6e6"/><stop offset="0.997" stop-color="#494949"/></linearGradient><linearGradient id="h112" gradientUnits="userSpaceOnUse" x1="0" y1="555.0" x2="0" y2="785.7"><stop offset="0.000" stop-color="#000000"/><stop offset="0.650" stop-color="#000000"/><stop offset="0.659" stop-color="#0d0d0d"/><stop offset="0.668" stop-color="#0d0d0d"/><stop offset="0.676" stop-color="#424242"/><stop offset="0.711" stop-color="#4d4d4d"/><stop offset="0.728" stop-color="#656565"/><stop offset="0.798" stop-color="#e0e0e0"/><stop offset="0.824" stop-color="#fafafa"/><stop offset="0.841" stop-color="#ffffff"/><stop offset="0.867" stop-color="#f5f5f5"/><stop offset="0.893" stop-color="#dddddd"/><stop offset="0.997" stop-color="#494949"/></linearGradient><linearGradient id="h113" gradientUnits="userSpaceOnUse" x1="0" y1="555.0" x2="0" y2="785.7"><stop offset="0.000" stop-color="#000000"/><stop offset="0.659" stop-color="#000000"/><stop offset="0.668" stop-color="#0d0d0d"/><stop offset="0.676" stop-color="#0d0d0d"/><stop offset="0.685" stop-color="#424242"/><stop offset="0.720" stop-color="#545454"/><stop offset="0.798" stop-color="#dedede"/><stop offset="0.824" stop-color="#fafafa"/><stop offset="0.841" stop-color="#ffffff"/><stop offset="0.867" stop-color="#f6f6f6"/><stop offset="0.893" stop-color="#dedede"/><stop offset="0.997" stop-color="#4a4a4a"/></linearGradient><linearGradient id="h114" gradientUnits="userSpaceOnUse" x1="0" y1="555.0" x2="0" y2="785.7"><stop offset="0.000" stop-color="#000000"/><stop offset="0.659" stop-color="#000000"/><stop offset="0.668" stop-color="#0d0d0d"/><stop offset="0.676" stop-color="#0d0d0d"/><stop offset="0.685" stop-color="#424242"/><stop offset="0.720" stop-color="#515151"/><stop offset="0.798" stop-color="#dcdcdc"/><stop offset="0.824" stop-color="#f9f9f9"/><stop offset="0.841" stop-color="#ffffff"/><stop offset="0.867" stop-color="#f7f7f7"/><stop offset="0.893" stop-color="#dedede"/><stop offset="0.997" stop-color="#4a4a4a"/></linearGradient><linearGradient id="h115" gradientUnits="userSpaceOnUse" x1="0" y1="555.0" x2="0" y2="785.7"><stop offset="0.000" stop-color="#000000"/><stop offset="0.668" stop-color="#000000"/><stop offset="0.676" stop-color="#0d0d0d"/><stop offset="0.685" stop-color="#0d0d0d"/><stop offset="0.694" stop-color="#424242"/><stop offset="0.720" stop-color="#4f4f4f"/><stop offset="0.798" stop-color="#dadada"/><stop offset="0.824" stop-color="#f8f8f8"/><stop offset="0.841" stop-color="#ffffff"/><stop offset="0.867" stop-color="#f7f7f7"/><stop offset="0.893" stop-color="#dfdfdf"/><stop offset="0.997" stop-color="#4a4a4a"/></linearGradient><linearGradient id="h116" gradientUnits="userSpaceOnUse" x1="0" y1="555.0" x2="0" y2="785.7"><stop offset="0.000" stop-color="#000000"/><stop offset="0.668" stop-color="#000000"/><stop offset="0.676" stop-color="#0d0d0d"/><stop offset="0.685" stop-color="#0d0d0d"/><stop offset="0.694" stop-color="#424242"/><stop offset="0.720" stop-color="#4c4c4c"/><stop offset="0.798" stop-color="#d8d8d8"/><stop offset="0.824" stop-color="#f7f7f7"/><stop offset="0.841" stop-color="#ffffff"/><stop offset="0.867" stop-color="#f8f8f8"/><stop offset="0.893" stop-color="#e0e0e0"/><stop offset="0.997" stop-color="#4a4a4a"/></linearGradient><linearGradient id="h117" gradientUnits="userSpaceOnUse" x1="0" y1="555.0" x2="0" y2="785.7"><stop offset="0.000" stop-color="#000000"/><stop offset="0.668" stop-color="#000000"/><stop offset="0.676" stop-color="#0d0d0d"/><stop offset="0.685" stop-color="#0d0d0d"/><stop offset="0.694" stop-color="#424242"/><stop offset="0.720" stop-color="#4a4a4a"/><stop offset="0.806" stop-color="#e3e3e3"/><stop offset="0.824" stop-color="#f6f6f6"/><stop offset="0.841" stop-color="#ffffff"/><stop offset="0.867" stop-color="#f8f8f8"/><stop offset="0.893" stop-color="#e1e1e1"/><stop offset="0.997" stop-color="#4a4a4a"/></linearGradient><linearGradient id="h118" gradientUnits="userSpaceOnUse" x1="0" y1="555.0" x2="0" y2="785.7"><stop offset="0.000" stop-color="#000000"/><stop offset="0.676" stop-color="#000000"/><stop offset="0.685" stop-color="#0d0d0d"/><stop offset="0.694" stop-color="#0d0d0d"/><stop offset="0.702" stop-color="#424242"/><stop offset="0.720" stop-color="#494949"/><stop offset="0.728" stop-color="#545454"/><stop offset="0.806" stop-color="#e1e1e1"/><stop offset="0.824" stop-color="#f5f5f5"/><stop offset="0.841" stop-color="#ffffff"/><stop offset="0.867" stop-color="#f9f9f9"/><stop offset="0.893" stop-color="#e2e2e2"/><stop offset="0.997" stop-color="#4a4a4a"/></linearGradient><linearGradient id="h119" gradientUnits="userSpaceOnUse" x1="0" y1="555.0" x2="0" y2="785.7"><stop offset="0.000" stop-color="#000000"/><stop offset="0.676" stop-color="#000000"/><stop offset="0.685" stop-color="#0d0d0d"/><stop offset="0.694" stop-color="#0d0d0d"/><stop offset="0.702" stop-color="#424242"/><stop offset="0.728" stop-color="#515151"/><stop offset="0.806" stop-color="#dfdfdf"/><stop offset="0.824" stop-color="#f4f4f4"/><stop offset="0.841" stop-color="#fefefe"/><stop offset="0.867" stop-color="#f9f9f9"/><stop offset="0.893" stop-color="#e3e3e3"/><stop offset="0.997" stop-color="#4a4a4a"/></linearGradient><linearGradient id="h120" gradientUnits="userSpaceOnUse" x1="0" y1="555.0" x2="0" y2="785.7"><stop offset="0.000" stop-color="#000000"/><stop offset="0.676" stop-color="#000000"/><stop offset="0.685" stop-color="#0d0d0d"/><stop offset="0.694" stop-color="#0d0d0d"/><stop offset="0.702" stop-color="#424242"/><stop offset="0.728" stop-color="#4e4e4e"/><stop offset="0.806" stop-color="#dddddd"/><stop offset="0.832" stop-color="#fafafa"/><stop offset="0.850" stop-color="#ffffff"/><stop offset="0.876" stop-color="#f4f4f4"/><stop offset="0.902" stop-color="#d9d9d9"/><stop offset="0.997" stop-color="#4a4a4a"/></linearGradient><linearGradient id="h121" gradientUnits="userSpaceOnUse" x1="0" y1="555.0" x2="0" y2="785.7"><stop offset="0.000" stop-color="#000000"/><stop offset="0.676" stop-color="#000000"/><stop offset="0.685" stop-color="#0d0d0d"/><stop offset="0.694" stop-color="#0d0d0d"/><stop offset="0.702" stop-color="#424242"/><stop offset="0.728" stop-color="#4b4b4b"/><stop offset="0.806" stop-color="#dbdbdb"/><stop offset="0.832" stop-color="#f9f9f9"/><stop offset="0.850" stop-color="#ffffff"/><stop offset="0.876" stop-color="#f5f5f5"/><stop offset="0.902" stop-color="#dadada"/><stop offset="0.997" stop-color="#4a4a4a"/></linearGradient><linearGradient id="h122" gradientUnits="userSpaceOnUse" x1="0" y1="555.0" x2="0" y2="785.7"><stop offset="0.000" stop-color="#000000"/><stop offset="0.676" stop-color="#000000"/><stop offset="0.685" stop-color="#0d0d0d"/><stop offset="0.694" stop-color="#0d0d0d"/><stop offset="0.702" stop-color="#424242"/><stop offset="0.728" stop-color="#4b4b4b"/><stop offset="0.746" stop-color="#656565"/><stop offset="0.815" stop-color="#e6e6e6"/><stop offset="0.832" stop-color="#f8f8f8"/><stop offset="0.850" stop-color="#ffffff"/><stop offset="0.876" stop-color="#f5f5f5"/><stop offset="0.902" stop-color="#dbdbdb"/><stop offset="0.997" stop-color="#4a4a4a"/></linearGradient><linearGradient id="h123" gradientUnits="userSpaceOnUse" x1="0" y1="555.0" x2="0" y2="785.7"><stop offset="0.000" stop-color="#000000"/><stop offset="0.676" stop-color="#000000"/><stop offset="0.685" stop-color="#0d0d0d"/><stop offset="0.694" stop-color="#0d0d0d"/><stop offset="0.702" stop-color="#424242"/><stop offset="0.728" stop-color="#4a4a4a"/><stop offset="0.737" stop-color="#535353"/><stop offset="0.815" stop-color="#e4e4e4"/><stop offset="0.832" stop-color="#f8f8f8"/><stop offset="0.850" stop-color="#ffffff"/><stop offset="0.876" stop-color="#f6f6f6"/><stop offset="0.902" stop-color="#dcdcdc"/><stop offset="0.997" stop-color="#4a4a4a"/></linearGradient><linearGradient id="h124" gradientUnits="userSpaceOnUse" x1="0" y1="555.0" x2="0" y2="785.7"><stop offset="0.000" stop-color="#000000"/><stop offset="0.685" stop-color="#000000"/><stop offset="0.694" stop-color="#0d0d0d"/><stop offset="0.702" stop-color="#0d0d0d"/><stop offset="0.711" stop-color="#424242"/><stop offset="0.737" stop-color="#505050"/><stop offset="0.815" stop-color="#e2e2e2"/><stop offset="0.832" stop-color="#f7f7f7"/><stop offset="0.850" stop-color="#ffffff"/><stop offset="0.876" stop-color="#f7f7f7"/><stop offset="0.902" stop-color="#dddddd"/><stop offset="0.997" stop-color="#4b4b4b"/></linearGradient><linearGradient id="h125" gradientUnits="userSpaceOnUse" x1="0" y1="555.0" x2="0" y2="785.7"><stop offset="0.000" stop-color="#000000"/><stop offset="0.676" stop-color="#000000"/><stop offset="0.685" stop-color="#0d0d0d"/><stop offset="0.702" stop-color="#0d0d0d"/><stop offset="0.711" stop-color="#424242"/><stop offset="0.737" stop-color="#4e4e4e"/><stop offset="0.815" stop-color="#e1e1e1"/><stop offset="0.832" stop-color="#f6f6f6"/><stop offset="0.850" stop-color="#ffffff"/><stop offset="0.876" stop-color="#f7f7f7"/><stop offset="0.902" stop-color="#dedede"/><stop offset="0.997" stop-color="#4b4b4b"/></linearGradient><linearGradient id="h126" gradientUnits="userSpaceOnUse" x1="0" y1="555.0" x2="0" y2="785.7"><stop offset="0.000" stop-color="#000000"/><stop offset="0.676" stop-color="#000000"/><stop offset="0.685" stop-color="#0d0d0d"/><stop offset="0.702" stop-color="#0d0d0d"/><stop offset="0.711" stop-color="#424242"/><stop offset="0.737" stop-color="#4d4d4d"/><stop offset="0.815" stop-color="#dfdfdf"/><stop offset="0.832" stop-color="#f5f5f5"/><stop offset="0.850" stop-color="#ffffff"/><stop offset="0.876" stop-color="#f8f8f8"/><stop offset="0.902" stop-color="#dfdfdf"/><stop offset="0.997" stop-color="#4c4c4c"/></linearGradient><linearGradient id="h127" gradientUnits="userSpaceOnUse" x1="0" y1="555.0" x2="0" y2="785.7"><stop offset="0.000" stop-color="#000000"/><stop offset="0.676" stop-color="#000000"/><stop offset="0.685" stop-color="#0d0d0d"/><stop offset="0.702" stop-color="#0d0d0d"/><stop offset="0.711" stop-color="#424242"/><stop offset="0.737" stop-color="#4d4d4d"/><stop offset="0.746" stop-color="#585858"/><stop offset="0.815" stop-color="#dedede"/><stop offset="0.832" stop-color="#f4f4f4"/><stop offset="0.850" stop-color="#fefefe"/><stop offset="0.876" stop-color="#f8f8f8"/><stop offset="0.902" stop-color="#dfdfdf"/><stop offset="0.997" stop-color="#4c4c4c"/></linearGradient><linearGradient id="h128" gradientUnits="userSpaceOnUse" x1="0" y1="555.0" x2="0" y2="785.7"><stop offset="0.000" stop-color="#000000"/><stop offset="0.642" stop-color="#000000"/><stop offset="0.676" stop-color="#0d0d0d"/><stop offset="0.702" stop-color="#0d0d0d"/><stop offset="0.711" stop-color="#424242"/><stop offset="0.737" stop-color="#4d4d4d"/><stop offset="0.746" stop-color="#565656"/><stop offset="0.815" stop-color="#dcdcdc"/><stop offset="0.832" stop-color="#f3f3f3"/><stop offset="0.850" stop-color="#fefefe"/><stop offset="0.876" stop-color="#f9f9f9"/><stop offset="0.902" stop-color="#e0e0e0"/><stop offset="0.997" stop-color="#4d4d4d"/></linearGradient><linearGradient id="h129" gradientUnits="userSpaceOnUse" x1="0" y1="555.0" x2="0" y2="785.7"><stop offset="0.000" stop-color="#000000"/><stop offset="0.668" stop-color="#000000"/><stop offset="0.676" stop-color="#0d0d0d"/><stop offset="0.702" stop-color="#0d0d0d"/><stop offset="0.711" stop-color="#424242"/><stop offset="0.746" stop-color="#545454"/><stop offset="0.815" stop-color="#dadada"/><stop offset="0.841" stop-color="#fafafa"/><stop offset="0.858" stop-color="#ffffff"/><stop offset="0.876" stop-color="#f9f9f9"/><stop offset="0.902" stop-color="#e1e1e1"/><stop offset="0.997" stop-color="#4d4d4d"/></linearGradient><linearGradient id="h130" gradientUnits="userSpaceOnUse" x1="0" y1="555.0" x2="0" y2="785.7"><stop offset="0.000" stop-color="#000000"/><stop offset="0.676" stop-color="#000000"/><stop offset="0.685" stop-color="#0d0d0d"/><stop offset="0.702" stop-color="#0d0d0d"/><stop offset="0.711" stop-color="#424242"/><stop offset="0.746" stop-color="#525252"/><stop offset="0.824" stop-color="#e6e6e6"/><stop offset="0.841" stop-color="#f9f9f9"/><stop offset="0.858" stop-color="#ffffff"/><stop offset="0.876" stop-color="#fafafa"/><stop offset="0.902" stop-color="#e2e2e2"/><stop offset="0.997" stop-color="#4e4e4e"/></linearGradient><linearGradient id="h131" gradientUnits="userSpaceOnUse" x1="0" y1="555.0" x2="0" y2="785.7"><stop offset="0.000" stop-color="#000000"/><stop offset="0.676" stop-color="#000000"/><stop offset="0.685" stop-color="#0d0d0d"/><stop offset="0.702" stop-color="#0d0d0d"/><stop offset="0.711" stop-color="#424242"/><stop offset="0.746" stop-color="#505050"/><stop offset="0.824" stop-color="#e4e4e4"/><stop offset="0.841" stop-color="#f8f8f8"/><stop offset="0.858" stop-color="#ffffff"/><stop offset="0.876" stop-color="#fafafa"/><stop offset="0.902" stop-color="#e3e3e3"/><stop offset="0.997" stop-color="#4e4e4e"/></linearGradient><linearGradient id="h132" gradientUnits="userSpaceOnUse" x1="0" y1="555.0" x2="0" y2="785.7"><stop offset="0.000" stop-color="#000000"/><stop offset="0.685" stop-color="#000000"/><stop offset="0.694" stop-color="#0d0d0d"/><stop offset="0.702" stop-color="#0d0d0d"/><stop offset="0.711" stop-color="#424242"/><stop offset="0.746" stop-color="#4f4f4f"/><stop offset="0.824" stop-color="#e3e3e3"/><stop offset="0.841" stop-color="#f7f7f7"/><stop offset="0.858" stop-color="#ffffff"/><stop offset="0.876" stop-color="#fbfbfb"/><stop offset="0.902" stop-color="#e4e4e4"/><stop offset="0.997" stop-color="#4f4f4f"/></linearGradient><linearGradient id="h133" gradientUnits="userSpaceOnUse" x1="0" y1="555.0" x2="0" y2="785.7"><stop offset="0.000" stop-color="#000000"/><stop offset="0.685" stop-color="#000000"/><stop offset="0.694" stop-color="#0d0d0d"/><stop offset="0.702" stop-color="#0d0d0d"/><stop offset="0.711" stop-color="#424242"/><stop offset="0.746" stop-color="#4f4f4f"/><stop offset="0.754" stop-color="#5a5a5a"/><stop offset="0.824" stop-color="#e1e1e1"/><stop offset="0.841" stop-color="#f7f7f7"/><stop offset="0.858" stop-color="#ffffff"/><stop offset="0.876" stop-color="#fbfbfb"/><stop offset="0.902" stop-color="#e5e5e5"/><stop offset="0.997" stop-color="#505050"/></linearGradient><linearGradient id="h134" gradientUnits="userSpaceOnUse" x1="0" y1="555.0" x2="0" y2="785.7"><stop offset="0.000" stop-color="#000000"/><stop offset="0.685" stop-color="#000000"/><stop offset="0.694" stop-color="#0d0d0d"/><stop offset="0.702" stop-color="#0d0d0d"/><stop offset="0.711" stop-color="#424242"/><stop offset="0.746" stop-color="#4e4e4e"/><stop offset="0.754" stop-color="#585858"/><stop offset="0.824" stop-color="#e0e0e0"/><stop offset="0.841" stop-color="#f6f6f6"/><stop offset="0.858" stop-color="#ffffff"/><stop offset="0.876" stop-color="#fcfcfc"/><stop offset="0.902" stop-color="#e6e6e6"/><stop offset="0.997" stop-color="#505050"/></linearGradient><linearGradient id="h135" gradientUnits="userSpaceOnUse" x1="0" y1="555.0" x2="0" y2="785.7"><stop offset="0.000" stop-color="#000000"/><stop offset="0.694" stop-color="#000000"/><stop offset="0.702" stop-color="#0d0d0d"/><stop offset="0.711" stop-color="#0d0d0d"/><stop offset="0.720" stop-color="#424242"/><stop offset="0.746" stop-color="#4c4c4c"/><stop offset="0.754" stop-color="#565656"/><stop offset="0.824" stop-color="#dedede"/><stop offset="0.841" stop-color="#f5f5f5"/><stop offset="0.858" stop-color="#ffffff"/><stop offset="0.884" stop-color="#f7f7f7"/><stop offset="0.910" stop-color="#dcdcdc"/><stop offset="0.997" stop-color="#515151"/></linearGradient><linearGradient id="h136" gradientUnits="userSpaceOnUse" x1="0" y1="555.0" x2="0" y2="785.7"><stop offset="0.000" stop-color="#000000"/><stop offset="0.694" stop-color="#000000"/><stop offset="0.702" stop-color="#0d0d0d"/><stop offset="0.711" stop-color="#0d0d0d"/><stop offset="0.720" stop-color="#424242"/><stop offset="0.754" stop-color="#535353"/><stop offset="0.824" stop-color="#dcdcdc"/><stop offset="0.841" stop-color="#f4f4f4"/><stop offset="0.858" stop-color="#ffffff"/><stop offset="0.884" stop-color="#f8f8f8"/><stop offset="0.910" stop-color="#dddddd"/><stop offset="0.997" stop-color="#515151"/></linearGradient><linearGradient id="h137" gradientUnits="userSpaceOnUse" x1="0" y1="555.0" x2="0" y2="785.7"><stop offset="0.000" stop-color="#000000"/><stop offset="0.702" stop-color="#000000"/><stop offset="0.711" stop-color="#0d0d0d"/><stop offset="0.720" stop-color="#0d0d0d"/><stop offset="0.728" stop-color="#424242"/><stop offset="0.754" stop-color="#515151"/><stop offset="0.824" stop-color="#dbdbdb"/><stop offset="0.841" stop-color="#f3f3f3"/><stop offset="0.858" stop-color="#fefefe"/><stop offset="0.884" stop-color="#f8f8f8"/><stop offset="0.910" stop-color="#dedede"/><stop offset="0.997" stop-color="#525252"/></linearGradient><linearGradient id="h138" gradientUnits="userSpaceOnUse" x1="0" y1="555.0" x2="0" y2="785.7"><stop offset="0.000" stop-color="#000000"/><stop offset="0.702" stop-color="#000000"/><stop offset="0.711" stop-color="#0d0d0d"/><stop offset="0.720" stop-color="#0d0d0d"/><stop offset="0.728" stop-color="#424242"/><stop offset="0.754" stop-color="#4f4f4f"/><stop offset="0.832" stop-color="#e7e7e7"/><stop offset="0.850" stop-color="#fafafa"/><stop offset="0.867" stop-color="#ffffff"/><stop offset="0.884" stop-color="#f9f9f9"/><stop offset="0.910" stop-color="#dfdfdf"/><stop offset="0.997" stop-color="#535353"/></linearGradient><linearGradient id="h139" gradientUnits="userSpaceOnUse" x1="0" y1="555.0" x2="0" y2="785.7"><stop offset="0.000" stop-color="#000000"/><stop offset="0.711" stop-color="#000000"/><stop offset="0.720" stop-color="#0d0d0d"/><stop offset="0.728" stop-color="#0d0d0d"/><stop offset="0.737" stop-color="#424242"/><stop offset="0.754" stop-color="#4d4d4d"/><stop offset="0.824" stop-color="#d7d7d7"/><stop offset="0.850" stop-color="#f9f9f9"/><stop offset="0.867" stop-color="#ffffff"/><stop offset="0.884" stop-color="#f9f9f9"/><stop offset="0.910" stop-color="#e0e0e0"/><stop offset="0.997" stop-color="#535353"/></linearGradient><linearGradient id="h140" gradientUnits="userSpaceOnUse" x1="0" y1="555.0" x2="0" y2="785.7"><stop offset="0.000" stop-color="#000000"/><stop offset="0.711" stop-color="#000000"/><stop offset="0.720" stop-color="#0d0d0d"/><stop offset="0.728" stop-color="#0d0d0d"/><stop offset="0.737" stop-color="#424242"/><stop offset="0.754" stop-color="#4e4e4e"/><stop offset="0.824" stop-color="#d8d8d8"/><stop offset="0.850" stop-color="#f9f9f9"/><stop offset="0.867" stop-color="#ffffff"/><stop offset="0.884" stop-color="#f9f9f9"/><stop offset="0.910" stop-color="#dfdfdf"/><stop offset="0.997" stop-color="#525252"/></linearGradient><linearGradient id="h141" gradientUnits="userSpaceOnUse" x1="0" y1="555.0" x2="0" y2="785.7"><stop offset="0.000" stop-color="#000000"/><stop offset="0.702" stop-color="#000000"/><stop offset="0.711" stop-color="#0d0d0d"/><stop offset="0.720" stop-color="#0d0d0d"/><stop offset="0.728" stop-color="#424242"/><stop offset="0.754" stop-color="#4f4f4f"/><stop offset="0.832" stop-color="#e7e7e7"/><stop offset="0.850" stop-color="#fafafa"/><stop offset="0.867" stop-color="#ffffff"/><stop offset="0.884" stop-color="#f8f8f8"/><stop offset="0.910" stop-color="#dedede"/><stop offset="0.997" stop-color="#525252"/></linearGradient><linearGradient id="h142" gradientUnits="userSpaceOnUse" x1="0" y1="555.0" x2="0" y2="785.7"><stop offset="0.000" stop-color="#000000"/><stop offset="0.702" stop-color="#000000"/><stop offset="0.711" stop-color="#0d0d0d"/><stop offset="0.720" stop-color="#0d0d0d"/><stop offset="0.728" stop-color="#424242"/><stop offset="0.754" stop-color="#505050"/><stop offset="0.824" stop-color="#dadada"/><stop offset="0.841" stop-color="#f2f2f2"/><stop offset="0.858" stop-color="#fefefe"/><stop offset="0.884" stop-color="#f8f8f8"/><stop offset="0.910" stop-color="#dedede"/><stop offset="0.997" stop-color="#515151"/></linearGradient><linearGradient id="h143" gradientUnits="userSpaceOnUse" x1="0" y1="555.0" x2="0" y2="785.7"><stop offset="0.000" stop-color="#000000"/><stop offset="0.702" stop-color="#000000"/><stop offset="0.711" stop-color="#0d0d0d"/><stop offset="0.720" stop-color="#0d0d0d"/><stop offset="0.728" stop-color="#424242"/><stop offset="0.754" stop-color="#515151"/><stop offset="0.824" stop-color="#dbdbdb"/><stop offset="0.841" stop-color="#f3f3f3"/><stop offset="0.858" stop-color="#fefefe"/><stop offset="0.884" stop-color="#f8f8f8"/><stop offset="0.910" stop-color="#dddddd"/><stop offset="0.997" stop-color="#505050"/></linearGradient><linearGradient id="h144" gradientUnits="userSpaceOnUse" x1="0" y1="555.0" x2="0" y2="785.7"><stop offset="0.000" stop-color="#000000"/><stop offset="0.694" stop-color="#000000"/><stop offset="0.702" stop-color="#0d0d0d"/><stop offset="0.711" stop-color="#0d0d0d"/><stop offset="0.720" stop-color="#424242"/><stop offset="0.754" stop-color="#525252"/><stop offset="0.824" stop-color="#dcdcdc"/><stop offset="0.841" stop-color="#f4f4f4"/><stop offset="0.858" stop-color="#ffffff"/><stop offset="0.876" stop-color="#fcfcfc"/><stop offset="0.902" stop-color="#e7e7e7"/><stop offset="0.997" stop-color="#4f4f4f"/></linearGradient><linearGradient id="h145" gradientUnits="userSpaceOnUse" x1="0" y1="555.0" x2="0" y2="785.7"><stop offset="0.000" stop-color="#000000"/><stop offset="0.685" stop-color="#000000"/><stop offset="0.694" stop-color="#0d0d0d"/><stop offset="0.702" stop-color="#0d0d0d"/><stop offset="0.711" stop-color="#424242"/><stop offset="0.754" stop-color="#535353"/><stop offset="0.824" stop-color="#dddddd"/><stop offset="0.841" stop-color="#f4f4f4"/><stop offset="0.858" stop-color="#ffffff"/><stop offset="0.876" stop-color="#fcfcfc"/><stop offset="0.902" stop-color="#e6e6e6"/><stop offset="0.997" stop-color="#4f4f4f"/></linearGradient><linearGradient id="h146" gradientUnits="userSpaceOnUse" x1="0" y1="555.0" x2="0" y2="785.7"><stop offset="0.000" stop-color="#000000"/><stop offset="0.685" stop-color="#000000"/><stop offset="0.694" stop-color="#0d0d0d"/><stop offset="0.702" stop-color="#0d0d0d"/><stop offset="0.711" stop-color="#424242"/><stop offset="0.754" stop-color="#545454"/><stop offset="0.824" stop-color="#dedede"/><stop offset="0.841" stop-color="#f5f5f5"/><stop offset="0.858" stop-color="#ffffff"/><stop offset="0.876" stop-color="#fcfcfc"/><stop offset="0.902" stop-color="#e6e6e6"/><stop offset="0.997" stop-color="#4e4e4e"/></linearGradient><linearGradient id="h147" gradientUnits="userSpaceOnUse" x1="0" y1="555.0" x2="0" y2="785.7"><stop offset="0.000" stop-color="#000000"/><stop offset="0.685" stop-color="#000000"/><stop offset="0.694" stop-color="#0d0d0d"/><stop offset="0.702" stop-color="#0d0d0d"/><stop offset="0.711" stop-color="#424242"/><stop offset="0.754" stop-color="#555555"/><stop offset="0.824" stop-color="#dfdfdf"/><stop offset="0.841" stop-color="#f5f5f5"/><stop offset="0.858" stop-color="#ffffff"/><stop offset="0.876" stop-color="#fbfbfb"/><stop offset="0.902" stop-color="#e5e5e5"/><stop offset="0.997" stop-color="#4d4d4d"/></linearGradient><linearGradient id="h148" gradientUnits="userSpaceOnUse" x1="0" y1="555.0" x2="0" y2="785.7"><stop offset="0.000" stop-color="#000000"/><stop offset="0.685" stop-color="#000000"/><stop offset="0.694" stop-color="#0d0d0d"/><stop offset="0.702" stop-color="#0d0d0d"/><stop offset="0.711" stop-color="#424242"/><stop offset="0.754" stop-color="#565656"/><stop offset="0.824" stop-color="#e0e0e0"/><stop offset="0.841" stop-color="#f6f6f6"/><stop offset="0.858" stop-color="#ffffff"/><stop offset="0.876" stop-color="#fbfbfb"/><stop offset="0.902" stop-color="#e4e4e4"/><stop offset="0.997" stop-color="#4c4c4c"/></linearGradient><linearGradient id="h149" gradientUnits="userSpaceOnUse" x1="0" y1="555.0" x2="0" y2="785.7"><stop offset="0.000" stop-color="#000000"/><stop offset="0.685" stop-color="#000000"/><stop offset="0.694" stop-color="#0d0d0d"/><stop offset="0.702" stop-color="#0d0d0d"/><stop offset="0.711" stop-color="#424242"/><stop offset="0.754" stop-color="#575757"/><stop offset="0.824" stop-color="#e1e1e1"/><stop offset="0.841" stop-color="#f6f6f6"/><stop offset="0.858" stop-color="#ffffff"/><stop offset="0.876" stop-color="#fbfbfb"/><stop offset="0.902" stop-color="#e4e4e4"/><stop offset="0.997" stop-color="#4b4b4b"/></linearGradient><linearGradient id="h150" gradientUnits="userSpaceOnUse" x1="0" y1="555.0" x2="0" y2="785.7"><stop offset="0.000" stop-color="#000000"/><stop offset="0.685" stop-color="#000000"/><stop offset="0.694" stop-color="#0d0d0d"/><stop offset="0.702" stop-color="#0d0d0d"/><stop offset="0.711" stop-color="#424242"/><stop offset="0.754" stop-color="#585858"/><stop offset="0.824" stop-color="#e1e1e1"/><stop offset="0.841" stop-color="#f7f7f7"/><stop offset="0.858" stop-color="#ffffff"/><stop offset="0.876" stop-color="#fbfbfb"/><stop offset="0.902" stop-color="#e3e3e3"/><stop offset="0.997" stop-color="#4b4b4b"/></linearGradient><linearGradient id="h151" gradientUnits="userSpaceOnUse" x1="0" y1="555.0" x2="0" y2="785.7"><stop offset="0.000" stop-color="#000000"/><stop offset="0.676" stop-color="#000000"/><stop offset="0.685" stop-color="#0d0d0d"/><stop offset="0.694" stop-color="#0d0d0d"/><stop offset="0.702" stop-color="#424242"/><stop offset="0.754" stop-color="#595959"/><stop offset="0.824" stop-color="#e2e2e2"/><stop offset="0.841" stop-color="#f7f7f7"/><stop offset="0.858" stop-color="#ffffff"/><stop offset="0.876" stop-color="#fafafa"/><stop offset="0.902" stop-color="#e2e2e2"/><stop offset="0.997" stop-color="#4a4a4a"/></linearGradient><linearGradient id="h152" gradientUnits="userSpaceOnUse" x1="0" y1="555.0" x2="0" y2="785.7"><stop offset="0.000" stop-color="#000000"/><stop offset="0.676" stop-color="#000000"/><stop offset="0.685" stop-color="#0d0d0d"/><stop offset="0.694" stop-color="#0d0d0d"/><stop offset="0.702" stop-color="#424242"/><stop offset="0.754" stop-color="#5a5a5a"/><stop offset="0.824" stop-color="#e3e3e3"/><stop offset="0.841" stop-color="#f8f8f8"/><stop offset="0.858" stop-color="#ffffff"/><stop offset="0.876" stop-color="#fafafa"/><stop offset="0.902" stop-color="#e2e2e2"/><stop offset="0.997" stop-color="#494949"/></linearGradient><linearGradient id="h153" gradientUnits="userSpaceOnUse" x1="0" y1="555.0" x2="0" y2="785.7"><stop offset="0.000" stop-color="#000000"/><stop offset="0.676" stop-color="#000000"/><stop offset="0.685" stop-color="#0d0d0d"/><stop offset="0.694" stop-color="#0d0d0d"/><stop offset="0.702" stop-color="#424242"/><stop offset="0.746" stop-color="#525252"/><stop offset="0.754" stop-color="#5b5b5b"/><stop offset="0.824" stop-color="#e4e4e4"/><stop offset="0.841" stop-color="#f8f8f8"/><stop offset="0.858" stop-color="#ffffff"/><stop offset="0.876" stop-color="#fafafa"/><stop offset="0.902" stop-color="#e1e1e1"/><stop offset="0.997" stop-color="#494949"/></linearGradient><linearGradient id="h154" gradientUnits="userSpaceOnUse" x1="0" y1="555.0" x2="0" y2="785.7"><stop offset="0.000" stop-color="#000000"/><stop offset="0.676" stop-color="#000000"/><stop offset="0.685" stop-color="#0d0d0d"/><stop offset="0.694" stop-color="#0d0d0d"/><stop offset="0.702" stop-color="#424242"/><stop offset="0.746" stop-color="#525252"/><stop offset="0.754" stop-color="#5c5c5c"/><stop offset="0.824" stop-color="#e5e5e5"/><stop offset="0.841" stop-color="#f9f9f9"/><stop offset="0.858" stop-color="#ffffff"/><stop offset="0.876" stop-color="#f9f9f9"/><stop offset="0.902" stop-color="#e0e0e0"/><stop offset="0.997" stop-color="#484848"/></linearGradient><linearGradient id="h155" gradientUnits="userSpaceOnUse" x1="0" y1="555.0" x2="0" y2="785.7"><stop offset="0.000" stop-color="#000000"/><stop offset="0.676" stop-color="#000000"/><stop offset="0.685" stop-color="#0d0d0d"/><stop offset="0.694" stop-color="#0d0d0d"/><stop offset="0.702" stop-color="#424242"/><stop offset="0.746" stop-color="#535353"/><stop offset="0.754" stop-color="#5d5d5d"/><stop offset="0.824" stop-color="#e6e6e6"/><stop offset="0.841" stop-color="#f9f9f9"/><stop offset="0.858" stop-color="#ffffff"/><stop offset="0.876" stop-color="#f9f9f9"/><stop offset="0.902" stop-color="#dfdfdf"/><stop offset="0.997" stop-color="#474747"/></linearGradient><linearGradient id="h156" gradientUnits="userSpaceOnUse" x1="0" y1="555.0" x2="0" y2="785.7"><stop offset="0.000" stop-color="#000000"/><stop offset="0.676" stop-color="#000000"/><stop offset="0.685" stop-color="#0d0d0d"/><stop offset="0.694" stop-color="#0d0d0d"/><stop offset="0.702" stop-color="#424242"/><stop offset="0.746" stop-color="#535353"/><stop offset="0.754" stop-color="#5e5e5e"/><stop offset="0.824" stop-color="#e7e7e7"/><stop offset="0.841" stop-color="#fafafa"/><stop offset="0.858" stop-color="#ffffff"/><stop offset="0.876" stop-color="#f9f9f9"/><stop offset="0.902" stop-color="#dfdfdf"/><stop offset="0.997" stop-color="#464646"/></linearGradient><clipPath id="hclip"><polygon points="791.5,785.7 791.5,709.0 792.5,712.0 793.5,708.5 794.5,713.4 795.5,706.8 796.5,702.5 797.5,713.6 798.5,713.0 799.5,711.2 800.5,705.8 801.5,712.1 802.5,709.9 803.5,707.9 804.5,712.1 805.5,702.8 806.5,699.0 807.5,695.4 808.5,713.0 809.5,711.3 810.5,693.2 811.5,696.8 812.5,705.5 813.5,708.1 814.5,705.8 815.5,685.0 816.5,695.9 817.5,698.0 818.5,697.0 819.5,698.3 820.5,695.0 821.5,689.2 822.5,691.4 823.5,689.8 824.5,689.1 825.5,686.6 826.5,679.5 827.5,664.8 828.5,639.8 829.5,621.8 830.5,596.0 831.5,587.5 832.5,583.0 833.5,584.4 834.5,574.4 835.5,582.2 836.5,583.1 837.5,579.5 838.5,580.5 839.5,574.5 840.5,579.5 841.5,570.9 842.5,565.5 843.5,570.7 844.5,567.3 845.5,567.6 846.5,578.3 847.5,581.0 848.5,581.5 849.5,581.5 850.5,578.5 851.5,582.2 852.5,576.9 853.5,572.7 854.5,579.6 855.5,577.7 856.5,583.5 857.5,582.8 858.5,585.7 859.5,587.5 860.5,594.7 861.5,617.3 862.5,645.6 863.5,670.5 864.5,692.2 865.5,692.0 866.5,694.2 867.5,694.7 868.5,680.9 869.5,695.2 870.5,680.9 871.5,692.8 872.5,681.6 873.5,685.6 874.5,689.4 875.5,692.3 876.5,691.6 877.5,680.0 878.5,694.1 879.5,690.4 880.5,690.9 881.5,692.1 882.5,683.2 883.5,689.2 884.5,697.3 885.5,696.4 886.5,690.8 887.5,699.1 888.5,698.0 889.5,697.8 890.5,694.8 891.5,684.6 892.5,693.9 893.5,697.2 894.5,692.4 895.5,694.8 896.5,695.3 897.5,694.8 898.5,694.1 899.5,696.5 900.5,683.4 901.5,695.6 902.5,697.9 903.5,691.4 904.5,689.2 905.5,669.8 906.5,647.4 907.5,614.9 908.5,592.6 909.5,590.7 910.5,587.9 911.5,579.1 912.5,586.8 913.5,581.6 914.5,586.3 915.5,583.3 916.5,581.0 917.5,586.6 918.5,578.2 919.5,587.7 920.5,585.4 921.5,586.5 922.5,582.9 923.5,581.7 924.5,573.5 925.5,588.1 926.5,586.1 927.5,584.6 928.5,586.1 929.5,585.3 930.5,577.5 931.5,586.6 932.5,581.3 933.5,588.2 934.5,585.6 935.5,582.9 936.5,588.1 937.5,580.9 938.5,579.3 939.5,581.1 940.5,578.0 941.5,581.0 942.5,585.7 943.5,588.5 944.5,586.6 945.5,587.7 946.5,580.1 947.5,575.1 948.5,588.8 949.5,587.4 950.5,581.8 951.5,586.0 952.5,584.3 953.5,583.6 954.5,580.9 955.5,583.8 956.5,588.5 957.5,584.1 958.5,578.4 959.5,584.9 960.5,589.3 961.5,576.8 962.5,589.5 963.5,579.3 964.5,587.0 965.5,586.4 966.5,586.3 967.5,585.9 968.5,589.5 969.5,587.9 970.5,587.0 971.5,589.2 972.5,582.9 973.5,588.6 974.5,588.8 975.5,586.7 976.5,590.1 977.5,586.0 978.5,588.5 979.5,588.5 980.5,587.5 981.5,580.9 982.5,588.4 983.5,589.3 984.5,582.1 985.5,588.4 986.5,586.2 987.5,579.8 988.5,589.9 989.5,580.7 990.5,586.2 991.5,589.3 992.5,587.4 993.5,586.6 994.5,589.4 995.5,587.4 996.5,589.3 997.5,582.3 998.5,588.4 999.5,583.6 1000.5,588.2 1001.5,587.7 1002.5,587.1 1003.5,577.7 1004.5,588.8 1005.5,581.4 1006.5,587.5 1007.5,584.2 1008.5,581.6 1009.5,587.6 1010.5,586.7 1011.5,586.6 1012.5,587.4 1013.5,578.9 1014.5,588.2 1015.5,584.7 1016.5,583.8 1017.5,575.2 1018.5,588.7 1019.5,586.2 1020.5,593.4 1021.5,609.5 1022.5,641.6 1023.5,670.2 1024.5,687.9 1025.5,712.8 1026.5,714.6 1027.5,718.5 1028.5,720.9 1029.5,726.2 1030.5,726.5 1031.5,726.4 1032.5,729.8 1033.5,729.2 1034.5,720.6 1035.5,731.9 1036.5,728.2 1037.5,731.1 1038.5,730.6 1039.5,727.0 1040.5,729.3 1041.5,724.8 1042.5,724.7 1043.5,729.0 1044.5,727.4 1045.5,725.7 1046.5,726.9 1047.5,718.3 1048.5,722.9 1049.5,722.6 1050.5,722.8 1051.5,721.5 1052.5,722.6 1053.5,718.9 1054.5,721.9 1055.5,715.2 1056.5,707.6 1057.5,718.5 1058.5,718.6 1059.5,708.3 1060.5,716.1 1061.5,711.2 1062.5,713.7 1063.5,713.2 1064.5,709.8 1065.5,707.1 1066.5,712.3 1067.5,707.0 1068.5,709.5 1069.5,707.3 1070.5,708.0 1071.5,700.0 1072.5,708.3 1073.5,701.7 1074.5,701.8 1075.5,704.5 1076.5,703.6 1077.5,700.9 1078.5,702.0 1079.5,704.3 1080.5,693.4 1081.5,702.1 1082.5,702.5 1083.5,701.1 1084.5,700.0 1085.5,699.2 1086.5,696.6 1087.5,697.8 1088.5,699.5 1089.5,698.6 1090.5,697.6 1091.5,693.8 1092.5,693.4 1093.5,697.7 1094.5,691.8 1095.5,695.9 1096.5,699.6 1097.5,697.0 1098.5,692.1 1099.5,700.3 1100.5,701.5 1101.5,701.6 1102.5,698.9 1103.5,703.3 1104.5,703.4 1105.5,704.4 1106.5,703.2 1107.5,706.2 1108.5,703.8 1109.5,700.4 1110.5,705.1 1111.5,702.9 1112.5,707.0 1113.5,703.0 1114.5,705.3 1115.5,708.6 1116.5,708.6 1117.5,709.8 1118.5,710.5 1119.5,705.7 1120.5,711.2 1121.5,713.0 1122.5,702.0 1123.5,709.6 1124.5,713.4 1125.5,714.7 1126.5,714.3 1127.5,714.6 1128.5,715.6 1129.5,712.1 1130.5,714.3 1131.5,715.5 1132.5,715.2 1133.5,711.4 1134.5,717.1 1135.5,712.7 1136.5,717.4 1137.5,717.6 1138.5,713.2 1139.5,716.7 1140.5,714.5 1141.5,715.8 1142.5,713.2 1143.5,714.4 1144.5,719.6 1145.5,718.9 1146.5,720.0 1147.5,719.5 1148.5,719.6 1149.5,716.3 1150.5,711.8 1151.5,717.6 1152.5,712.8 1153.5,713.8 1154.5,717.7 1155.5,721.4 1156.5,719.3 1157.5,721.7 1158.5,719.9 1159.5,722.2 1160.5,719.2 1161.5,719.6 1162.5,722.2 1163.5,720.1 1164.5,718.9 1165.5,722.5 1166.5,721.4 1167.5,719.0 1168.5,719.2 1169.5,716.6 1170.5,717.8 1171.5,717.2 1172.5,716.8 1173.5,720.3 1174.5,719.5 1175.5,718.1 1176.5,714.5 1177.5,708.9 1178.5,699.0 1179.5,707.1 1180.5,721.1 1181.5,718.8 1182.5,716.3 1183.5,712.7 1184.5,720.2 1185.5,720.1 1186.5,716.3 1187.5,716.9 1188.5,719.2 1189.5,721.0 1190.5,723.1 1191.5,723.1 1192.5,722.6 1193.5,723.5 1194.5,721.1 1195.5,721.6 1196.5,722.6 1197.5,725.1 1198.5,725.3 1199.5,725.7 1200.5,713.6 1201.5,725.9 1202.5,724.5 1203.5,723.9 1204.5,724.3 1205.5,723.5 1206.5,724.7 1207.5,728.1 1208.5,725.4 1209.5,728.5 1210.5,724.6 1211.5,724.3 1212.5,725.7 1213.5,723.0 1214.5,722.8 1215.5,727.5 1216.5,719.5 1217.5,724.4 1218.5,726.3 1219.5,726.4 1220.5,724.3 1221.5,723.4 1222.5,726.4 1223.5,725.0 1224.5,718.0 1225.5,722.6 1226.5,720.6 1227.5,718.2 1228.5,724.2 1229.5,721.0 1230.5,719.0 1231.5,721.5 1232.5,720.5 1233.5,719.4 1234.5,723.5 1235.5,720.8 1236.5,715.0 1237.5,721.0 1238.5,721.9 1239.5,719.1 1240.5,715.5 1241.5,715.8 1242.5,715.7 1243.5,718.1 1244.5,721.3 1245.5,712.6 1246.5,716.1 1247.5,717.3 1248.5,717.3 1249.5,721.8 1250.5,717.1 1251.5,719.1 1252.5,721.4 1253.5,716.7 1254.5,719.6 1255.5,721.3 1256.5,717.9 1257.5,718.9 1258.5,721.1 1259.5,717.6 1260.5,718.0 1261.5,720.7 1262.0,785.7"/></clipPath><filter id="heat" filterUnits="userSpaceOnUse" x="789" y="553.0" width="475" height="235" color-interpolation-filters="sRGB"><feTurbulence type="fractalNoise" baseFrequency="0.43 0.39" numOctaves="3" seed="5" result="t"/><feColorMatrix in="t" type="matrix" values="1 0 0 0 0 1 0 0 0 0 1 0 0 0 0 0 0 0 0 1" result="n"/><feComponentTransfer in="n" result="n2"><feFuncR type="linear" slope="2.4" intercept="-0.7"/><feFuncG type="linear" slope="2.4" intercept="-0.7"/><feFuncB type="linear" slope="2.4" intercept="-0.7"/></feComponentTransfer><feComposite in="SourceGraphic" in2="n2" operator="arithmetic" k1="0" k2="1.25" k3="0.6" k4="-0.45" result="v"/><feComponentTransfer in="v" result="c"><feFuncR type="table" tableValues="1 0.876 0.752 0.592 0.394 0.197 0 0 0 0 0 0 0 0 0 0 0 0 0 0 0 0 0 0 0 0 0 0 0 0.036 0.081 0.152 0.206 0.242 0.278 0.314 0.293 0.272 0.251 0.222 0.193 0.165 0.366 0.567 0.746 0.915 1 1 1 1 1"/><feFuncG type="table" tableValues="1 0.983 0.965 0.946 0.923 0.901 0.878 0.853 0.828 0.803 0.778 0.753 0.73 0.707 0.684 0.662 0.639 0.612 0.58 0.549 0.518 0.477 0.427 0.376 0.326 0.295 0.27 0.245 0.22 0.341 0.477 0.661 0.788 0.859 0.929 1 0.939 0.877 0.816 0.711 0.607 0.502 0.584 0.666 0.789 0.93 0.896 0.689 0.478 0.239 0"/><feFuncB type="table" tableValues="1 0.983 0.965 0.946 0.923 0.901 0.878 0.878 0.878 0.878 0.878 0.878 0.878 0.878 0.878 0.878 0.878 0.871 0.855 0.839 0.824 0.807 0.791 0.774 0.757 0.728 0.694 0.661 0.627 0.471 0.303 0.101 0 0 0 0 0 0 0 0 0 0 0 0 0 0 0 0 0 0 0"/></feComponentTransfer><feGaussianBlur in="c" stdDeviation="0.6" result="cb"/><feComposite in="cb" in2="SourceGraphic" operator="in"/></filter></defs><g clip-path="url(#hclip)"><g filter="url(#heat)"><rect x="791.5" y="555.0" width="3.3" height="230.7" fill="url(#h0)"/><rect x="794.5" y="555.0" width="3.3" height="230.7" fill="url(#h1)"/><rect x="797.5" y="555.0" width="3.3" height="230.7" fill="url(#h2)"/><rect x="800.5" y="555.0" width="3.3" height="230.7" fill="url(#h3)"/><rect x="803.5" y="555.0" width="3.3" height="230.7" fill="url(#h4)"/><rect x="806.5" y="555.0" width="3.3" height="230.7" fill="url(#h5)"/><rect x="809.5" y="555.0" width="3.3" height="230.7" fill="url(#h6)"/><rect x="812.5" y="555.0" width="3.3" height="230.7" fill="url(#h7)"/><rect x="815.5" y="555.0" width="3.3" height="230.7" fill="url(#h8)"/><rect x="818.5" y="555.0" width="3.3" height="230.7" fill="url(#h9)"/><rect x="821.5" y="555.0" width="3.3" height="230.7" fill="url(#h10)"/><rect x="824.5" y="555.0" width="3.3" height="230.7" fill="url(#h11)"/><rect x="827.5" y="555.0" width="3.3" height="230.7" fill="url(#h12)"/><rect x="830.5" y="555.0" width="3.3" height="230.7" fill="url(#h13)"/><rect x="833.5" y="555.0" width="3.3" height="230.7" fill="url(#h14)"/><rect x="836.5" y="555.0" width="3.3" height="230.7" fill="url(#h15)"/><rect x="839.5" y="555.0" width="3.3" height="230.7" fill="url(#h16)"/><rect x="842.5" y="555.0" width="3.3" height="230.7" fill="url(#h17)"/><rect x="845.5" y="555.0" width="3.3" height="230.7" fill="url(#h18)"/><rect x="848.5" y="555.0" width="3.3" height="230.7" fill="url(#h19)"/><rect x="851.5" y="555.0" width="3.3" height="230.7" fill="url(#h20)"/><rect x="854.5" y="555.0" width="3.3" height="230.7" fill="url(#h21)"/><rect x="857.5" y="555.0" width="3.3" height="230.7" fill="url(#h22)"/><rect x="860.5" y="555.0" width="3.3" height="230.7" fill="url(#h23)"/><rect x="863.5" y="555.0" width="3.3" height="230.7" fill="url(#h24)"/><rect x="866.5" y="555.0" width="3.3" height="230.7" fill="url(#h25)"/><rect x="869.5" y="555.0" width="3.3" height="230.7" fill="url(#h26)"/><rect x="872.5" y="555.0" width="3.3" height="230.7" fill="url(#h27)"/><rect x="875.5" y="555.0" width="3.3" height="230.7" fill="url(#h28)"/><rect x="878.5" y="555.0" width="3.3" height="230.7" fill="url(#h29)"/><rect x="881.5" y="555.0" width="3.3" height="230.7" fill="url(#h30)"/><rect x="884.5" y="555.0" width="3.3" height="230.7" fill="url(#h31)"/><rect x="887.5" y="555.0" width="3.3" height="230.7" fill="url(#h32)"/><rect x="890.5" y="555.0" width="3.3" height="230.7" fill="url(#h33)"/><rect x="893.5" y="555.0" width="3.3" height="230.7" fill="url(#h34)"/><rect x="896.5" y="555.0" width="3.3" height="230.7" fill="url(#h35)"/><rect x="899.5" y="555.0" width="3.3" height="230.7" fill="url(#h36)"/><rect x="902.5" y="555.0" width="3.3" height="230.7" fill="url(#h37)"/><rect x="905.5" y="555.0" width="3.3" height="230.7" fill="url(#h38)"/><rect x="908.5" y="555.0" width="3.3" height="230.7" fill="url(#h39)"/><rect x="911.5" y="555.0" width="3.3" height="230.7" fill="url(#h40)"/><rect x="914.5" y="555.0" width="3.3" height="230.7" fill="url(#h41)"/><rect x="917.5" y="555.0" width="3.3" height="230.7" fill="url(#h42)"/><rect x="920.5" y="555.0" width="3.3" height="230.7" fill="url(#h43)"/><rect x="923.5" y="555.0" width="3.3" height="230.7" fill="url(#h44)"/><rect x="926.5" y="555.0" width="3.3" height="230.7" fill="url(#h45)"/><rect x="929.5" y="555.0" width="3.3" height="230.7" fill="url(#h46)"/><rect x="932.5" y="555.0" width="3.3" height="230.7" fill="url(#h47)"/><rect x="935.5" y="555.0" width="3.3" height="230.7" fill="url(#h48)"/><rect x="938.5" y="555.0" width="3.3" height="230.7" fill="url(#h49)"/><rect x="941.5" y="555.0" width="3.3" height="230.7" fill="url(#h50)"/><rect x="944.5" y="555.0" width="3.3" height="230.7" fill="url(#h51)"/><rect x="947.5" y="555.0" width="3.3" height="230.7" fill="url(#h52)"/><rect x="950.5" y="555.0" width="3.3" height="230.7" fill="url(#h53)"/><rect x="953.5" y="555.0" width="3.3" height="230.7" fill="url(#h54)"/><rect x="956.5" y="555.0" width="3.3" height="230.7" fill="url(#h55)"/><rect x="959.5" y="555.0" width="3.3" height="230.7" fill="url(#h56)"/><rect x="962.5" y="555.0" width="3.3" height="230.7" fill="url(#h57)"/><rect x="965.5" y="555.0" width="3.3" height="230.7" fill="url(#h58)"/><rect x="968.5" y="555.0" width="3.3" height="230.7" fill="url(#h59)"/><rect x="971.5" y="555.0" width="3.3" height="230.7" fill="url(#h60)"/><rect x="974.5" y="555.0" width="3.3" height="230.7" fill="url(#h61)"/><rect x="977.5" y="555.0" width="3.3" height="230.7" fill="url(#h62)"/><rect x="980.5" y="555.0" width="3.3" height="230.7" fill="url(#h63)"/><rect x="983.5" y="555.0" width="3.3" height="230.7" fill="url(#h64)"/><rect x="986.5" y="555.0" width="3.3" height="230.7" fill="url(#h65)"/><rect x="989.5" y="555.0" width="3.3" height="230.7" fill="url(#h66)"/><rect x="992.5" y="555.0" width="3.3" height="230.7" fill="url(#h67)"/><rect x="995.5" y="555.0" width="3.3" height="230.7" fill="url(#h68)"/><rect x="998.5" y="555.0" width="3.3" height="230.7" fill="url(#h69)"/><rect x="1001.5" y="555.0" width="3.3" height="230.7" fill="url(#h70)"/><rect x="1004.5" y="555.0" width="3.3" height="230.7" fill="url(#h71)"/><rect x="1007.5" y="555.0" width="3.3" height="230.7" fill="url(#h72)"/><rect x="1010.5" y="555.0" width="3.3" height="230.7" fill="url(#h73)"/><rect x="1013.5" y="555.0" width="3.3" height="230.7" fill="url(#h74)"/><rect x="1016.5" y="555.0" width="3.3" height="230.7" fill="url(#h75)"/><rect x="1019.5" y="555.0" width="3.3" height="230.7" fill="url(#h76)"/><rect x="1022.5" y="555.0" width="3.3" height="230.7" fill="url(#h77)"/><rect x="1025.5" y="555.0" width="3.3" height="230.7" fill="url(#h78)"/><rect x="1028.5" y="555.0" width="3.3" height="230.7" fill="url(#h79)"/><rect x="1031.5" y="555.0" width="3.3" height="230.7" fill="url(#h80)"/><rect x="1034.5" y="555.0" width="3.3" height="230.7" fill="url(#h81)"/><rect x="1037.5" y="555.0" width="3.3" height="230.7" fill="url(#h82)"/><rect x="1040.5" y="555.0" width="3.3" height="230.7" fill="url(#h83)"/><rect x="1043.5" y="555.0" width="3.3" height="230.7" fill="url(#h84)"/><rect x="1046.5" y="555.0" width="3.3" height="230.7" fill="url(#h85)"/><rect x="1049.5" y="555.0" width="3.3" height="230.7" fill="url(#h86)"/><rect x="1052.5" y="555.0" width="3.3" height="230.7" fill="url(#h87)"/><rect x="1055.5" y="555.0" width="3.3" height="230.7" fill="url(#h88)"/><rect x="1058.5" y="555.0" width="3.3" height="230.7" fill="url(#h89)"/><rect x="1061.5" y="555.0" width="3.3" height="230.7" fill="url(#h90)"/><rect x="1064.5" y="555.0" width="3.3" height="230.7" fill="url(#h91)"/><rect x="1067.5" y="555.0" width="3.3" height="230.7" fill="url(#h92)"/><rect x="1070.5" y="555.0" width="3.3" height="230.7" fill="url(#h93)"/><rect x="1073.5" y="555.0" width="3.3" height="230.7" fill="url(#h94)"/><rect x="1076.5" y="555.0" width="3.3" height="230.7" fill="url(#h95)"/><rect x="1079.5" y="555.0" width="3.3" height="230.7" fill="url(#h96)"/><rect x="1082.5" y="555.0" width="3.3" height="230.7" fill="url(#h97)"/><rect x="1085.5" y="555.0" width="3.3" height="230.7" fill="url(#h98)"/><rect x="1088.5" y="555.0" width="3.3" height="230.7" fill="url(#h99)"/><rect x="1091.5" y="555.0" width="3.3" height="230.7" fill="url(#h100)"/><rect x="1094.5" y="555.0" width="3.3" height="230.7" fill="url(#h101)"/><rect x="1097.5" y="555.0" width="3.3" height="230.7" fill="url(#h102)"/><rect x="1100.5" y="555.0" width="3.3" height="230.7" fill="url(#h103)"/><rect x="1103.5" y="555.0" width="3.3" height="230.7" fill="url(#h104)"/><rect x="1106.5" y="555.0" width="3.3" height="230.7" fill="url(#h105)"/><rect x="1109.5" y="555.0" width="3.3" height="230.7" fill="url(#h106)"/><rect x="1112.5" y="555.0" width="3.3" height="230.7" fill="url(#h107)"/><rect x="1115.5" y="555.0" width="3.3" height="230.7" fill="url(#h108)"/><rect x="1118.5" y="555.0" width="3.3" height="230.7" fill="url(#h109)"/><rect x="1121.5" y="555.0" width="3.3" height="230.7" fill="url(#h110)"/><rect x="1124.5" y="555.0" width="3.3" height="230.7" fill="url(#h111)"/><rect x="1127.5" y="555.0" width="3.3" height="230.7" fill="url(#h112)"/><rect x="1130.5" y="555.0" width="3.3" height="230.7" fill="url(#h113)"/><rect x="1133.5" y="555.0" width="3.3" height="230.7" fill="url(#h114)"/><rect x="1136.5" y="555.0" width="3.3" height="230.7" fill="url(#h115)"/><rect x="1139.5" y="555.0" width="3.3" height="230.7" fill="url(#h116)"/><rect x="1142.5" y="555.0" width="3.3" height="230.7" fill="url(#h117)"/><rect x="1145.5" y="555.0" width="3.3" height="230.7" fill="url(#h118)"/><rect x="1148.5" y="555.0" width="3.3" height="230.7" fill="url(#h119)"/><rect x="1151.5" y="555.0" width="3.3" height="230.7" fill="url(#h120)"/><rect x="1154.5" y="555.0" width="3.3" height="230.7" fill="url(#h121)"/><rect x="1157.5" y="555.0" width="3.3" height="230.7" fill="url(#h122)"/><rect x="1160.5" y="555.0" width="3.3" height="230.7" fill="url(#h123)"/><rect x="1163.5" y="555.0" width="3.3" height="230.7" fill="url(#h124)"/><rect x="1166.5" y="555.0" width="3.3" height="230.7" fill="url(#h125)"/><rect x="1169.5" y="555.0" width="3.3" height="230.7" fill="url(#h126)"/><rect x="1172.5" y="555.0" width="3.3" height="230.7" fill="url(#h127)"/><rect x="1175.5" y="555.0" width="3.3" height="230.7" fill="url(#h128)"/><rect x="1178.5" y="555.0" width="3.3" height="230.7" fill="url(#h129)"/><rect x="1181.5" y="555.0" width="3.3" height="230.7" fill="url(#h130)"/><rect x="1184.5" y="555.0" width="3.3" height="230.7" fill="url(#h131)"/><rect x="1187.5" y="555.0" width="3.3" height="230.7" fill="url(#h132)"/><rect x="1190.5" y="555.0" width="3.3" height="230.7" fill="url(#h133)"/><rect x="1193.5" y="555.0" width="3.3" height="230.7" fill="url(#h134)"/><rect x="1196.5" y="555.0" width="3.3" height="230.7" fill="url(#h135)"/><rect x="1199.5" y="555.0" width="3.3" height="230.7" fill="url(#h136)"/><rect x="1202.5" y="555.0" width="3.3" height="230.7" fill="url(#h137)"/><rect x="1205.5" y="555.0" width="3.3" height="230.7" fill="url(#h138)"/><rect x="1208.5" y="555.0" width="3.3" height="230.7" fill="url(#h139)"/><rect x="1211.5" y="555.0" width="3.3" height="230.7" fill="url(#h140)"/><rect x="1214.5" y="555.0" width="3.3" height="230.7" fill="url(#h141)"/><rect x="1217.5" y="555.0" width="3.3" height="230.7" fill="url(#h142)"/><rect x="1220.5" y="555.0" width="3.3" height="230.7" fill="url(#h143)"/><rect x="1223.5" y="555.0" width="3.3" height="230.7" fill="url(#h144)"/><rect x="1226.5" y="555.0" width="3.3" height="230.7" fill="url(#h145)"/><rect x="1229.5" y="555.0" width="3.3" height="230.7" fill="url(#h146)"/><rect x="1232.5" y="555.0" width="3.3" height="230.7" fill="url(#h147)"/><rect x="1235.5" y="555.0" width="3.3" height="230.7" fill="url(#h148)"/><rect x="1238.5" y="555.0" width="3.3" height="230.7" fill="url(#h149)"/><rect x="1241.5" y="555.0" width="3.3" height="230.7" fill="url(#h150)"/><rect x="1244.5" y="555.0" width="3.3" height="230.7" fill="url(#h151)"/><rect x="1247.5" y="555.0" width="3.3" height="230.7" fill="url(#h152)"/><rect x="1250.5" y="555.0" width="3.3" height="230.7" fill="url(#h153)"/><rect x="1253.5" y="555.0" width="3.3" height="230.7" fill="url(#h154)"/><rect x="1256.5" y="555.0" width="3.3" height="230.7" fill="url(#h155)"/><rect x="1259.5" y="555.0" width="3.3" height="230.7" fill="url(#h156)"/><polygon points="972.0,722 973.1,676 973.9,676 975.0,722" fill="#ededed"/><polygon points="978.7,722 979.8,684 980.6,684 981.7,722" fill="#ededed"/><polygon points="982.4,722 983.5,680.5 984.3,680.5 985.4,722" fill="#ededed"/><polygon points="985.9,722 987.0,689 987.8,689 988.9,722" fill="#ededed"/><polygon points="992.9,722 994.0,693 994.8,693 995.9,722" fill="#ededed"/><polygon points="968.0,722 969.1,697 969.9,697 971.0,722" fill="#ededed"/><polygon points="996.5,722 997.6,699 998.4,699 999.5,722" fill="#ededed"/><polygon points="821.5,742 823.5,716 826.5,693 829,690 830.5,700 830.5,742" fill="#dbdbdb"/><polygon points="806.6,722 807.5,692 808.1,692 809.0,722" fill="#8c8c8c"/><polygon points="810.6,722 811.5,690 812.1,690 813.0,722" fill="#737373"/><polygon points="814.8,722 815.7,691 816.3,691 817.2,722" fill="#737373"/><polygon points="1177.2,722 1178.1,699 1178.7,699 1179.6,722" fill="#808080"/><rect x="975.4" y="728" width="1.2" height="57.7" fill="#000"/><rect x="981.3" y="722" width="1.2" height="63.7" fill="#000"/><rect x="984.6" y="726" width="1.2" height="59.7" fill="#000"/><rect x="989.7" y="730" width="1.2" height="55.7" fill="#000"/><rect x="806.0" y="716" width="1.2" height="69.7" fill="#000"/><rect x="1178.0" y="748" width="1.2" height="37.7" fill="#000"/></g></g><polyline points="791.5,709.0 792.5,712.0 793.5,708.5 794.5,713.4 795.5,706.8 796.5,702.5 797.5,713.6 798.5,713.0 799.5,711.2 800.5,705.8 801.5,712.1 802.5,709.9 803.5,707.9 804.5,712.1 805.5,702.8 806.5,699.0 807.5,695.4 808.5,713.0 809.5,711.3 810.5,693.2 811.5,696.8 812.5,705.5 813.5,708.1 814.5,705.8 815.5,685.0 816.5,695.9 817.5,698.0 818.5,697.0 819.5,698.3 820.5,695.0 821.5,689.2 822.5,691.4 823.5,689.8 824.5,689.1 825.5,686.6 826.5,679.5 827.5,664.8 828.5,639.8 829.5,621.8 830.5,596.0 831.5,587.5 832.5,583.0 833.5,584.4 834.5,574.4 835.5,582.2 836.5,583.1 837.5,579.5 838.5,580.5 839.5,574.5 840.5,579.5 841.5,570.9 842.5,565.5 843.5,570.7 844.5,567.3 845.5,567.6 846.5,578.3 847.5,581.0 848.5,581.5 849.5,581.5 850.5,578.5 851.5,582.2 852.5,576.9 853.5,572.7 854.5,579.6 855.5,577.7 856.5,583.5 857.5,582.8 858.5,585.7 859.5,587.5 860.5,594.7 861.5,617.3 862.5,645.6 863.5,670.5 864.5,692.2 865.5,692.0 866.5,694.2 867.5,694.7 868.5,680.9 869.5,695.2 870.5,680.9 871.5,692.8 872.5,681.6 873.5,685.6 874.5,689.4 875.5,692.3 876.5,691.6 877.5,680.0 878.5,694.1 879.5,690.4 880.5,690.9 881.5,692.1 882.5,683.2 883.5,689.2 884.5,697.3 885.5,696.4 886.5,690.8 887.5,699.1 888.5,698.0 889.5,697.8 890.5,694.8 891.5,684.6 892.5,693.9 893.5,697.2 894.5,692.4 895.5,694.8 896.5,695.3 897.5,694.8 898.5,694.1 899.5,696.5 900.5,683.4 901.5,695.6 902.5,697.9 903.5,691.4 904.5,689.2 905.5,669.8 906.5,647.4 907.5,614.9 908.5,592.6 909.5,590.7 910.5,587.9 911.5,579.1 912.5,586.8 913.5,581.6 914.5,586.3 915.5,583.3 916.5,581.0 917.5,586.6 918.5,578.2 919.5,587.7 920.5,585.4 921.5,586.5 922.5,582.9 923.5,581.7 924.5,573.5 925.5,588.1 926.5,586.1 927.5,584.6 928.5,586.1 929.5,585.3 930.5,577.5 931.5,586.6 932.5,581.3 933.5,588.2 934.5,585.6 935.5,582.9 936.5,588.1 937.5,580.9 938.5,579.3 939.5,581.1 940.5,578.0 941.5,581.0 942.5,585.7 943.5,588.5 944.5,586.6 945.5,587.7 946.5,580.1 947.5,575.1 948.5,588.8 949.5,587.4 950.5,581.8 951.5,586.0 952.5,584.3 953.5,583.6 954.5,580.9 955.5,583.8 956.5,588.5 957.5,584.1 958.5,578.4 959.5,584.9 960.5,589.3 961.5,576.8 962.5,589.5 963.5,579.3 964.5,587.0 965.5,586.4 966.5,586.3 967.5,585.9 968.5,589.5 969.5,587.9 970.5,587.0 971.5,589.2 972.5,582.9 973.5,588.6 974.5,588.8 975.5,586.7 976.5,590.1 977.5,586.0 978.5,588.5 979.5,588.5 980.5,587.5 981.5,580.9 982.5,588.4 983.5,589.3 984.5,582.1 985.5,588.4 986.5,586.2 987.5,579.8 988.5,589.9 989.5,580.7 990.5,586.2 991.5,589.3 992.5,587.4 993.5,586.6 994.5,589.4 995.5,587.4 996.5,589.3 997.5,582.3 998.5,588.4 999.5,583.6 1000.5,588.2 1001.5,587.7 1002.5,587.1 1003.5,577.7 1004.5,588.8 1005.5,581.4 1006.5,587.5 1007.5,584.2 1008.5,581.6 1009.5,587.6 1010.5,586.7 1011.5,586.6 1012.5,587.4 1013.5,578.9 1014.5,588.2 1015.5,584.7 1016.5,583.8 1017.5,575.2 1018.5,588.7 1019.5,586.2 1020.5,593.4 1021.5,609.5 1022.5,641.6 1023.5,670.2 1024.5,687.9 1025.5,712.8 1026.5,714.6 1027.5,718.5 1028.5,720.9 1029.5,726.2 1030.5,726.5 1031.5,726.4 1032.5,729.8 1033.5,729.2 1034.5,720.6 1035.5,731.9 1036.5,728.2 1037.5,731.1 1038.5,730.6 1039.5,727.0 1040.5,729.3 1041.5,724.8 1042.5,724.7 1043.5,729.0 1044.5,727.4 1045.5,725.7 1046.5,726.9 1047.5,718.3 1048.5,722.9 1049.5,722.6 1050.5,722.8 1051.5,721.5 1052.5,722.6 1053.5,718.9 1054.5,721.9 1055.5,715.2 1056.5,707.6 1057.5,718.5 1058.5,718.6 1059.5,708.3 1060.5,716.1 1061.5,711.2 1062.5,713.7 1063.5,713.2 1064.5,709.8 1065.5,707.1 1066.5,712.3 1067.5,707.0 1068.5,709.5 1069.5,707.3 1070.5,708.0 1071.5,700.0 1072.5,708.3 1073.5,701.7 1074.5,701.8 1075.5,704.5 1076.5,703.6 1077.5,700.9 1078.5,702.0 1079.5,704.3 1080.5,693.4 1081.5,702.1 1082.5,702.5 1083.5,701.1 1084.5,700.0 1085.5,699.2 1086.5,696.6 1087.5,697.8 1088.5,699.5 1089.5,698.6 1090.5,697.6 1091.5,693.8 1092.5,693.4 1093.5,697.7 1094.5,691.8 1095.5,695.9 1096.5,699.6 1097.5,697.0 1098.5,692.1 1099.5,700.3 1100.5,701.5 1101.5,701.6 1102.5,698.9 1103.5,703.3 1104.5,703.4 1105.5,704.4 1106.5,703.2 1107.5,706.2 1108.5,703.8 1109.5,700.4 1110.5,705.1 1111.5,702.9 1112.5,707.0 1113.5,703.0 1114.5,705.3 1115.5,708.6 1116.5,708.6 1117.5,709.8 1118.5,710.5 1119.5,705.7 1120.5,711.2 1121.5,713.0 1122.5,702.0 1123.5,709.6 1124.5,713.4 1125.5,714.7 1126.5,714.3 1127.5,714.6 1128.5,715.6 1129.5,712.1 1130.5,714.3 1131.5,715.5 1132.5,715.2 1133.5,711.4 1134.5,717.1 1135.5,712.7 1136.5,717.4 1137.5,717.6 1138.5,713.2 1139.5,716.7 1140.5,714.5 1141.5,715.8 1142.5,713.2 1143.5,714.4 1144.5,719.6 1145.5,718.9 1146.5,720.0 1147.5,719.5 1148.5,719.6 1149.5,716.3 1150.5,711.8 1151.5,717.6 1152.5,712.8 1153.5,713.8 1154.5,717.7 1155.5,721.4 1156.5,719.3 1157.5,721.7 1158.5,719.9 1159.5,722.2 1160.5,719.2 1161.5,719.6 1162.5,722.2 1163.5,720.1 1164.5,718.9 1165.5,722.5 1166.5,721.4 1167.5,719.0 1168.5,719.2 1169.5,716.6 1170.5,717.8 1171.5,717.2 1172.5,716.8 1173.5,720.3 1174.5,719.5 1175.5,718.1 1176.5,714.5 1177.5,708.9 1178.5,699.0 1179.5,707.1 1180.5,721.1 1181.5,718.8 1182.5,716.3 1183.5,712.7 1184.5,720.2 1185.5,720.1 1186.5,716.3 1187.5,716.9 1188.5,719.2 1189.5,721.0 1190.5,723.1 1191.5,723.1 1192.5,722.6 1193.5,723.5 1194.5,721.1 1195.5,721.6 1196.5,722.6 1197.5,725.1 1198.5,725.3 1199.5,725.7 1200.5,713.6 1201.5,725.9 1202.5,724.5 1203.5,723.9 1204.5,724.3 1205.5,723.5 1206.5,724.7 1207.5,728.1 1208.5,725.4 1209.5,728.5 1210.5,724.6 1211.5,724.3 1212.5,725.7 1213.5,723.0 1214.5,722.8 1215.5,727.5 1216.5,719.5 1217.5,724.4 1218.5,726.3 1219.5,726.4 1220.5,724.3 1221.5,723.4 1222.5,726.4 1223.5,725.0 1224.5,718.0 1225.5,722.6 1226.5,720.6 1227.5,718.2 1228.5,724.2 1229.5,721.0 1230.5,719.0 1231.5,721.5 1232.5,720.5 1233.5,719.4 1234.5,723.5 1235.5,720.8 1236.5,715.0 1237.5,721.0 1238.5,721.9 1239.5,719.1 1240.5,715.5 1241.5,715.8 1242.5,715.7 1243.5,718.1 1244.5,721.3 1245.5,712.6 1246.5,716.1 1247.5,717.3 1248.5,717.3 1249.5,721.8 1250.5,717.1 1251.5,719.1 1252.5,721.4 1253.5,716.7 1254.5,719.6 1255.5,721.3 1256.5,717.9 1257.5,718.9 1258.5,721.1 1259.5,717.6 1260.5,718.0 1261.5,720.7" fill="none" stroke="#3d7fb5" stroke-width="0.9" stroke-opacity="0.85" stroke-linejoin="round"/><rect x="791.5" y="785.1" width="470.5" height="1.1" fill="#e8503a"/><text x="788" y="521.0" text-anchor="end" font-family="Liberation Sans, sans-serif" font-size="4.6" fill="#888">10</text><rect x="788.8" y="519.1" width="1.6" height="0.7" fill="#888"/><text x="788" y="559.1" text-anchor="end" font-family="Liberation Sans, sans-serif" font-size="4.6" fill="#888">0</text><rect x="788.8" y="557.2" width="1.6" height="0.7" fill="#888"/><text x="788" y="597.2" text-anchor="end" font-family="Liberation Sans, sans-serif" font-size="4.6" fill="#888">-10</text><rect x="788.8" y="595.3" width="1.6" height="0.7" fill="#888"/><text x="788" y="635.3" text-anchor="end" font-family="Liberation Sans, sans-serif" font-size="4.6" fill="#888">-20</text><rect x="788.8" y="633.4" width="1.6" height="0.7" fill="#888"/><text x="788" y="673.4" text-anchor="end" font-family="Liberation Sans, sans-serif" font-size="4.6" fill="#888">-30</text><rect x="788.8" y="671.5" width="1.6" height="0.7" fill="#888"/><text x="788" y="711.5" text-anchor="end" font-family="Liberation Sans, sans-serif" font-size="4.6" fill="#888">-40</text><rect x="788.8" y="709.6" width="1.6" height="0.7" fill="#888"/><text x="788" y="749.6" text-anchor="end" font-family="Liberation Sans, sans-serif" font-size="4.6" fill="#888">-50</text><rect x="788.8" y="747.7" width="1.6" height="0.7" fill="#888"/><text x="788" y="787.7" text-anchor="end" font-family="Liberation Sans, sans-serif" font-size="4.6" fill="#888">-60</text><rect x="788.8" y="785.8" width="1.6" height="0.7" fill="#888"/><text x="844.6" y="795.4" text-anchor="middle" font-family="Liberation Sans, sans-serif" font-size="4.6" fill="#888">10.00</text><text x="900.2" y="795.4" text-anchor="middle" font-family="Liberation Sans, sans-serif" font-size="4.6" fill="#888">20.00</text><text x="955.8" y="795.4" text-anchor="middle" font-family="Liberation Sans, sans-serif" font-size="4.6" fill="#888">30.00</text><text x="1011.4" y="795.4" text-anchor="middle" font-family="Liberation Sans, sans-serif" font-size="4.6" fill="#888">40.00</text><text x="1067.0" y="795.4" text-anchor="middle" font-family="Liberation Sans, sans-serif" font-size="4.6" fill="#888">50.00</text><text x="1122.6" y="795.4" text-anchor="middle" font-family="Liberation Sans, sans-serif" font-size="4.6" fill="#888">60.00</text><text x="1178.2" y="795.4" text-anchor="middle" font-family="Liberation Sans, sans-serif" font-size="4.6" fill="#888">70.00</text><text x="1233.8" y="795.4" text-anchor="middle" font-family="Liberation Sans, sans-serif" font-size="4.6" fill="#888">80.00</text><text x="1028" y="803" text-anchor="middle" font-family="Liberation Sans, sans-serif" font-size="4.4" fill="#999">Frequency [MHz]</text><text transform="translate(779.5 640) rotate(-90)" text-anchor="middle" font-family="Liberation Sans, sans-serif" font-size="4.4" fill="#999">Level [dBmV]</text><defs><linearGradient id="cbar" x1="0" y1="0" x2="0" y2="1"><stop offset="0.000" stop-color="rgb(255,0,0)"/><stop offset="0.042" stop-color="rgb(255,128,0)"/><stop offset="0.090" stop-color="rgb(255,255,0)"/><stop offset="0.134" stop-color="rgb(160,176,0)"/><stop offset="0.180" stop-color="rgb(42,128,0)"/><stop offset="0.240" stop-color="rgb(64,208,0)"/><stop offset="0.300" stop-color="rgb(80,255,0)"/><stop offset="0.370" stop-color="rgb(48,192,0)"/><stop offset="0.405" stop-color="rgb(16,110,90)"/><stop offset="0.440" stop-color="rgb(0,56,160)"/><stop offset="0.515" stop-color="rgb(0,80,192)"/><stop offset="0.590" stop-color="rgb(0,128,208)"/><stop offset="0.670" stop-color="rgb(0,160,224)"/><stop offset="0.780" stop-color="rgb(0,192,224)"/><stop offset="0.880" stop-color="rgb(0,224,224)"/><stop offset="0.950" stop-color="rgb(176,244,244)"/><stop offset="1.000" stop-color="rgb(255,255,255)"/></linearGradient></defs><rect x="1274" y="500.4" width="10.2" height="282.6" fill="url(#cbar)" stroke="#b8b8b8" stroke-width="0.5"/><text x="1285.6" y="527.5" font-family="Liberation Sans, sans-serif" font-size="4.2" fill="#999">10</text><text x="1285.6" y="578.9" font-family="Liberation Sans, sans-serif" font-size="4.2" fill="#999">8</text><text x="1285.6" y="630.3" font-family="Liberation Sans, sans-serif" font-size="4.2" fill="#999">6</text><text x="1285.6" y="681.7" font-family="Liberation Sans, sans-serif" font-size="4.2" fill="#999">4</text><text x="1285.6" y="733.1" font-family="Liberation Sans, sans-serif" font-size="4.2" fill="#999">2</text><text x="1285.6" y="784.5" font-family="Liberation Sans, sans-serif" font-size="4.2" fill="#999">0</text><text transform="translate(1291.8 641) rotate(-90)" text-anchor="middle" font-family="Liberation Sans, sans-serif" font-size="4.4" fill="#e04030">Weight = 10 x Dec</text><rect x="1266" y="495.2" width="3.6" height="3.2" rx=".8" fill="#d4d4d4"/><rect x="1280.5" y="495.2" width="3.6" height="3.2" rx=".8" fill="#d4d4d4"/><rect x="1289.5" y="495.2" width="3.6" height="3.2" rx=".8" fill="#d4d4d4"/></svg>
<div class="abs" style="left:0;top:0;width:1320px;height:1px;background:#d9b8f5"></div>
<div class="abs" style="left:0;top:0;width:1.2px;height:88px;background:#8a4fc8"></div><div class="abs" style="left:0;top:88px;width:1.2px;height:748px;background:#7a6a9c"></div>
<div class="abs" style="left:1318px;top:0;width:2px;height:836px;background:#d9c6ee"></div>
<div class="abs" style="left:1318.5px;top:288px;width:1.5px;height:34px;background:#4a1a90"></div><div class="abs" style="left:1318.7px;top:529px;width:1.3px;height:17px;background:#1a0a30"></div>
<div class="abs" style="left:0;top:834.7px;width:1320px;height:1.3px;background:#8272aa"></div>
</div></body></html>
